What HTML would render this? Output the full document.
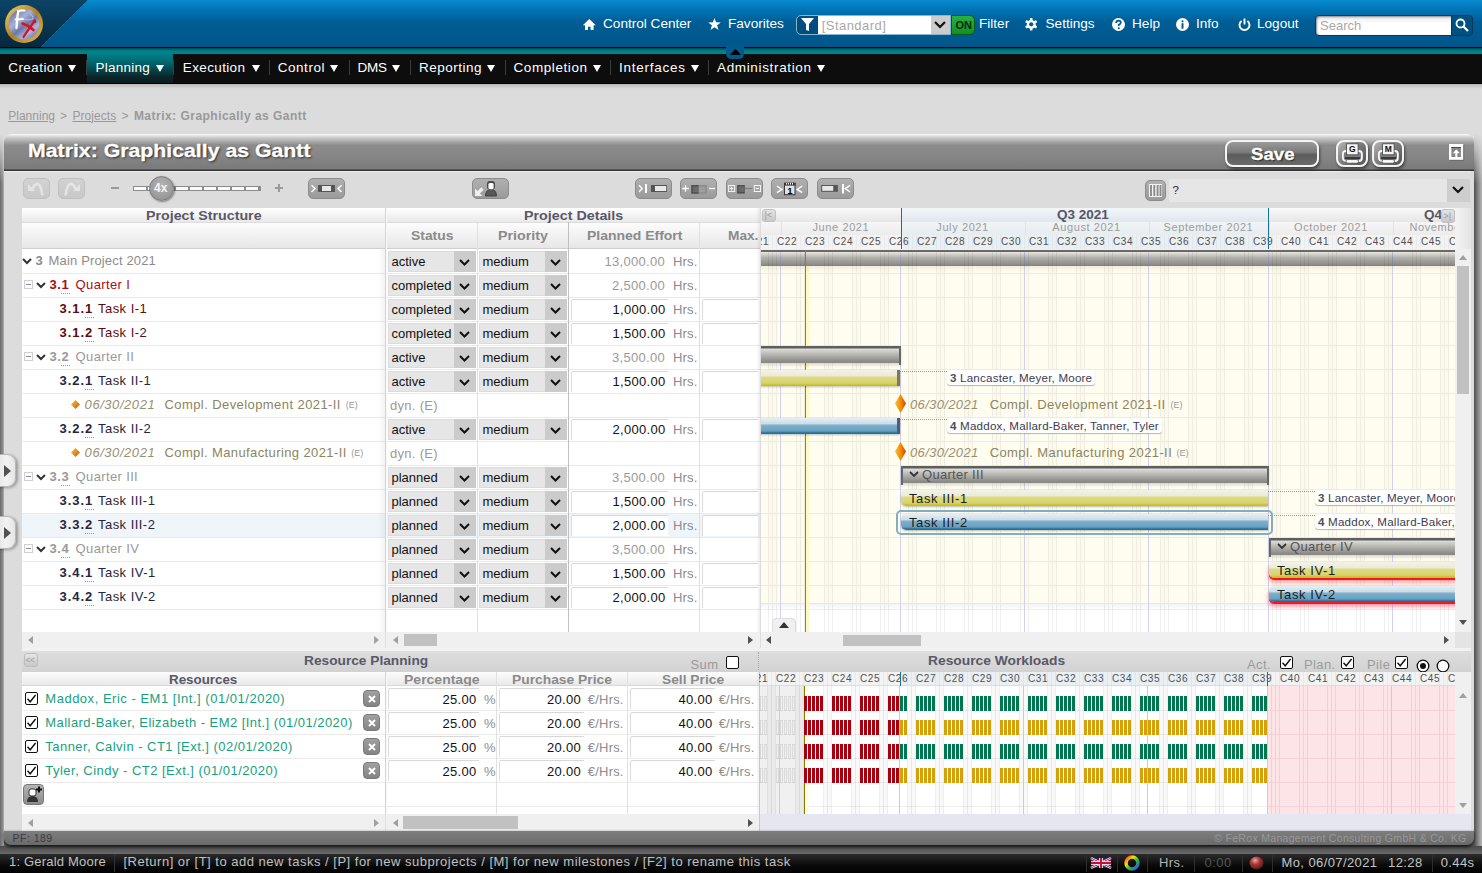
<!DOCTYPE html>
<html><head><meta charset="utf-8"><title>Matrix: Graphically as Gantt</title><style>
*{box-sizing:border-box}
html,body{margin:0;padding:0}
body{width:1482px;height:873px;overflow:hidden;position:relative;background:#dcdcdc;font-family:"Liberation Sans",sans-serif;font-size:13px;color:#222}
.a{position:absolute}
.t{position:absolute;white-space:nowrap}
svg{position:absolute;overflow:visible}
</style></head><body>
<div class="a" style="left:0px;top:0px;width:1482px;height:47px;background:linear-gradient(#0a8bd0 0px,#0074b6 10px,#005d94 22px,#00568b 46px)"></div>
<svg style="left:0;top:0" width="90" height="47"><defs><linearGradient id="tg" x1="0" y1="0" x2="0" y2="1"><stop offset="0" stop-color="#0c4466"/><stop offset="1" stop-color="#06283e"/></linearGradient>
<linearGradient id="lg" x1="0.1" y1="0" x2="0.9" y2="1"><stop offset="0" stop-color="#5a6898"/><stop offset="0.35" stop-color="#a8b0d8"/><stop offset="0.55" stop-color="#6a78a8"/><stop offset="0.75" stop-color="#b0b4e0"/><stop offset="1" stop-color="#5a6090"/></linearGradient>
<linearGradient id="gold" x1="0" y1="0" x2="1" y2="1"><stop offset="0" stop-color="#f0d070"/><stop offset="0.5" stop-color="#b08020"/><stop offset="1" stop-color="#e0b850"/></linearGradient></defs>
<polygon points="0,0 88,0 41,47 0,47" fill="url(#tg)"/><line x1="88" y1="0" x2="41" y2="47" stroke="#2a80b8" stroke-width="1" stroke-dasharray="1 1"/>
<circle cx="24" cy="24" r="19" fill="url(#gold)"/><circle cx="24" cy="24" r="15.3" fill="url(#lg)"/>
<path d="M30 14 Q34 16 33 19 Q28 21 24 19" stroke="#c8cce8" stroke-width="1" fill="none" opacity=".8"/>
<path d="M16.5 28 C17 22 17 16 18.5 11" stroke="#fff" stroke-width="2.3" fill="none" stroke-linecap="round"/><path d="M18 11 Q21 10 24.5 10.5" stroke="#fff" stroke-width="2.2" fill="none" stroke-linecap="round"/><path d="M15.5 19.5 L23 19" stroke="#fff" stroke-width="1.8" stroke-linecap="round"/>
<path d="M22.5 23.5 Q28 25 33.5 30" stroke="#d8101c" stroke-width="2.6" fill="none" stroke-linecap="round"/><path d="M35 20.5 Q30 27 23.5 37" stroke="#d8101c" stroke-width="2.2" fill="none" stroke-linecap="round"/><circle cx="34.5" cy="21.5" r="1.8" fill="#d8101c"/>
</svg>
<div class="a" style="left:0px;top:47px;width:1482px;height:1px;background:#000"></div>
<div class="a" style="left:0px;top:48px;width:1482px;height:6px;background:linear-gradient(#00454c,#007f88 45%,#00848d)"></div>
<div class="a" style="left:0px;top:54px;width:1482px;height:30px;background:linear-gradient(#0d0d0d 0,#0d0d0d 29px,#000 29px)"></div>
<div class="a" style="left:0px;top:84px;width:1482px;height:5px;background:linear-gradient(#b8b8b8,#dcdcdc)"></div>
<svg style="left:726px;top:44px" width="18" height="15"><path d="M0 0 H18 V9 Q18 15 12 15 H6 Q0 15 0 9 Z" fill="#005a8e"/><path d="M4 11 L9.5 4.8 L15 11 Z" fill="#000"/></svg>
<svg style="left:583px;top:19px" width="13" height="12"><path d="M6.3 0 L12.8 6.2 H10.6 V11 H7.6 V7.8 H5 V11 H2 V6.2 H-0.2 Z" fill="#fff"/></svg>
<div class="t " style="left:603px;top:16.99px;font-size:13.6px;line-height:13.6px;color:#fff;font-weight:normal;">Control Center</div>
<svg style="left:708px;top:18px" width="13" height="12"><path d="M6.5 0 L8.1 4.3 L12.8 4.5 L9.1 7.3 L10.5 12 L6.5 9.3 L2.5 12 L3.9 7.3 L0.2 4.5 L4.9 4.3 Z" fill="#fff"/></svg>
<div class="t " style="left:728px;top:16.99px;font-size:13.6px;line-height:13.6px;color:#fff;font-weight:normal;">Favorites</div>
<div class="a" style="left:796px;top:15px;width:155px;height:20px;border-radius:5px 0 0 5px;border:1px solid #8ab4d0;background:#004d7e;overflow:hidden">
<div class="a" style="left:21px;top:0;width:113px;height:18px;background:#fff"></div>
<div class="a" style="left:134px;top:0;width:20px;height:18px;background:#cccccc"></div>
</div>
<svg style="left:801px;top:18px" width="13" height="14"><path d="M0 0 H13 L8 6 V13 L5 12 V6 Z" fill="#fff"/></svg>
<div class="t " style="left:821.8px;top:19.30px;font-size:13px;line-height:13px;color:#a8a8a8;font-weight:normal;letter-spacing:0.444px;">[Standard]</div>
<svg style="left:934px;top:21px" width="12" height="8"><path d="M1 1 L6 6 L11 1" stroke="#111" stroke-width="2.2" fill="none"/></svg>
<div class="a" style="left:951px;top:15px;width:24px;height:20px;background:linear-gradient(#28b040,#109028);border-radius:0 5px 5px 0;border:1px solid #0a5a18"></div>
<div class="t " style="left:955.5px;top:19.69px;font-size:11px;line-height:11px;color:#062a0a;font-weight:bold;">ON</div>
<div class="t " style="left:979px;top:16.99px;font-size:13.6px;line-height:13.6px;color:#fff;font-weight:normal;">Filter</div>
<svg style="left:1025px;top:18px" width="13" height="13" viewBox="0 0 13 13"><g fill="#fff"><circle cx="6.2" cy="6.3" r="4.4"/><rect x="4.9" y="0" width="2.6" height="12.6" rx="0.6" transform="rotate(0 6.2 6.3)"/><rect x="4.9" y="0" width="2.6" height="12.6" rx="0.6" transform="rotate(60 6.2 6.3)"/><rect x="4.9" y="0" width="2.6" height="12.6" rx="0.6" transform="rotate(120 6.2 6.3)"/></g><circle cx="6.2" cy="6.3" r="2.1" fill="#005a8e"/></svg>
<div class="t " style="left:1045.5px;top:16.99px;font-size:13.6px;line-height:13.6px;color:#fff;font-weight:normal;">Settings</div>
<svg style="left:1112px;top:18px" width="13" height="13"><circle cx="6.5" cy="6.5" r="6.5" fill="#fff"/><path d="M4.2 5 Q4.2 2.6 6.5 2.6 Q8.8 2.6 8.8 4.6 Q8.8 6 6.8 6.8 V8" stroke="#005b90" stroke-width="1.8" fill="none"/><circle cx="6.8" cy="10.2" r="1" fill="#005b90"/></svg>
<div class="t " style="left:1132px;top:16.99px;font-size:13.6px;line-height:13.6px;color:#fff;font-weight:normal;">Help</div>
<svg style="left:1176px;top:18px" width="13" height="13"><circle cx="6.5" cy="6.5" r="6.5" fill="#fff"/><rect x="5.5" y="5.2" width="2" height="5.5" fill="#005b90"/><circle cx="6.5" cy="3.3" r="1.1" fill="#005b90"/></svg>
<div class="t " style="left:1196px;top:16.99px;font-size:13.6px;line-height:13.6px;color:#fff;font-weight:normal;">Info</div>
<svg style="left:1238px;top:18px" width="13" height="13"><path d="M3.6 3 A5 5 0 1 0 9.4 3" stroke="#fff" stroke-width="1.9" fill="none"/><line x1="6.5" y1="0.5" x2="6.5" y2="6.5" stroke="#fff" stroke-width="1.9"/></svg>
<div class="t " style="left:1257px;top:16.99px;font-size:13.6px;line-height:13.6px;color:#fff;font-weight:normal;">Logout</div>
<div class="a" style="left:1315px;top:15px;width:158px;height:21px;border-radius:4px;border:1px solid #0a3a5a;background:linear-gradient(#e8e8e8,#fff 40%);box-shadow:inset 1px 1px 2px #888"></div>
<div class="a" style="left:1451px;top:15px;width:22px;height:21px;background:#005080;border:1px solid #0a3a5a;border-radius:0 4px 4px 0"></div>
<svg style="left:1455px;top:18px" width="14" height="14"><circle cx="5.5" cy="5.5" r="4" stroke="#fff" stroke-width="1.8" fill="none"/><line x1="8.5" y1="8.5" x2="13" y2="13" stroke="#fff" stroke-width="2.2"/></svg>
<div class="t " style="left:1320px;top:18.50px;font-size:13px;line-height:13px;color:#a8a8a8;font-weight:normal;">Search</div>
<div class="a" style="left:87px;top:54px;width:86px;height:29px;background:linear-gradient(#00808a,#005a62 40%,#0c2a2e 75%,#0a1a1c 100%)"></div>
<div class="t " style="left:8.2px;top:60.77px;font-size:13.5px;line-height:13.5px;color:#fff;font-weight:normal;letter-spacing:0.443px;">Creation</div>
<svg style="left:68px;top:65px" width="8" height="7"><path d="M0 0 H8 L4 7 Z" fill="#fff"/></svg>
<div class="a" style="left:86px;top:60px;width:1px;height:15px;background:#3c3c3c"></div>
<div class="t " style="left:95.5px;top:60.77px;font-size:13.5px;line-height:13.5px;color:#fff;font-weight:normal;letter-spacing:0.229px;">Planning</div>
<svg style="left:156px;top:65px" width="8" height="7"><path d="M0 0 H8 L4 7 Z" fill="#fff"/></svg>
<div class="a" style="left:173.4px;top:60px;width:1px;height:15px;background:#3c3c3c"></div>
<div class="t " style="left:182.8px;top:60.77px;font-size:13.5px;line-height:13.5px;color:#fff;font-weight:normal;letter-spacing:0.363px;">Execution</div>
<svg style="left:251.6px;top:65px" width="8" height="7"><path d="M0 0 H8 L4 7 Z" fill="#fff"/></svg>
<div class="a" style="left:268.6px;top:60px;width:1px;height:15px;background:#3c3c3c"></div>
<div class="t " style="left:277.7px;top:60.77px;font-size:13.5px;line-height:13.5px;color:#fff;font-weight:normal;letter-spacing:0.550px;">Control</div>
<svg style="left:330.2px;top:65px" width="8" height="7"><path d="M0 0 H8 L4 7 Z" fill="#fff"/></svg>
<div class="a" style="left:348.5px;top:60px;width:1px;height:15px;background:#3c3c3c"></div>
<div class="t " style="left:357.6px;top:60.77px;font-size:13.5px;line-height:13.5px;color:#fff;font-weight:normal;letter-spacing:-0.250px;">DMS</div>
<svg style="left:392.2px;top:65px" width="8" height="7"><path d="M0 0 H8 L4 7 Z" fill="#fff"/></svg>
<div class="a" style="left:409.5px;top:60px;width:1px;height:15px;background:#3c3c3c"></div>
<div class="t " style="left:419px;top:60.77px;font-size:13.5px;line-height:13.5px;color:#fff;font-weight:normal;letter-spacing:0.500px;">Reporting</div>
<svg style="left:487px;top:65px" width="8" height="7"><path d="M0 0 H8 L4 7 Z" fill="#fff"/></svg>
<div class="a" style="left:504.6px;top:60px;width:1px;height:15px;background:#3c3c3c"></div>
<div class="t " style="left:513.5px;top:60.77px;font-size:13.5px;line-height:13.5px;color:#fff;font-weight:normal;letter-spacing:0.578px;">Completion</div>
<svg style="left:592.8px;top:65px" width="8" height="7"><path d="M0 0 H8 L4 7 Z" fill="#fff"/></svg>
<div class="a" style="left:609.5px;top:60px;width:1px;height:15px;background:#3c3c3c"></div>
<div class="t " style="left:619px;top:60.77px;font-size:13.5px;line-height:13.5px;color:#fff;font-weight:normal;letter-spacing:0.744px;">Interfaces</div>
<svg style="left:690.6px;top:65px" width="8" height="7"><path d="M0 0 H8 L4 7 Z" fill="#fff"/></svg>
<div class="a" style="left:708px;top:60px;width:1px;height:15px;background:#3c3c3c"></div>
<div class="t " style="left:717px;top:60.77px;font-size:13.5px;line-height:13.5px;color:#fff;font-weight:normal;letter-spacing:0.654px;">Administration</div>
<svg style="left:817px;top:65px" width="8" height="7"><path d="M0 0 H8 L4 7 Z" fill="#fff"/></svg>
<div class="t " style="left:8.2px;top:109.84px;font-size:12px;line-height:12px;color:#999;font-weight:normal;letter-spacing:0.014px;text-decoration:underline">Planning</div>
<div class="t " style="left:60px;top:109.84px;font-size:12px;line-height:12px;color:#999;font-weight:normal;">&gt;</div>
<div class="t " style="left:72.4px;top:109.84px;font-size:12px;line-height:12px;color:#999;font-weight:normal;letter-spacing:0.071px;text-decoration:underline">Projects</div>
<div class="t " style="left:121.4px;top:109.84px;font-size:12px;line-height:12px;color:#999;font-weight:normal;">&gt;</div>
<div class="t " style="left:133.9px;top:109.84px;font-size:12px;line-height:12px;color:#999;font-weight:bold;letter-spacing:0.481px;">Matrix: Graphically as Gantt</div>
<div class="a" style="left:0px;top:134px;width:4px;height:720px;background:linear-gradient(90deg,#6a6a6a,#8a8a8a 60%,#b0b0b0)"></div>
<div class="a" style="left:0px;top:134px;width:4px;height:50px;background:linear-gradient(#dcdcdc,rgba(220,220,220,0))"></div>
<div class="a" style="left:1474px;top:134px;width:8px;height:720px;background:linear-gradient(90deg,#505050,#7a7a7a 40%,#b8b8b8)"></div>
<div class="a" style="left:1474px;top:134px;width:8px;height:50px;background:linear-gradient(#dcdcdc,rgba(220,220,220,0))"></div>
<div class="a" style="left:4px;top:134px;width:1470px;height:700px;background:#dcdcdc;border-radius:8px 8px 0 0"></div>
<div class="a" style="left:4px;top:134px;width:1470px;height:37px;border-radius:8px 8px 0 0;background:linear-gradient(#fafafa 0px,#c8c8c8 4px,#8c8c8c 11px,#868686 22px,#7a7a7a 35px,#333 36px,#333 37px)"></div>
<div class="a" style="left:4px;top:171px;width:1467px;height:1px;background:#eeeeee"></div>
<div class="t " style="left:28.2px;top:142.14px;font-size:18.5px;line-height:18.5px;color:#fff;font-weight:bold;transform:scaleX(1.1498);transform-origin:0 0;text-shadow:1px 1px 2px #222;-webkit-text-stroke:0.3px #fff">Matrix: Graphically as Gantt</div>
<div class="a" style="left:1225px;top:140px;width:94px;height:27px;border:2px solid #f4f4f4;border-radius:8px;background:linear-gradient(#9a9a9a,#7a7a7a 45%,#5c5c5c 55%,#6a6a6a);box-shadow:1px 2px 3px rgba(0,0,0,.5)"></div>
<div class="t " style="left:1251px;top:145.53px;font-size:16.5px;line-height:16.5px;color:#fff;font-weight:bold;transform:scaleX(1.1299);transform-origin:0 0;text-shadow:1px 1px 1px #222;-webkit-text-stroke:0.3px #fff">Save</div>
<div class="a" style="left:1336px;top:140px;width:32px;height:27px;border:2px solid #f4f4f4;border-radius:8px;background:linear-gradient(135deg,#b4b4b4,#7a7a7a 50%,#555);box-shadow:1px 2px 3px rgba(0,0,0,.5)"></div>
<svg style="left:1342px;top:143px" width="21" height="21"><rect x="0.9" y="8" width="19" height="10" rx="3" fill="#7e7e7e" stroke="#fafafa" stroke-width="1.8"/><rect x="4.6" y="0.8" width="11.5" height="11" fill="#f6f6f6" stroke="#444" stroke-width="0.8"/><text x="10.4" y="9" font-family="Liberation Sans" font-weight="bold" font-size="8.5" text-anchor="middle" fill="#111">G</text><rect x="3" y="14" width="15" height="2" fill="#383838"/><rect x="4" y="16.6" width="12.5" height="3.6" rx="1.6" fill="#fff" stroke="#444" stroke-width="0.8"/></svg>
<div class="a" style="left:1372px;top:140px;width:32px;height:27px;border:2px solid #f4f4f4;border-radius:8px;background:linear-gradient(135deg,#b4b4b4,#7a7a7a 50%,#555);box-shadow:1px 2px 3px rgba(0,0,0,.5)"></div>
<svg style="left:1378px;top:143px" width="21" height="21"><rect x="0.9" y="8" width="19" height="10" rx="3" fill="#7e7e7e" stroke="#fafafa" stroke-width="1.8"/><rect x="4.6" y="0.8" width="11.5" height="11" fill="#f6f6f6" stroke="#444" stroke-width="0.8"/><text x="10.4" y="9" font-family="Liberation Sans" font-weight="bold" font-size="8.5" text-anchor="middle" fill="#111">M</text><rect x="3" y="14" width="15" height="2" fill="#383838"/><rect x="4" y="16.6" width="12.5" height="3.6" rx="1.6" fill="#fff" stroke="#444" stroke-width="0.8"/></svg>
<svg style="left:1449px;top:144px" width="16" height="17"><rect x="1" y="1" width="14.2" height="15.8" fill="#555" opacity=".6"/><rect x="0" y="0" width="14.2" height="15.8" fill="#fff"/><rect x="2.4" y="3" width="9.5" height="10" fill="#858585"/><rect x="2.4" y="3" width="9.5" height="1" fill="#4a4a4a"/><path d="M3.8 9.3 L7.3 5.3 L10.7 9.3 H8.3 V13 H6.3 V9.3 Z" fill="#fff"/></svg>
<div class="a" style="left:23px;top:178px;width:27px;height:21px;border-radius:5px;background:linear-gradient(#d2d2d2,#c8c8c8);border:1px solid #c0c0c0"></div>
<div class="a" style="left:58px;top:178px;width:27px;height:21px;border-radius:5px;background:linear-gradient(#d2d2d2,#c8c8c8);border:1px solid #c0c0c0"></div>
<svg style="left:23px;top:178px" width="27" height="21"><path d="M5 6 V13 H12 Z" fill="#e4e4e4"/><path d="M9 11 Q14 2.5 17 8 Q19 12 19.3 17.5" stroke="#e4e4e4" stroke-width="2.6" fill="none"/></svg>
<svg style="left:58px;top:178px" width="27" height="21"><path d="M22 6 V13 H15 Z" fill="#e4e4e4"/><path d="M18 11 Q13 2.5 10 8 Q8 12 7.7 17.5" stroke="#e4e4e4" stroke-width="2.6" fill="none"/></svg>
<div class="a" style="left:111px;top:187px;width:8px;height:2px;background:#9a9a9a"></div>
<div class="a" style="left:275px;top:187px;width:8px;height:2px;background:#9a9a9a"></div>
<div class="a" style="left:278px;top:184px;width:2px;height:8px;background:#9a9a9a"></div>
<div class="a" style="left:133px;top:186px;width:128px;height:5px;background:#8c8c8c"></div>
<div class="a" style="left:134px;top:187px;width:12px;height:3px;background:#fafafa"></div>
<div class="a" style="left:148px;top:187px;width:12px;height:3px;background:#fafafa"></div>
<div class="a" style="left:162px;top:187px;width:12px;height:3px;background:#fafafa"></div>
<div class="a" style="left:176px;top:187px;width:12px;height:3px;background:#fafafa"></div>
<div class="a" style="left:190px;top:187px;width:12px;height:3px;background:#fafafa"></div>
<div class="a" style="left:204px;top:187px;width:12px;height:3px;background:#fafafa"></div>
<div class="a" style="left:218px;top:187px;width:12px;height:3px;background:#fafafa"></div>
<div class="a" style="left:232px;top:187px;width:12px;height:3px;background:#fafafa"></div>
<div class="a" style="left:246px;top:187px;width:12px;height:3px;background:#fafafa"></div>
<div class="a" style="left:149px;top:175.5px;width:25px;height:25px;border-radius:50%;background:radial-gradient(circle at 50% 35%,#b4b4b4,#8e8e8e);border:1px solid #7a7a7a;box-shadow:1px 1px 2px rgba(0,0,0,.4)"></div>
<div class="t " style="left:154px;top:182.34px;font-size:12px;line-height:12px;color:#f4f4f4;font-weight:bold;">4x</div>
<div class="a" style="left:308px;top:178px;width:37px;height:21px;border-radius:5px;background:linear-gradient(#b0b0b0,#9a9a9a);border:1px solid #8c8c8c"></div>
<svg style="left:308px;top:178px" width="37" height="21"><path d="M3.5 7.3 L7 10.6 L3.5 14" stroke="#fff" stroke-width="1.4" fill="none"/><rect x="10" y="7" width="17" height="7" fill="#555"/><rect x="14" y="8" width="9" height="5" fill="#e8e8e8"/><path d="M33.5 7.3 L30 10.6 L33.5 14" stroke="#fff" stroke-width="1.4" fill="none"/></svg>
<div class="a" style="left:472px;top:178px;width:37px;height:21px;border-radius:5px;background:linear-gradient(#b0b0b0,#9a9a9a);border:1px solid #8c8c8c"></div>
<svg style="left:472px;top:178px" width="37" height="21"><path d="M3 10.5 V18 H10.5 Z" fill="#eee"/><path d="M5.5 15.5 L10.5 10.5" stroke="#eee" stroke-width="3.2"/><path d="M13.5 18 Q13.5 11.5 19 11.5 Q24.5 11.5 24.5 18 Z" fill="#585858" stroke="#333" stroke-width="0.8"/><rect x="15" y="3" width="8" height="8.8" rx="3" fill="#484848"/><rect x="16.4" y="5" width="5.2" height="6.2" rx="1.5" fill="#fff"/></svg>
<div class="a" style="left:635px;top:178px;width:37px;height:21px;border-radius:5px;background:linear-gradient(#b0b0b0,#9a9a9a);border:1px solid #8c8c8c"></div>
<svg style="left:635px;top:178px" width="37" height="21"><path d="M4 7.3 L7.2 10.6 L4 14" stroke="#fff" stroke-width="1.4" fill="none"/><rect x="10" y="6" width="2" height="9" fill="#fff"/><rect x="16" y="7" width="16" height="7" fill="#555"/><rect x="20" y="8" width="11.2" height="5" fill="#e8e8e8"/></svg>
<div class="a" style="left:680px;top:178px;width:37px;height:21px;border-radius:5px;background:linear-gradient(#b0b0b0,#9a9a9a);border:1px solid #8c8c8c"></div>
<svg style="left:680px;top:178px" width="37" height="21"><path d="M2.2 10.5 H8.8 M5.5 7.2 V13.8" stroke="#fff" stroke-width="1.3"/><rect x="11.2" y="7" width="7.6" height="8.8" fill="#505050"/><rect x="12.8" y="8.5" width="6" height="5.8" fill="#6a6a6a"/><rect x="18.8" y="7" width="8" height="8.8" fill="#8c8c8c"/><rect x="18.8" y="8.5" width="6.3" height="5.8" fill="#9e9e9e"/><path d="M29 10.5 H35" stroke="#fff" stroke-width="1.3"/></svg>
<div class="a" style="left:726px;top:178px;width:37px;height:21px;border-radius:5px;background:linear-gradient(#b0b0b0,#9a9a9a);border:1px solid #8c8c8c"></div>
<svg style="left:726px;top:178px" width="37" height="21"><rect x="2.6" y="7.5" width="6" height="6" fill="none" stroke="#f4f4f4" stroke-width="1"/><path d="M3.9 10.5 H7.3 M5.6 8.8 V12.2" stroke="#f4f4f4" stroke-width="1"/><rect x="11.1" y="7" width="7.7" height="8.6" fill="#505050"/><rect x="12.6" y="8.4" width="6.2" height="5.5" fill="#6a6a6a"/><path d="M18.8 10.5 H26.5" stroke="#7a7a7a" stroke-width="1"/><rect x="28.3" y="7.5" width="6.2" height="6" fill="none" stroke="#f4f4f4" stroke-width="1"/><path d="M29.7 10.5 H33.1" stroke="#f4f4f4" stroke-width="1"/></svg>
<div class="a" style="left:771px;top:178px;width:37px;height:21px;border-radius:5px;background:linear-gradient(#b0b0b0,#9a9a9a);border:1px solid #8c8c8c"></div>
<svg style="left:771px;top:178px" width="37" height="21"><path d="M5.9 8 L10.9 11.4 L5.9 14.7" stroke="#fff" stroke-width="1.5" fill="none"/><rect x="13.5" y="5.3" width="10.5" height="11.4" fill="#e2e2e2" stroke="#383838" stroke-width="1"/><rect x="13" y="4.8" width="11.5" height="2.8" fill="#383838"/><path d="M15.5 5 V6.6 M17.5 5 V6.6 M19.5 5 V6.6 M21.5 5 V6.6" stroke="#fff" stroke-width="0.9"/><text x="18.8" y="16" font-family="Liberation Sans" font-weight="bold" font-size="9.5" text-anchor="middle" fill="#000">1</text><path d="M31.2 8 L26.2 11.4 L31.2 14.7" stroke="#fff" stroke-width="1.5" fill="none"/></svg>
<div class="a" style="left:817px;top:178px;width:37px;height:21px;border-radius:5px;background:linear-gradient(#b0b0b0,#9a9a9a);border:1px solid #8c8c8c"></div>
<svg style="left:817px;top:178px" width="37" height="21"><rect x="4.2" y="7" width="16.7" height="6.8" fill="#555"/><rect x="5.2" y="8" width="11" height="4.8" fill="#e8e8e8"/><rect x="25" y="6" width="2" height="9.5" fill="#fff"/><path d="M33 7.3 L28.2 10.6 L33 14" stroke="#fff" stroke-width="1.4" fill="none"/></svg>
<div class="a" style="left:1145px;top:180px;width:21px;height:21px;border-radius:5px;background:linear-gradient(#b0b0b0,#9a9a9a);border:1px solid #8c8c8c"></div>
<svg style="left:1145px;top:180px" width="21" height="21"><rect x="4" y="4" width="13" height="13" fill="#f4f4f4"/><path d="M6 5 V16 M9.3 5 V16 M12.6 5 V16 M15.5 5 V16" stroke="#8a8a8a" stroke-width="1.9"/></svg>
<div class="a" style="left:1169px;top:179px;width:278px;height:23px;background:#e6e6e6"></div>
<div class="a" style="left:1447px;top:179px;width:23px;height:23px;background:#cecece"></div>
<svg style="left:1452px;top:186px" width="12" height="8"><path d="M1 1 L6 6 L11 1" stroke="#111" stroke-width="2.2" fill="none"/></svg>
<div class="t " style="left:1172.5px;top:185.27px;font-size:11.5px;line-height:11.5px;color:#222;font-weight:normal;">?</div>
<div class="a" style="left:22px;top:208px;width:738px;height:14px;background:linear-gradient(#ffffff,#e9e9e9)"></div>
<div class="a" style="left:22px;top:222px;width:738px;height:27px;background:linear-gradient(#fdfdfd,#e6e6e6)"></div>
<div class="a" style="left:22px;top:222px;width:738px;height:1px;background:#dddddd"></div>
<div class="a" style="left:22px;top:248px;width:738px;height:1px;background:#cfcfcf"></div>
<div class="a" style="left:22px;top:249px;width:738px;height:383px;background:#fff"></div>
<div class="a" style="left:22px;top:513px;width:738px;height:24px;background:#f0f5f9"></div>
<div class="a" style="left:22px;top:273px;width:738px;height:1px;background:#e9e9e9"></div>
<div class="a" style="left:22px;top:297px;width:738px;height:1px;background:#e9e9e9"></div>
<div class="a" style="left:22px;top:321px;width:738px;height:1px;background:#e9e9e9"></div>
<div class="a" style="left:22px;top:345px;width:738px;height:1px;background:#e9e9e9"></div>
<div class="a" style="left:22px;top:369px;width:738px;height:1px;background:#e9e9e9"></div>
<div class="a" style="left:22px;top:393px;width:738px;height:1px;background:#e9e9e9"></div>
<div class="a" style="left:22px;top:417px;width:738px;height:1px;background:#e9e9e9"></div>
<div class="a" style="left:22px;top:441px;width:738px;height:1px;background:#e9e9e9"></div>
<div class="a" style="left:22px;top:465px;width:738px;height:1px;background:#e9e9e9"></div>
<div class="a" style="left:22px;top:489px;width:738px;height:1px;background:#e9e9e9"></div>
<div class="a" style="left:22px;top:513px;width:738px;height:1px;background:#e9e9e9"></div>
<div class="a" style="left:22px;top:537px;width:738px;height:1px;background:#e9e9e9"></div>
<div class="a" style="left:22px;top:561px;width:738px;height:1px;background:#e9e9e9"></div>
<div class="a" style="left:22px;top:585px;width:738px;height:1px;background:#e9e9e9"></div>
<div class="a" style="left:22px;top:609px;width:738px;height:1px;background:#e9e9e9"></div>
<div class="a" style="left:378px;top:249px;width:7px;height:383px;background:linear-gradient(90deg,rgba(0,0,0,0),rgba(0,0,0,.05))"></div>
<div class="a" style="left:385px;top:208px;width:1px;height:424px;background:#d4d4d4"></div>
<div class="a" style="left:386px;top:208px;width:1px;height:424px;background:#f8f8f8"></div>
<div class="a" style="left:477px;top:222px;width:1px;height:410px;background:#e0e0e0"></div>
<div class="a" style="left:568px;top:222px;width:1px;height:410px;background:#c0c0c0"></div>
<div class="a" style="left:699px;top:222px;width:1px;height:410px;background:#e0e0e0"></div>
<div class="a" style="left:756px;top:208px;width:4px;height:424px;background:linear-gradient(90deg,rgba(0,0,0,0),rgba(0,0,0,.07))"></div>
<div class="t " style="left:145.7px;top:208.80px;font-size:13px;line-height:13px;color:#585868;font-weight:bold;transform:scaleX(1.0957);transform-origin:0 0;">Project Structure</div>
<div class="t " style="left:523.5px;top:209.00px;font-size:13px;line-height:13px;color:#585868;font-weight:bold;transform:scaleX(1.0986);transform-origin:0 0;">Project Details</div>
<div class="t " style="left:411px;top:229.00px;font-size:13px;line-height:13px;color:#8a8a8a;font-weight:bold;transform:scaleX(1.0680);transform-origin:0 0;">Status</div>
<div class="t " style="left:498px;top:229.00px;font-size:13px;line-height:13px;color:#8a8a8a;font-weight:bold;transform:scaleX(1.0945);transform-origin:0 0;">Priority</div>
<div class="t " style="left:586.6px;top:229.00px;font-size:13px;line-height:13px;color:#8a8a8a;font-weight:bold;transform:scaleX(1.0743);transform-origin:0 0;">Planned Effort</div>
<div class="t " style="left:728.3px;top:229.00px;font-size:13px;line-height:13px;color:#8a8a8a;font-weight:bold;transform:scaleX(1.0519);transform-origin:0 0;">Max.</div>
<svg style="left:22px;top:258px" width="10" height="7"><path d="M1 1 L5 5 L9 1" stroke="#333" stroke-width="2" fill="none"/></svg>
<div class="t " style="left:35.5px;top:253.60px;font-size:13px;line-height:13px;color:#8c8c8c;font-weight:bold;">3</div>
<div class="t " style="left:48.6px;top:253.60px;font-size:13px;line-height:13px;color:#8c8c8c;font-weight:normal;letter-spacing:0.15px">Main Project 2021</div>
<div class="a" style="left:388px;top:251px;width:88px;height:21px;background:#e6e6e6;border:1px solid #dcdcdc"></div>
<div class="a" style="left:454px;top:251px;width:22px;height:21px;background:#cbcbcb"></div>
<svg style="left:459px;top:259px" width="11" height="7"><path d="M1 1 L5.5 5.5 L10 1" stroke="#111" stroke-width="2" fill="none"/></svg>
<div class="t " style="left:391.5px;top:254.50px;font-size:13px;line-height:13px;color:#111;font-weight:normal;">active</div>
<div class="a" style="left:479px;top:251px;width:88px;height:21px;background:#e6e6e6;border:1px solid #dcdcdc"></div>
<div class="a" style="left:545px;top:251px;width:22px;height:21px;background:#cbcbcb"></div>
<svg style="left:550px;top:259px" width="11" height="7"><path d="M1 1 L5.5 5.5 L10 1" stroke="#111" stroke-width="2" fill="none"/></svg>
<div class="t " style="left:482.5px;top:254.50px;font-size:13px;line-height:13px;color:#111;font-weight:normal;">medium</div>
<div class="t " style="right:817px;top:255.00px;font-size:13px;line-height:13px;color:#999;font-weight:normal;letter-spacing:0.3px">13,000.00</div>
<div class="t " style="left:673px;top:255.00px;font-size:13px;line-height:13px;color:#8c8c8c;font-weight:normal;letter-spacing:0.2px">Hrs.</div>
<div class="a" style="left:24px;top:280px;width:9px;height:9px;border:1px solid #cfcfcf;background:#fff"></div>
<div class="a" style="left:26px;top:284px;width:5px;height:1px;background:#8888aa"></div>
<svg style="left:36px;top:282px" width="10" height="7"><path d="M1 1 L5 5 L9 1" stroke="#333" stroke-width="2" fill="none"/></svg>
<div class="t " style="left:49.5px;top:277.60px;font-size:13px;line-height:13px;color:#a80c14;font-weight:bold;letter-spacing:0.6px">3.1</div>
<div class="a" style="left:60.5px;top:292.6px;width:9px;height:1px;border-top:1px dotted #9a9a9a"></div>
<div class="t " style="left:75.6px;top:277.60px;font-size:13px;line-height:13px;color:#a80c14;font-weight:normal;letter-spacing:0.36px">Quarter I</div>
<div class="a" style="left:388px;top:275px;width:88px;height:21px;background:#e6e6e6;border:1px solid #dcdcdc"></div>
<div class="a" style="left:454px;top:275px;width:22px;height:21px;background:#cbcbcb"></div>
<svg style="left:459px;top:283px" width="11" height="7"><path d="M1 1 L5.5 5.5 L10 1" stroke="#111" stroke-width="2" fill="none"/></svg>
<div class="t " style="left:391.5px;top:278.50px;font-size:13px;line-height:13px;color:#111;font-weight:normal;">completed</div>
<div class="a" style="left:479px;top:275px;width:88px;height:21px;background:#e6e6e6;border:1px solid #dcdcdc"></div>
<div class="a" style="left:545px;top:275px;width:22px;height:21px;background:#cbcbcb"></div>
<svg style="left:550px;top:283px" width="11" height="7"><path d="M1 1 L5.5 5.5 L10 1" stroke="#111" stroke-width="2" fill="none"/></svg>
<div class="t " style="left:482.5px;top:278.50px;font-size:13px;line-height:13px;color:#111;font-weight:normal;">medium</div>
<div class="t " style="right:817px;top:279.00px;font-size:13px;line-height:13px;color:#999;font-weight:normal;letter-spacing:0.3px">2,500.00</div>
<div class="t " style="left:673px;top:279.00px;font-size:13px;line-height:13px;color:#8c8c8c;font-weight:normal;letter-spacing:0.2px">Hrs.</div>
<div class="t " style="left:59.5px;top:301.60px;font-size:13px;line-height:13px;color:#5c0c12;font-weight:bold;letter-spacing:0.95px">3.1.1</div>
<div class="a" style="left:84.5px;top:316.6px;width:9px;height:1px;border-top:1px dotted #9a9a9a"></div>
<div class="t " style="left:98px;top:301.60px;font-size:13px;line-height:13px;color:#5c0c12;font-weight:normal;letter-spacing:0.46px">Task I-1</div>
<div class="a" style="left:388px;top:299px;width:88px;height:21px;background:#e6e6e6;border:1px solid #dcdcdc"></div>
<div class="a" style="left:454px;top:299px;width:22px;height:21px;background:#cbcbcb"></div>
<svg style="left:459px;top:307px" width="11" height="7"><path d="M1 1 L5.5 5.5 L10 1" stroke="#111" stroke-width="2" fill="none"/></svg>
<div class="t " style="left:391.5px;top:302.50px;font-size:13px;line-height:13px;color:#111;font-weight:normal;">completed</div>
<div class="a" style="left:479px;top:299px;width:88px;height:21px;background:#e6e6e6;border:1px solid #dcdcdc"></div>
<div class="a" style="left:545px;top:299px;width:22px;height:21px;background:#cbcbcb"></div>
<svg style="left:550px;top:307px" width="11" height="7"><path d="M1 1 L5.5 5.5 L10 1" stroke="#111" stroke-width="2" fill="none"/></svg>
<div class="t " style="left:482.5px;top:302.50px;font-size:13px;line-height:13px;color:#111;font-weight:normal;">medium</div>
<div class="a" style="left:571px;top:299px;width:97px;height:21px;background:#fff;border-top:1px solid #d8d8d8;border-left:1px solid #dcdcdc;border-radius:2px 0 0 0"></div>
<div class="t " style="right:816.5px;top:303.00px;font-size:13px;line-height:13px;color:#111;font-weight:normal;letter-spacing:0.3px">1,000.00</div>
<div class="a" style="left:702px;top:299px;width:56px;height:21px;background:#fff;border-top:1px solid #d8d8d8;border-left:1px solid #dcdcdc;border-radius:2px 0 0 0"></div>
<div class="t " style="left:673px;top:303.00px;font-size:13px;line-height:13px;color:#8c8c8c;font-weight:normal;letter-spacing:0.2px">Hrs.</div>
<div class="t " style="left:59.5px;top:325.60px;font-size:13px;line-height:13px;color:#5c0c12;font-weight:bold;letter-spacing:0.95px">3.1.2</div>
<div class="a" style="left:84.5px;top:340.6px;width:9px;height:1px;border-top:1px dotted #9a9a9a"></div>
<div class="t " style="left:98px;top:325.60px;font-size:13px;line-height:13px;color:#5c0c12;font-weight:normal;letter-spacing:0.46px">Task I-2</div>
<div class="a" style="left:388px;top:323px;width:88px;height:21px;background:#e6e6e6;border:1px solid #dcdcdc"></div>
<div class="a" style="left:454px;top:323px;width:22px;height:21px;background:#cbcbcb"></div>
<svg style="left:459px;top:331px" width="11" height="7"><path d="M1 1 L5.5 5.5 L10 1" stroke="#111" stroke-width="2" fill="none"/></svg>
<div class="t " style="left:391.5px;top:326.50px;font-size:13px;line-height:13px;color:#111;font-weight:normal;">completed</div>
<div class="a" style="left:479px;top:323px;width:88px;height:21px;background:#e6e6e6;border:1px solid #dcdcdc"></div>
<div class="a" style="left:545px;top:323px;width:22px;height:21px;background:#cbcbcb"></div>
<svg style="left:550px;top:331px" width="11" height="7"><path d="M1 1 L5.5 5.5 L10 1" stroke="#111" stroke-width="2" fill="none"/></svg>
<div class="t " style="left:482.5px;top:326.50px;font-size:13px;line-height:13px;color:#111;font-weight:normal;">medium</div>
<div class="a" style="left:571px;top:323px;width:97px;height:21px;background:#fff;border-top:1px solid #d8d8d8;border-left:1px solid #dcdcdc;border-radius:2px 0 0 0"></div>
<div class="t " style="right:816.5px;top:327.00px;font-size:13px;line-height:13px;color:#111;font-weight:normal;letter-spacing:0.3px">1,500.00</div>
<div class="a" style="left:702px;top:323px;width:56px;height:21px;background:#fff;border-top:1px solid #d8d8d8;border-left:1px solid #dcdcdc;border-radius:2px 0 0 0"></div>
<div class="t " style="left:673px;top:327.00px;font-size:13px;line-height:13px;color:#8c8c8c;font-weight:normal;letter-spacing:0.2px">Hrs.</div>
<div class="a" style="left:24px;top:352px;width:9px;height:9px;border:1px solid #cfcfcf;background:#fff"></div>
<div class="a" style="left:26px;top:356px;width:5px;height:1px;background:#8888aa"></div>
<svg style="left:36px;top:354px" width="10" height="7"><path d="M1 1 L5 5 L9 1" stroke="#333" stroke-width="2" fill="none"/></svg>
<div class="t " style="left:49.5px;top:349.60px;font-size:13px;line-height:13px;color:#999999;font-weight:bold;letter-spacing:0.6px">3.2</div>
<div class="a" style="left:60.5px;top:364.6px;width:9px;height:1px;border-top:1px dotted #9a9a9a"></div>
<div class="t " style="left:75.6px;top:349.60px;font-size:13px;line-height:13px;color:#999999;font-weight:normal;letter-spacing:0.36px">Quarter II</div>
<div class="a" style="left:388px;top:347px;width:88px;height:21px;background:#e6e6e6;border:1px solid #dcdcdc"></div>
<div class="a" style="left:454px;top:347px;width:22px;height:21px;background:#cbcbcb"></div>
<svg style="left:459px;top:355px" width="11" height="7"><path d="M1 1 L5.5 5.5 L10 1" stroke="#111" stroke-width="2" fill="none"/></svg>
<div class="t " style="left:391.5px;top:350.50px;font-size:13px;line-height:13px;color:#111;font-weight:normal;">active</div>
<div class="a" style="left:479px;top:347px;width:88px;height:21px;background:#e6e6e6;border:1px solid #dcdcdc"></div>
<div class="a" style="left:545px;top:347px;width:22px;height:21px;background:#cbcbcb"></div>
<svg style="left:550px;top:355px" width="11" height="7"><path d="M1 1 L5.5 5.5 L10 1" stroke="#111" stroke-width="2" fill="none"/></svg>
<div class="t " style="left:482.5px;top:350.50px;font-size:13px;line-height:13px;color:#111;font-weight:normal;">medium</div>
<div class="t " style="right:817px;top:351.00px;font-size:13px;line-height:13px;color:#999;font-weight:normal;letter-spacing:0.3px">3,500.00</div>
<div class="t " style="left:673px;top:351.00px;font-size:13px;line-height:13px;color:#8c8c8c;font-weight:normal;letter-spacing:0.2px">Hrs.</div>
<div class="t " style="left:59.5px;top:373.60px;font-size:13px;line-height:13px;color:#262640;font-weight:bold;letter-spacing:0.95px">3.2.1</div>
<div class="a" style="left:84.5px;top:388.6px;width:9px;height:1px;border-top:1px dotted #9a9a9a"></div>
<div class="t " style="left:98px;top:373.60px;font-size:13px;line-height:13px;color:#262640;font-weight:normal;letter-spacing:0.46px">Task II-1</div>
<div class="a" style="left:388px;top:371px;width:88px;height:21px;background:#e6e6e6;border:1px solid #dcdcdc"></div>
<div class="a" style="left:454px;top:371px;width:22px;height:21px;background:#cbcbcb"></div>
<svg style="left:459px;top:379px" width="11" height="7"><path d="M1 1 L5.5 5.5 L10 1" stroke="#111" stroke-width="2" fill="none"/></svg>
<div class="t " style="left:391.5px;top:374.50px;font-size:13px;line-height:13px;color:#111;font-weight:normal;">active</div>
<div class="a" style="left:479px;top:371px;width:88px;height:21px;background:#e6e6e6;border:1px solid #dcdcdc"></div>
<div class="a" style="left:545px;top:371px;width:22px;height:21px;background:#cbcbcb"></div>
<svg style="left:550px;top:379px" width="11" height="7"><path d="M1 1 L5.5 5.5 L10 1" stroke="#111" stroke-width="2" fill="none"/></svg>
<div class="t " style="left:482.5px;top:374.50px;font-size:13px;line-height:13px;color:#111;font-weight:normal;">medium</div>
<div class="a" style="left:571px;top:371px;width:97px;height:21px;background:#fff;border-top:1px solid #d8d8d8;border-left:1px solid #dcdcdc;border-radius:2px 0 0 0"></div>
<div class="t " style="right:816.5px;top:375.00px;font-size:13px;line-height:13px;color:#111;font-weight:normal;letter-spacing:0.3px">1,500.00</div>
<div class="a" style="left:702px;top:371px;width:56px;height:21px;background:#fff;border-top:1px solid #d8d8d8;border-left:1px solid #dcdcdc;border-radius:2px 0 0 0"></div>
<div class="t " style="left:673px;top:375.00px;font-size:13px;line-height:13px;color:#8c8c8c;font-weight:normal;letter-spacing:0.2px">Hrs.</div>
<svg style="left:70.5px;top:399.5px" width="9" height="9"><defs><linearGradient id="dg70.5399.5" x1="0" y1="0" x2="1" y2="1"><stop offset="0" stop-color="#ffc040"/><stop offset="1" stop-color="#c85a00"/></linearGradient></defs><path d="M4.5 0 L9 4.5 L4.5 9 L0 4.5 Z" fill="url(#dg70.5399.5)"/></svg>
<div class="t " style="left:84.6px;top:397.60px;font-size:13px;line-height:13px;color:#9a9070;font-weight:normal;letter-spacing:0.556px;font-style:italic;">06/30/2021</div>
<div class="t " style="left:164.5px;top:397.60px;font-size:13px;line-height:13px;color:#8c8460;font-weight:normal;letter-spacing:0.420px;">Compl. Development 2021-II</div>
<div class="t " style="left:345.7px;top:400.98px;font-size:9px;line-height:9px;color:#9a9a9a;font-weight:normal;">(E)</div>
<div class="t " style="left:390px;top:399.10px;font-size:13px;line-height:13px;color:#999;font-weight:normal;letter-spacing:0.3px">dyn. (E)</div>
<div class="t " style="left:59.5px;top:421.60px;font-size:13px;line-height:13px;color:#262640;font-weight:bold;letter-spacing:0.95px">3.2.2</div>
<div class="a" style="left:84.5px;top:436.6px;width:9px;height:1px;border-top:1px dotted #9a9a9a"></div>
<div class="t " style="left:98px;top:421.60px;font-size:13px;line-height:13px;color:#262640;font-weight:normal;letter-spacing:0.46px">Task II-2</div>
<div class="a" style="left:388px;top:419px;width:88px;height:21px;background:#e6e6e6;border:1px solid #dcdcdc"></div>
<div class="a" style="left:454px;top:419px;width:22px;height:21px;background:#cbcbcb"></div>
<svg style="left:459px;top:427px" width="11" height="7"><path d="M1 1 L5.5 5.5 L10 1" stroke="#111" stroke-width="2" fill="none"/></svg>
<div class="t " style="left:391.5px;top:422.50px;font-size:13px;line-height:13px;color:#111;font-weight:normal;">active</div>
<div class="a" style="left:479px;top:419px;width:88px;height:21px;background:#e6e6e6;border:1px solid #dcdcdc"></div>
<div class="a" style="left:545px;top:419px;width:22px;height:21px;background:#cbcbcb"></div>
<svg style="left:550px;top:427px" width="11" height="7"><path d="M1 1 L5.5 5.5 L10 1" stroke="#111" stroke-width="2" fill="none"/></svg>
<div class="t " style="left:482.5px;top:422.50px;font-size:13px;line-height:13px;color:#111;font-weight:normal;">medium</div>
<div class="a" style="left:571px;top:419px;width:97px;height:21px;background:#fff;border-top:1px solid #d8d8d8;border-left:1px solid #dcdcdc;border-radius:2px 0 0 0"></div>
<div class="t " style="right:816.5px;top:423.00px;font-size:13px;line-height:13px;color:#111;font-weight:normal;letter-spacing:0.3px">2,000.00</div>
<div class="a" style="left:702px;top:419px;width:56px;height:21px;background:#fff;border-top:1px solid #d8d8d8;border-left:1px solid #dcdcdc;border-radius:2px 0 0 0"></div>
<div class="t " style="left:673px;top:423.00px;font-size:13px;line-height:13px;color:#8c8c8c;font-weight:normal;letter-spacing:0.2px">Hrs.</div>
<svg style="left:70.5px;top:447.5px" width="9" height="9"><defs><linearGradient id="dg70.5447.5" x1="0" y1="0" x2="1" y2="1"><stop offset="0" stop-color="#ffc040"/><stop offset="1" stop-color="#c85a00"/></linearGradient></defs><path d="M4.5 0 L9 4.5 L4.5 9 L0 4.5 Z" fill="url(#dg70.5447.5)"/></svg>
<div class="t " style="left:84.6px;top:445.60px;font-size:13px;line-height:13px;color:#9a9070;font-weight:normal;letter-spacing:0.556px;font-style:italic;">06/30/2021</div>
<div class="t " style="left:164.5px;top:445.60px;font-size:13px;line-height:13px;color:#8c8460;font-weight:normal;letter-spacing:0.389px;">Compl. Manufacturing 2021-II</div>
<div class="t " style="left:351.3px;top:448.98px;font-size:9px;line-height:9px;color:#9a9a9a;font-weight:normal;">(E)</div>
<div class="t " style="left:390px;top:447.10px;font-size:13px;line-height:13px;color:#999;font-weight:normal;letter-spacing:0.3px">dyn. (E)</div>
<div class="a" style="left:24px;top:472px;width:9px;height:9px;border:1px solid #cfcfcf;background:#fff"></div>
<div class="a" style="left:26px;top:476px;width:5px;height:1px;background:#8888aa"></div>
<svg style="left:36px;top:474px" width="10" height="7"><path d="M1 1 L5 5 L9 1" stroke="#333" stroke-width="2" fill="none"/></svg>
<div class="t " style="left:49.5px;top:469.60px;font-size:13px;line-height:13px;color:#999999;font-weight:bold;letter-spacing:0.6px">3.3</div>
<div class="a" style="left:60.5px;top:484.6px;width:9px;height:1px;border-top:1px dotted #9a9a9a"></div>
<div class="t " style="left:75.6px;top:469.60px;font-size:13px;line-height:13px;color:#999999;font-weight:normal;letter-spacing:0.36px">Quarter III</div>
<div class="a" style="left:388px;top:467px;width:88px;height:21px;background:#e6e6e6;border:1px solid #dcdcdc"></div>
<div class="a" style="left:454px;top:467px;width:22px;height:21px;background:#cbcbcb"></div>
<svg style="left:459px;top:475px" width="11" height="7"><path d="M1 1 L5.5 5.5 L10 1" stroke="#111" stroke-width="2" fill="none"/></svg>
<div class="t " style="left:391.5px;top:470.50px;font-size:13px;line-height:13px;color:#111;font-weight:normal;">planned</div>
<div class="a" style="left:479px;top:467px;width:88px;height:21px;background:#e6e6e6;border:1px solid #dcdcdc"></div>
<div class="a" style="left:545px;top:467px;width:22px;height:21px;background:#cbcbcb"></div>
<svg style="left:550px;top:475px" width="11" height="7"><path d="M1 1 L5.5 5.5 L10 1" stroke="#111" stroke-width="2" fill="none"/></svg>
<div class="t " style="left:482.5px;top:470.50px;font-size:13px;line-height:13px;color:#111;font-weight:normal;">medium</div>
<div class="t " style="right:817px;top:471.00px;font-size:13px;line-height:13px;color:#999;font-weight:normal;letter-spacing:0.3px">3,500.00</div>
<div class="t " style="left:673px;top:471.00px;font-size:13px;line-height:13px;color:#8c8c8c;font-weight:normal;letter-spacing:0.2px">Hrs.</div>
<div class="t " style="left:59.5px;top:493.60px;font-size:13px;line-height:13px;color:#262640;font-weight:bold;letter-spacing:0.95px">3.3.1</div>
<div class="a" style="left:84.5px;top:508.6px;width:9px;height:1px;border-top:1px dotted #9a9a9a"></div>
<div class="t " style="left:98px;top:493.60px;font-size:13px;line-height:13px;color:#262640;font-weight:normal;letter-spacing:0.46px">Task III-1</div>
<div class="a" style="left:388px;top:491px;width:88px;height:21px;background:#e6e6e6;border:1px solid #dcdcdc"></div>
<div class="a" style="left:454px;top:491px;width:22px;height:21px;background:#cbcbcb"></div>
<svg style="left:459px;top:499px" width="11" height="7"><path d="M1 1 L5.5 5.5 L10 1" stroke="#111" stroke-width="2" fill="none"/></svg>
<div class="t " style="left:391.5px;top:494.50px;font-size:13px;line-height:13px;color:#111;font-weight:normal;">planned</div>
<div class="a" style="left:479px;top:491px;width:88px;height:21px;background:#e6e6e6;border:1px solid #dcdcdc"></div>
<div class="a" style="left:545px;top:491px;width:22px;height:21px;background:#cbcbcb"></div>
<svg style="left:550px;top:499px" width="11" height="7"><path d="M1 1 L5.5 5.5 L10 1" stroke="#111" stroke-width="2" fill="none"/></svg>
<div class="t " style="left:482.5px;top:494.50px;font-size:13px;line-height:13px;color:#111;font-weight:normal;">medium</div>
<div class="a" style="left:571px;top:491px;width:97px;height:21px;background:#fff;border-top:1px solid #d8d8d8;border-left:1px solid #dcdcdc;border-radius:2px 0 0 0"></div>
<div class="t " style="right:816.5px;top:495.00px;font-size:13px;line-height:13px;color:#111;font-weight:normal;letter-spacing:0.3px">1,500.00</div>
<div class="a" style="left:702px;top:491px;width:56px;height:21px;background:#fff;border-top:1px solid #d8d8d8;border-left:1px solid #dcdcdc;border-radius:2px 0 0 0"></div>
<div class="t " style="left:673px;top:495.00px;font-size:13px;line-height:13px;color:#8c8c8c;font-weight:normal;letter-spacing:0.2px">Hrs.</div>
<div class="t " style="left:59.5px;top:517.60px;font-size:13px;line-height:13px;color:#262640;font-weight:bold;letter-spacing:0.95px">3.3.2</div>
<div class="a" style="left:84.5px;top:532.6px;width:9px;height:1px;border-top:1px dotted #9a9a9a"></div>
<div class="t " style="left:98px;top:517.60px;font-size:13px;line-height:13px;color:#262640;font-weight:normal;letter-spacing:0.46px">Task III-2</div>
<div class="a" style="left:388px;top:515px;width:88px;height:21px;background:#e6e6e6;border:1px solid #dcdcdc"></div>
<div class="a" style="left:454px;top:515px;width:22px;height:21px;background:#cbcbcb"></div>
<svg style="left:459px;top:523px" width="11" height="7"><path d="M1 1 L5.5 5.5 L10 1" stroke="#111" stroke-width="2" fill="none"/></svg>
<div class="t " style="left:391.5px;top:518.50px;font-size:13px;line-height:13px;color:#111;font-weight:normal;">planned</div>
<div class="a" style="left:479px;top:515px;width:88px;height:21px;background:#e6e6e6;border:1px solid #dcdcdc"></div>
<div class="a" style="left:545px;top:515px;width:22px;height:21px;background:#cbcbcb"></div>
<svg style="left:550px;top:523px" width="11" height="7"><path d="M1 1 L5.5 5.5 L10 1" stroke="#111" stroke-width="2" fill="none"/></svg>
<div class="t " style="left:482.5px;top:518.50px;font-size:13px;line-height:13px;color:#111;font-weight:normal;">medium</div>
<div class="a" style="left:571px;top:515px;width:97px;height:21px;background:#fff;border-top:1px solid #d8d8d8;border-left:1px solid #dcdcdc;border-radius:2px 0 0 0"></div>
<div class="t " style="right:816.5px;top:519.00px;font-size:13px;line-height:13px;color:#111;font-weight:normal;letter-spacing:0.3px">2,000.00</div>
<div class="a" style="left:702px;top:515px;width:56px;height:21px;background:#fff;border-top:1px solid #d8d8d8;border-left:1px solid #dcdcdc;border-radius:2px 0 0 0"></div>
<div class="t " style="left:673px;top:519.00px;font-size:13px;line-height:13px;color:#8c8c8c;font-weight:normal;letter-spacing:0.2px">Hrs.</div>
<div class="a" style="left:24px;top:544px;width:9px;height:9px;border:1px solid #cfcfcf;background:#fff"></div>
<div class="a" style="left:26px;top:548px;width:5px;height:1px;background:#8888aa"></div>
<svg style="left:36px;top:546px" width="10" height="7"><path d="M1 1 L5 5 L9 1" stroke="#333" stroke-width="2" fill="none"/></svg>
<div class="t " style="left:49.5px;top:541.60px;font-size:13px;line-height:13px;color:#999999;font-weight:bold;letter-spacing:0.6px">3.4</div>
<div class="a" style="left:60.5px;top:556.6px;width:9px;height:1px;border-top:1px dotted #9a9a9a"></div>
<div class="t " style="left:75.6px;top:541.60px;font-size:13px;line-height:13px;color:#999999;font-weight:normal;letter-spacing:0.36px">Quarter IV</div>
<div class="a" style="left:388px;top:539px;width:88px;height:21px;background:#e6e6e6;border:1px solid #dcdcdc"></div>
<div class="a" style="left:454px;top:539px;width:22px;height:21px;background:#cbcbcb"></div>
<svg style="left:459px;top:547px" width="11" height="7"><path d="M1 1 L5.5 5.5 L10 1" stroke="#111" stroke-width="2" fill="none"/></svg>
<div class="t " style="left:391.5px;top:542.50px;font-size:13px;line-height:13px;color:#111;font-weight:normal;">planned</div>
<div class="a" style="left:479px;top:539px;width:88px;height:21px;background:#e6e6e6;border:1px solid #dcdcdc"></div>
<div class="a" style="left:545px;top:539px;width:22px;height:21px;background:#cbcbcb"></div>
<svg style="left:550px;top:547px" width="11" height="7"><path d="M1 1 L5.5 5.5 L10 1" stroke="#111" stroke-width="2" fill="none"/></svg>
<div class="t " style="left:482.5px;top:542.50px;font-size:13px;line-height:13px;color:#111;font-weight:normal;">medium</div>
<div class="t " style="right:817px;top:543.00px;font-size:13px;line-height:13px;color:#999;font-weight:normal;letter-spacing:0.3px">3,500.00</div>
<div class="t " style="left:673px;top:543.00px;font-size:13px;line-height:13px;color:#8c8c8c;font-weight:normal;letter-spacing:0.2px">Hrs.</div>
<div class="t " style="left:59.5px;top:565.60px;font-size:13px;line-height:13px;color:#262640;font-weight:bold;letter-spacing:0.95px">3.4.1</div>
<div class="a" style="left:84.5px;top:580.6px;width:9px;height:1px;border-top:1px dotted #9a9a9a"></div>
<div class="t " style="left:98px;top:565.60px;font-size:13px;line-height:13px;color:#262640;font-weight:normal;letter-spacing:0.46px">Task IV-1</div>
<div class="a" style="left:388px;top:563px;width:88px;height:21px;background:#e6e6e6;border:1px solid #dcdcdc"></div>
<div class="a" style="left:454px;top:563px;width:22px;height:21px;background:#cbcbcb"></div>
<svg style="left:459px;top:571px" width="11" height="7"><path d="M1 1 L5.5 5.5 L10 1" stroke="#111" stroke-width="2" fill="none"/></svg>
<div class="t " style="left:391.5px;top:566.50px;font-size:13px;line-height:13px;color:#111;font-weight:normal;">planned</div>
<div class="a" style="left:479px;top:563px;width:88px;height:21px;background:#e6e6e6;border:1px solid #dcdcdc"></div>
<div class="a" style="left:545px;top:563px;width:22px;height:21px;background:#cbcbcb"></div>
<svg style="left:550px;top:571px" width="11" height="7"><path d="M1 1 L5.5 5.5 L10 1" stroke="#111" stroke-width="2" fill="none"/></svg>
<div class="t " style="left:482.5px;top:566.50px;font-size:13px;line-height:13px;color:#111;font-weight:normal;">medium</div>
<div class="a" style="left:571px;top:563px;width:97px;height:21px;background:#fff;border-top:1px solid #d8d8d8;border-left:1px solid #dcdcdc;border-radius:2px 0 0 0"></div>
<div class="t " style="right:816.5px;top:567.00px;font-size:13px;line-height:13px;color:#111;font-weight:normal;letter-spacing:0.3px">1,500.00</div>
<div class="a" style="left:702px;top:563px;width:56px;height:21px;background:#fff;border-top:1px solid #d8d8d8;border-left:1px solid #dcdcdc;border-radius:2px 0 0 0"></div>
<div class="t " style="left:673px;top:567.00px;font-size:13px;line-height:13px;color:#8c8c8c;font-weight:normal;letter-spacing:0.2px">Hrs.</div>
<div class="t " style="left:59.5px;top:589.60px;font-size:13px;line-height:13px;color:#262640;font-weight:bold;letter-spacing:0.95px">3.4.2</div>
<div class="a" style="left:84.5px;top:604.6px;width:9px;height:1px;border-top:1px dotted #9a9a9a"></div>
<div class="t " style="left:98px;top:589.60px;font-size:13px;line-height:13px;color:#262640;font-weight:normal;letter-spacing:0.46px">Task IV-2</div>
<div class="a" style="left:388px;top:587px;width:88px;height:21px;background:#e6e6e6;border:1px solid #dcdcdc"></div>
<div class="a" style="left:454px;top:587px;width:22px;height:21px;background:#cbcbcb"></div>
<svg style="left:459px;top:595px" width="11" height="7"><path d="M1 1 L5.5 5.5 L10 1" stroke="#111" stroke-width="2" fill="none"/></svg>
<div class="t " style="left:391.5px;top:590.50px;font-size:13px;line-height:13px;color:#111;font-weight:normal;">planned</div>
<div class="a" style="left:479px;top:587px;width:88px;height:21px;background:#e6e6e6;border:1px solid #dcdcdc"></div>
<div class="a" style="left:545px;top:587px;width:22px;height:21px;background:#cbcbcb"></div>
<svg style="left:550px;top:595px" width="11" height="7"><path d="M1 1 L5.5 5.5 L10 1" stroke="#111" stroke-width="2" fill="none"/></svg>
<div class="t " style="left:482.5px;top:590.50px;font-size:13px;line-height:13px;color:#111;font-weight:normal;">medium</div>
<div class="a" style="left:571px;top:587px;width:97px;height:21px;background:#fff;border-top:1px solid #d8d8d8;border-left:1px solid #dcdcdc;border-radius:2px 0 0 0"></div>
<div class="t " style="right:816.5px;top:591.00px;font-size:13px;line-height:13px;color:#111;font-weight:normal;letter-spacing:0.3px">2,000.00</div>
<div class="a" style="left:702px;top:587px;width:56px;height:21px;background:#fff;border-top:1px solid #d8d8d8;border-left:1px solid #dcdcdc;border-radius:2px 0 0 0"></div>
<div class="t " style="left:673px;top:591.00px;font-size:13px;line-height:13px;color:#8c8c8c;font-weight:normal;letter-spacing:0.2px">Hrs.</div>
<div class="a" style="left:22px;top:632px;width:738px;height:16px;background:#f0f0f0"></div>
<div class="a" style="left:385px;top:632px;width:1px;height:16px;background:#e0e0e0"></div>
<svg style="left:28px;top:636px" width="5" height="8"><path d="M5 0 V8 L0 4 Z" fill="#a0a0a0"/></svg>
<svg style="left:374px;top:636px" width="5" height="8"><path d="M0 0 V8 L5 4 Z" fill="#a0a0a0"/></svg>
<svg style="left:393px;top:636px" width="5" height="8"><path d="M5 0 V8 L0 4 Z" fill="#a0a0a0"/></svg>
<svg style="left:748px;top:636px" width="5" height="8"><path d="M0 0 V8 L5 4 Z" fill="#505050"/></svg>
<div class="a" style="left:404px;top:634px;width:33px;height:12px;background:#c1c1c1"></div>
<div class="a" style="left:761px;top:208px;width:694px;height:425px;overflow:hidden">
<div class="a" style="left:0px;top:0px;width:140px;height:14px;background:linear-gradient(#fafafa,#e6e6e6)"></div>
<div class="a" style="left:140px;top:0px;width:368px;height:14px;background:linear-gradient(#f2f6f9,#dfe7ed)"></div>
<div class="a" style="left:508px;top:0px;width:186px;height:14px;background:linear-gradient(#fafafa,#e6e6e6)"></div>
<div class="a" style="left:0px;top:14px;width:140px;height:13px;background:linear-gradient(#f6f6f6,#ececec)"></div>
<div class="a" style="left:140px;top:14px;width:368px;height:13px;background:linear-gradient(#f0f4f7,#e6ecf0)"></div>
<div class="a" style="left:508px;top:14px;width:186px;height:13px;background:linear-gradient(#f6f6f6,#ececec)"></div>
<div class="a" style="left:0px;top:27px;width:140px;height:14px;background:#f3f3f3"></div>
<div class="a" style="left:140px;top:27px;width:368px;height:14px;background:#e9eff3"></div>
<div class="a" style="left:508px;top:27px;width:186px;height:14px;background:#f3f3f3"></div>
<div class="a" style="left:20px;top:14px;width:1px;height:13px;background:#e2e2e2"></div>
<div class="a" style="left:140px;top:14px;width:1px;height:13px;background:#e2e2e2"></div>
<div class="a" style="left:264px;top:14px;width:1px;height:13px;background:#e2e2e2"></div>
<div class="a" style="left:388px;top:14px;width:1px;height:13px;background:#e2e2e2"></div>
<div class="a" style="left:508px;top:14px;width:1px;height:13px;background:#e2e2e2"></div>
<div class="a" style="left:632px;top:14px;width:1px;height:13px;background:#e2e2e2"></div>
<div class="a" style="left:-49px;top:27px;width:1px;height:14px;background:rgba(0,0,0,.035)"></div>
<div class="a" style="left:-45px;top:27px;width:1px;height:14px;background:rgba(0,0,0,.035)"></div>
<div class="a" style="left:-41px;top:27px;width:1px;height:14px;background:rgba(0,0,0,.035)"></div>
<div class="a" style="left:-21px;top:27px;width:1px;height:14px;background:rgba(0,0,0,.035)"></div>
<div class="a" style="left:-17px;top:27px;width:1px;height:14px;background:rgba(0,0,0,.035)"></div>
<div class="a" style="left:-13px;top:27px;width:1px;height:14px;background:rgba(0,0,0,.035)"></div>
<div class="a" style="left:7px;top:27px;width:1px;height:14px;background:rgba(0,0,0,.035)"></div>
<div class="a" style="left:11px;top:27px;width:1px;height:14px;background:rgba(0,0,0,.035)"></div>
<div class="a" style="left:15px;top:27px;width:1px;height:14px;background:rgba(0,0,0,.035)"></div>
<div class="a" style="left:35px;top:27px;width:1px;height:14px;background:rgba(0,0,0,.035)"></div>
<div class="a" style="left:39px;top:27px;width:1px;height:14px;background:rgba(0,0,0,.035)"></div>
<div class="a" style="left:43px;top:27px;width:1px;height:14px;background:rgba(0,0,0,.035)"></div>
<div class="a" style="left:63px;top:27px;width:1px;height:14px;background:rgba(0,0,0,.035)"></div>
<div class="a" style="left:67px;top:27px;width:1px;height:14px;background:rgba(0,0,0,.035)"></div>
<div class="a" style="left:71px;top:27px;width:1px;height:14px;background:rgba(0,0,0,.035)"></div>
<div class="a" style="left:91px;top:27px;width:1px;height:14px;background:rgba(0,0,0,.035)"></div>
<div class="a" style="left:95px;top:27px;width:1px;height:14px;background:rgba(0,0,0,.035)"></div>
<div class="a" style="left:99px;top:27px;width:1px;height:14px;background:rgba(0,0,0,.035)"></div>
<div class="a" style="left:119px;top:27px;width:1px;height:14px;background:rgba(0,0,0,.035)"></div>
<div class="a" style="left:123px;top:27px;width:1px;height:14px;background:rgba(0,0,0,.035)"></div>
<div class="a" style="left:127px;top:27px;width:1px;height:14px;background:rgba(0,0,0,.035)"></div>
<div class="a" style="left:147px;top:27px;width:1px;height:14px;background:rgba(0,0,0,.035)"></div>
<div class="a" style="left:151px;top:27px;width:1px;height:14px;background:rgba(0,0,0,.035)"></div>
<div class="a" style="left:155px;top:27px;width:1px;height:14px;background:rgba(0,0,0,.035)"></div>
<div class="a" style="left:175px;top:27px;width:1px;height:14px;background:rgba(0,0,0,.035)"></div>
<div class="a" style="left:179px;top:27px;width:1px;height:14px;background:rgba(0,0,0,.035)"></div>
<div class="a" style="left:183px;top:27px;width:1px;height:14px;background:rgba(0,0,0,.035)"></div>
<div class="a" style="left:203px;top:27px;width:1px;height:14px;background:rgba(0,0,0,.035)"></div>
<div class="a" style="left:207px;top:27px;width:1px;height:14px;background:rgba(0,0,0,.035)"></div>
<div class="a" style="left:211px;top:27px;width:1px;height:14px;background:rgba(0,0,0,.035)"></div>
<div class="a" style="left:231px;top:27px;width:1px;height:14px;background:rgba(0,0,0,.035)"></div>
<div class="a" style="left:235px;top:27px;width:1px;height:14px;background:rgba(0,0,0,.035)"></div>
<div class="a" style="left:239px;top:27px;width:1px;height:14px;background:rgba(0,0,0,.035)"></div>
<div class="a" style="left:259px;top:27px;width:1px;height:14px;background:rgba(0,0,0,.035)"></div>
<div class="a" style="left:263px;top:27px;width:1px;height:14px;background:rgba(0,0,0,.035)"></div>
<div class="a" style="left:267px;top:27px;width:1px;height:14px;background:rgba(0,0,0,.035)"></div>
<div class="a" style="left:287px;top:27px;width:1px;height:14px;background:rgba(0,0,0,.035)"></div>
<div class="a" style="left:291px;top:27px;width:1px;height:14px;background:rgba(0,0,0,.035)"></div>
<div class="a" style="left:295px;top:27px;width:1px;height:14px;background:rgba(0,0,0,.035)"></div>
<div class="a" style="left:315px;top:27px;width:1px;height:14px;background:rgba(0,0,0,.035)"></div>
<div class="a" style="left:319px;top:27px;width:1px;height:14px;background:rgba(0,0,0,.035)"></div>
<div class="a" style="left:323px;top:27px;width:1px;height:14px;background:rgba(0,0,0,.035)"></div>
<div class="a" style="left:343px;top:27px;width:1px;height:14px;background:rgba(0,0,0,.035)"></div>
<div class="a" style="left:347px;top:27px;width:1px;height:14px;background:rgba(0,0,0,.035)"></div>
<div class="a" style="left:351px;top:27px;width:1px;height:14px;background:rgba(0,0,0,.035)"></div>
<div class="a" style="left:371px;top:27px;width:1px;height:14px;background:rgba(0,0,0,.035)"></div>
<div class="a" style="left:375px;top:27px;width:1px;height:14px;background:rgba(0,0,0,.035)"></div>
<div class="a" style="left:379px;top:27px;width:1px;height:14px;background:rgba(0,0,0,.035)"></div>
<div class="a" style="left:399px;top:27px;width:1px;height:14px;background:rgba(0,0,0,.035)"></div>
<div class="a" style="left:403px;top:27px;width:1px;height:14px;background:rgba(0,0,0,.035)"></div>
<div class="a" style="left:407px;top:27px;width:1px;height:14px;background:rgba(0,0,0,.035)"></div>
<div class="a" style="left:427px;top:27px;width:1px;height:14px;background:rgba(0,0,0,.035)"></div>
<div class="a" style="left:431px;top:27px;width:1px;height:14px;background:rgba(0,0,0,.035)"></div>
<div class="a" style="left:435px;top:27px;width:1px;height:14px;background:rgba(0,0,0,.035)"></div>
<div class="a" style="left:455px;top:27px;width:1px;height:14px;background:rgba(0,0,0,.035)"></div>
<div class="a" style="left:459px;top:27px;width:1px;height:14px;background:rgba(0,0,0,.035)"></div>
<div class="a" style="left:463px;top:27px;width:1px;height:14px;background:rgba(0,0,0,.035)"></div>
<div class="a" style="left:483px;top:27px;width:1px;height:14px;background:rgba(0,0,0,.035)"></div>
<div class="a" style="left:487px;top:27px;width:1px;height:14px;background:rgba(0,0,0,.035)"></div>
<div class="a" style="left:491px;top:27px;width:1px;height:14px;background:rgba(0,0,0,.035)"></div>
<div class="a" style="left:511px;top:27px;width:1px;height:14px;background:rgba(0,0,0,.035)"></div>
<div class="a" style="left:515px;top:27px;width:1px;height:14px;background:rgba(0,0,0,.035)"></div>
<div class="a" style="left:519px;top:27px;width:1px;height:14px;background:rgba(0,0,0,.035)"></div>
<div class="a" style="left:539px;top:27px;width:1px;height:14px;background:rgba(0,0,0,.035)"></div>
<div class="a" style="left:543px;top:27px;width:1px;height:14px;background:rgba(0,0,0,.035)"></div>
<div class="a" style="left:547px;top:27px;width:1px;height:14px;background:rgba(0,0,0,.035)"></div>
<div class="a" style="left:567px;top:27px;width:1px;height:14px;background:rgba(0,0,0,.035)"></div>
<div class="a" style="left:571px;top:27px;width:1px;height:14px;background:rgba(0,0,0,.035)"></div>
<div class="a" style="left:575px;top:27px;width:1px;height:14px;background:rgba(0,0,0,.035)"></div>
<div class="a" style="left:595px;top:27px;width:1px;height:14px;background:rgba(0,0,0,.035)"></div>
<div class="a" style="left:599px;top:27px;width:1px;height:14px;background:rgba(0,0,0,.035)"></div>
<div class="a" style="left:603px;top:27px;width:1px;height:14px;background:rgba(0,0,0,.035)"></div>
<div class="a" style="left:623px;top:27px;width:1px;height:14px;background:rgba(0,0,0,.035)"></div>
<div class="a" style="left:627px;top:27px;width:1px;height:14px;background:rgba(0,0,0,.035)"></div>
<div class="a" style="left:631px;top:27px;width:1px;height:14px;background:rgba(0,0,0,.035)"></div>
<div class="a" style="left:651px;top:27px;width:1px;height:14px;background:rgba(0,0,0,.035)"></div>
<div class="a" style="left:655px;top:27px;width:1px;height:14px;background:rgba(0,0,0,.035)"></div>
<div class="a" style="left:659px;top:27px;width:1px;height:14px;background:rgba(0,0,0,.035)"></div>
<div class="a" style="left:679px;top:27px;width:1px;height:14px;background:rgba(0,0,0,.035)"></div>
<div class="a" style="left:683px;top:27px;width:1px;height:14px;background:rgba(0,0,0,.035)"></div>
<div class="a" style="left:687px;top:27px;width:1px;height:14px;background:rgba(0,0,0,.035)"></div>
<div class="a" style="left:707px;top:27px;width:1px;height:14px;background:rgba(0,0,0,.035)"></div>
<div class="a" style="left:711px;top:27px;width:1px;height:14px;background:rgba(0,0,0,.035)"></div>
<div class="a" style="left:715px;top:27px;width:1px;height:14px;background:rgba(0,0,0,.035)"></div>
<div class="a" style="left:0px;top:43px;width:694px;height:352px;background:#fffdf0"></div>
<div class="a" style="left:0px;top:395px;width:694px;height:30px;background:#fff"></div>
<div class="a" style="left:0px;top:396px;width:694px;height:5px;background:linear-gradient(#f4f4f7,#fdfdfd)"></div>
<div class="a" style="left:0px;top:65px;width:694px;height:1px;background:#efece2"></div>
<div class="a" style="left:0px;top:89px;width:694px;height:1px;background:#efece2"></div>
<div class="a" style="left:0px;top:113px;width:694px;height:1px;background:#efece2"></div>
<div class="a" style="left:0px;top:137px;width:694px;height:1px;background:#efece2"></div>
<div class="a" style="left:0px;top:161px;width:694px;height:1px;background:#efece2"></div>
<div class="a" style="left:0px;top:185px;width:694px;height:1px;background:#efece2"></div>
<div class="a" style="left:0px;top:209px;width:694px;height:1px;background:#efece2"></div>
<div class="a" style="left:0px;top:233px;width:694px;height:1px;background:#efece2"></div>
<div class="a" style="left:0px;top:257px;width:694px;height:1px;background:#efece2"></div>
<div class="a" style="left:0px;top:281px;width:694px;height:1px;background:#efece2"></div>
<div class="a" style="left:0px;top:305px;width:694px;height:1px;background:#efece2"></div>
<div class="a" style="left:0px;top:329px;width:694px;height:1px;background:#efece2"></div>
<div class="a" style="left:0px;top:353px;width:694px;height:1px;background:#efece2"></div>
<div class="a" style="left:0px;top:377px;width:694px;height:1px;background:#efece2"></div>
<div class="a" style="left:0px;top:395px;width:694px;height:1px;background:#ebe9d4"></div>
<div class="a" style="left:0px;top:401px;width:694px;height:1px;background:#efefef"></div>
<div class="a" style="left:-48px;top:43px;width:7px;height:352px;background:rgba(120,110,60,.025)"></div>
<div class="a" style="left:-49px;top:43px;width:1px;height:353px;background:#efede2"></div>
<div class="a" style="left:-49px;top:396px;width:1px;height:29px;background:rgba(0,0,0,.06)"></div>
<div class="a" style="left:-45px;top:43px;width:1px;height:353px;background:#efede2"></div>
<div class="a" style="left:-45px;top:396px;width:1px;height:29px;background:rgba(0,0,0,.06)"></div>
<div class="a" style="left:-41px;top:43px;width:1px;height:353px;background:#efede2"></div>
<div class="a" style="left:-41px;top:396px;width:1px;height:29px;background:rgba(0,0,0,.06)"></div>
<div class="a" style="left:-20px;top:43px;width:7px;height:352px;background:rgba(120,110,60,.025)"></div>
<div class="a" style="left:-21px;top:43px;width:1px;height:353px;background:#efede2"></div>
<div class="a" style="left:-21px;top:396px;width:1px;height:29px;background:rgba(0,0,0,.06)"></div>
<div class="a" style="left:-17px;top:43px;width:1px;height:353px;background:#efede2"></div>
<div class="a" style="left:-17px;top:396px;width:1px;height:29px;background:rgba(0,0,0,.06)"></div>
<div class="a" style="left:-13px;top:43px;width:1px;height:353px;background:#efede2"></div>
<div class="a" style="left:-13px;top:396px;width:1px;height:29px;background:rgba(0,0,0,.06)"></div>
<div class="a" style="left:8px;top:43px;width:7px;height:352px;background:rgba(120,110,60,.025)"></div>
<div class="a" style="left:7px;top:43px;width:1px;height:353px;background:#efede2"></div>
<div class="a" style="left:7px;top:396px;width:1px;height:29px;background:rgba(0,0,0,.06)"></div>
<div class="a" style="left:11px;top:43px;width:1px;height:353px;background:#efede2"></div>
<div class="a" style="left:11px;top:396px;width:1px;height:29px;background:rgba(0,0,0,.06)"></div>
<div class="a" style="left:15px;top:43px;width:1px;height:353px;background:#efede2"></div>
<div class="a" style="left:15px;top:396px;width:1px;height:29px;background:rgba(0,0,0,.06)"></div>
<div class="a" style="left:36px;top:43px;width:7px;height:352px;background:rgba(120,110,60,.025)"></div>
<div class="a" style="left:35px;top:43px;width:1px;height:353px;background:#efede2"></div>
<div class="a" style="left:35px;top:396px;width:1px;height:29px;background:rgba(0,0,0,.06)"></div>
<div class="a" style="left:39px;top:43px;width:1px;height:353px;background:#efede2"></div>
<div class="a" style="left:39px;top:396px;width:1px;height:29px;background:rgba(0,0,0,.06)"></div>
<div class="a" style="left:43px;top:43px;width:1px;height:353px;background:#efede2"></div>
<div class="a" style="left:43px;top:396px;width:1px;height:29px;background:rgba(0,0,0,.06)"></div>
<div class="a" style="left:64px;top:43px;width:7px;height:352px;background:rgba(120,110,60,.025)"></div>
<div class="a" style="left:63px;top:43px;width:1px;height:353px;background:#efede2"></div>
<div class="a" style="left:63px;top:396px;width:1px;height:29px;background:rgba(0,0,0,.06)"></div>
<div class="a" style="left:67px;top:43px;width:1px;height:353px;background:#efede2"></div>
<div class="a" style="left:67px;top:396px;width:1px;height:29px;background:rgba(0,0,0,.06)"></div>
<div class="a" style="left:71px;top:43px;width:1px;height:353px;background:#efede2"></div>
<div class="a" style="left:71px;top:396px;width:1px;height:29px;background:rgba(0,0,0,.06)"></div>
<div class="a" style="left:92px;top:43px;width:7px;height:352px;background:rgba(120,110,60,.025)"></div>
<div class="a" style="left:91px;top:43px;width:1px;height:353px;background:#efede2"></div>
<div class="a" style="left:91px;top:396px;width:1px;height:29px;background:rgba(0,0,0,.06)"></div>
<div class="a" style="left:95px;top:43px;width:1px;height:353px;background:#efede2"></div>
<div class="a" style="left:95px;top:396px;width:1px;height:29px;background:rgba(0,0,0,.06)"></div>
<div class="a" style="left:99px;top:43px;width:1px;height:353px;background:#efede2"></div>
<div class="a" style="left:99px;top:396px;width:1px;height:29px;background:rgba(0,0,0,.06)"></div>
<div class="a" style="left:120px;top:43px;width:7px;height:352px;background:rgba(120,110,60,.025)"></div>
<div class="a" style="left:119px;top:43px;width:1px;height:353px;background:#efede2"></div>
<div class="a" style="left:119px;top:396px;width:1px;height:29px;background:rgba(0,0,0,.06)"></div>
<div class="a" style="left:123px;top:43px;width:1px;height:353px;background:#efede2"></div>
<div class="a" style="left:123px;top:396px;width:1px;height:29px;background:rgba(0,0,0,.06)"></div>
<div class="a" style="left:127px;top:43px;width:1px;height:353px;background:#efede2"></div>
<div class="a" style="left:127px;top:396px;width:1px;height:29px;background:rgba(0,0,0,.06)"></div>
<div class="a" style="left:148px;top:43px;width:7px;height:352px;background:rgba(120,110,60,.025)"></div>
<div class="a" style="left:147px;top:43px;width:1px;height:353px;background:#efede2"></div>
<div class="a" style="left:147px;top:396px;width:1px;height:29px;background:rgba(0,0,0,.06)"></div>
<div class="a" style="left:151px;top:43px;width:1px;height:353px;background:#efede2"></div>
<div class="a" style="left:151px;top:396px;width:1px;height:29px;background:rgba(0,0,0,.06)"></div>
<div class="a" style="left:155px;top:43px;width:1px;height:353px;background:#efede2"></div>
<div class="a" style="left:155px;top:396px;width:1px;height:29px;background:rgba(0,0,0,.06)"></div>
<div class="a" style="left:176px;top:43px;width:7px;height:352px;background:rgba(120,110,60,.025)"></div>
<div class="a" style="left:175px;top:43px;width:1px;height:353px;background:#efede2"></div>
<div class="a" style="left:175px;top:396px;width:1px;height:29px;background:rgba(0,0,0,.06)"></div>
<div class="a" style="left:179px;top:43px;width:1px;height:353px;background:#efede2"></div>
<div class="a" style="left:179px;top:396px;width:1px;height:29px;background:rgba(0,0,0,.06)"></div>
<div class="a" style="left:183px;top:43px;width:1px;height:353px;background:#efede2"></div>
<div class="a" style="left:183px;top:396px;width:1px;height:29px;background:rgba(0,0,0,.06)"></div>
<div class="a" style="left:204px;top:43px;width:7px;height:352px;background:rgba(120,110,60,.025)"></div>
<div class="a" style="left:203px;top:43px;width:1px;height:353px;background:#efede2"></div>
<div class="a" style="left:203px;top:396px;width:1px;height:29px;background:rgba(0,0,0,.06)"></div>
<div class="a" style="left:207px;top:43px;width:1px;height:353px;background:#efede2"></div>
<div class="a" style="left:207px;top:396px;width:1px;height:29px;background:rgba(0,0,0,.06)"></div>
<div class="a" style="left:211px;top:43px;width:1px;height:353px;background:#efede2"></div>
<div class="a" style="left:211px;top:396px;width:1px;height:29px;background:rgba(0,0,0,.06)"></div>
<div class="a" style="left:232px;top:43px;width:7px;height:352px;background:rgba(120,110,60,.025)"></div>
<div class="a" style="left:231px;top:43px;width:1px;height:353px;background:#efede2"></div>
<div class="a" style="left:231px;top:396px;width:1px;height:29px;background:rgba(0,0,0,.06)"></div>
<div class="a" style="left:235px;top:43px;width:1px;height:353px;background:#efede2"></div>
<div class="a" style="left:235px;top:396px;width:1px;height:29px;background:rgba(0,0,0,.06)"></div>
<div class="a" style="left:239px;top:43px;width:1px;height:353px;background:#efede2"></div>
<div class="a" style="left:239px;top:396px;width:1px;height:29px;background:rgba(0,0,0,.06)"></div>
<div class="a" style="left:260px;top:43px;width:7px;height:352px;background:rgba(120,110,60,.025)"></div>
<div class="a" style="left:259px;top:43px;width:1px;height:353px;background:#efede2"></div>
<div class="a" style="left:259px;top:396px;width:1px;height:29px;background:rgba(0,0,0,.06)"></div>
<div class="a" style="left:263px;top:43px;width:1px;height:353px;background:#efede2"></div>
<div class="a" style="left:263px;top:396px;width:1px;height:29px;background:rgba(0,0,0,.06)"></div>
<div class="a" style="left:267px;top:43px;width:1px;height:353px;background:#efede2"></div>
<div class="a" style="left:267px;top:396px;width:1px;height:29px;background:rgba(0,0,0,.06)"></div>
<div class="a" style="left:288px;top:43px;width:7px;height:352px;background:rgba(120,110,60,.025)"></div>
<div class="a" style="left:287px;top:43px;width:1px;height:353px;background:#efede2"></div>
<div class="a" style="left:287px;top:396px;width:1px;height:29px;background:rgba(0,0,0,.06)"></div>
<div class="a" style="left:291px;top:43px;width:1px;height:353px;background:#efede2"></div>
<div class="a" style="left:291px;top:396px;width:1px;height:29px;background:rgba(0,0,0,.06)"></div>
<div class="a" style="left:295px;top:43px;width:1px;height:353px;background:#efede2"></div>
<div class="a" style="left:295px;top:396px;width:1px;height:29px;background:rgba(0,0,0,.06)"></div>
<div class="a" style="left:316px;top:43px;width:7px;height:352px;background:rgba(120,110,60,.025)"></div>
<div class="a" style="left:315px;top:43px;width:1px;height:353px;background:#efede2"></div>
<div class="a" style="left:315px;top:396px;width:1px;height:29px;background:rgba(0,0,0,.06)"></div>
<div class="a" style="left:319px;top:43px;width:1px;height:353px;background:#efede2"></div>
<div class="a" style="left:319px;top:396px;width:1px;height:29px;background:rgba(0,0,0,.06)"></div>
<div class="a" style="left:323px;top:43px;width:1px;height:353px;background:#efede2"></div>
<div class="a" style="left:323px;top:396px;width:1px;height:29px;background:rgba(0,0,0,.06)"></div>
<div class="a" style="left:344px;top:43px;width:7px;height:352px;background:rgba(120,110,60,.025)"></div>
<div class="a" style="left:343px;top:43px;width:1px;height:353px;background:#efede2"></div>
<div class="a" style="left:343px;top:396px;width:1px;height:29px;background:rgba(0,0,0,.06)"></div>
<div class="a" style="left:347px;top:43px;width:1px;height:353px;background:#efede2"></div>
<div class="a" style="left:347px;top:396px;width:1px;height:29px;background:rgba(0,0,0,.06)"></div>
<div class="a" style="left:351px;top:43px;width:1px;height:353px;background:#efede2"></div>
<div class="a" style="left:351px;top:396px;width:1px;height:29px;background:rgba(0,0,0,.06)"></div>
<div class="a" style="left:372px;top:43px;width:7px;height:352px;background:rgba(120,110,60,.025)"></div>
<div class="a" style="left:371px;top:43px;width:1px;height:353px;background:#efede2"></div>
<div class="a" style="left:371px;top:396px;width:1px;height:29px;background:rgba(0,0,0,.06)"></div>
<div class="a" style="left:375px;top:43px;width:1px;height:353px;background:#efede2"></div>
<div class="a" style="left:375px;top:396px;width:1px;height:29px;background:rgba(0,0,0,.06)"></div>
<div class="a" style="left:379px;top:43px;width:1px;height:353px;background:#efede2"></div>
<div class="a" style="left:379px;top:396px;width:1px;height:29px;background:rgba(0,0,0,.06)"></div>
<div class="a" style="left:400px;top:43px;width:7px;height:352px;background:rgba(120,110,60,.025)"></div>
<div class="a" style="left:399px;top:43px;width:1px;height:353px;background:#efede2"></div>
<div class="a" style="left:399px;top:396px;width:1px;height:29px;background:rgba(0,0,0,.06)"></div>
<div class="a" style="left:403px;top:43px;width:1px;height:353px;background:#efede2"></div>
<div class="a" style="left:403px;top:396px;width:1px;height:29px;background:rgba(0,0,0,.06)"></div>
<div class="a" style="left:407px;top:43px;width:1px;height:353px;background:#efede2"></div>
<div class="a" style="left:407px;top:396px;width:1px;height:29px;background:rgba(0,0,0,.06)"></div>
<div class="a" style="left:428px;top:43px;width:7px;height:352px;background:rgba(120,110,60,.025)"></div>
<div class="a" style="left:427px;top:43px;width:1px;height:353px;background:#efede2"></div>
<div class="a" style="left:427px;top:396px;width:1px;height:29px;background:rgba(0,0,0,.06)"></div>
<div class="a" style="left:431px;top:43px;width:1px;height:353px;background:#efede2"></div>
<div class="a" style="left:431px;top:396px;width:1px;height:29px;background:rgba(0,0,0,.06)"></div>
<div class="a" style="left:435px;top:43px;width:1px;height:353px;background:#efede2"></div>
<div class="a" style="left:435px;top:396px;width:1px;height:29px;background:rgba(0,0,0,.06)"></div>
<div class="a" style="left:456px;top:43px;width:7px;height:352px;background:rgba(120,110,60,.025)"></div>
<div class="a" style="left:455px;top:43px;width:1px;height:353px;background:#efede2"></div>
<div class="a" style="left:455px;top:396px;width:1px;height:29px;background:rgba(0,0,0,.06)"></div>
<div class="a" style="left:459px;top:43px;width:1px;height:353px;background:#efede2"></div>
<div class="a" style="left:459px;top:396px;width:1px;height:29px;background:rgba(0,0,0,.06)"></div>
<div class="a" style="left:463px;top:43px;width:1px;height:353px;background:#efede2"></div>
<div class="a" style="left:463px;top:396px;width:1px;height:29px;background:rgba(0,0,0,.06)"></div>
<div class="a" style="left:484px;top:43px;width:7px;height:352px;background:rgba(120,110,60,.025)"></div>
<div class="a" style="left:483px;top:43px;width:1px;height:353px;background:#efede2"></div>
<div class="a" style="left:483px;top:396px;width:1px;height:29px;background:rgba(0,0,0,.06)"></div>
<div class="a" style="left:487px;top:43px;width:1px;height:353px;background:#efede2"></div>
<div class="a" style="left:487px;top:396px;width:1px;height:29px;background:rgba(0,0,0,.06)"></div>
<div class="a" style="left:491px;top:43px;width:1px;height:353px;background:#efede2"></div>
<div class="a" style="left:491px;top:396px;width:1px;height:29px;background:rgba(0,0,0,.06)"></div>
<div class="a" style="left:512px;top:43px;width:7px;height:352px;background:rgba(120,110,60,.025)"></div>
<div class="a" style="left:511px;top:43px;width:1px;height:353px;background:#efede2"></div>
<div class="a" style="left:511px;top:396px;width:1px;height:29px;background:rgba(0,0,0,.06)"></div>
<div class="a" style="left:515px;top:43px;width:1px;height:353px;background:#efede2"></div>
<div class="a" style="left:515px;top:396px;width:1px;height:29px;background:rgba(0,0,0,.06)"></div>
<div class="a" style="left:519px;top:43px;width:1px;height:353px;background:#efede2"></div>
<div class="a" style="left:519px;top:396px;width:1px;height:29px;background:rgba(0,0,0,.06)"></div>
<div class="a" style="left:540px;top:43px;width:7px;height:352px;background:rgba(120,110,60,.025)"></div>
<div class="a" style="left:539px;top:43px;width:1px;height:353px;background:#efede2"></div>
<div class="a" style="left:539px;top:396px;width:1px;height:29px;background:rgba(0,0,0,.06)"></div>
<div class="a" style="left:543px;top:43px;width:1px;height:353px;background:#efede2"></div>
<div class="a" style="left:543px;top:396px;width:1px;height:29px;background:rgba(0,0,0,.06)"></div>
<div class="a" style="left:547px;top:43px;width:1px;height:353px;background:#efede2"></div>
<div class="a" style="left:547px;top:396px;width:1px;height:29px;background:rgba(0,0,0,.06)"></div>
<div class="a" style="left:568px;top:43px;width:7px;height:352px;background:rgba(120,110,60,.025)"></div>
<div class="a" style="left:567px;top:43px;width:1px;height:353px;background:#efede2"></div>
<div class="a" style="left:567px;top:396px;width:1px;height:29px;background:rgba(0,0,0,.06)"></div>
<div class="a" style="left:571px;top:43px;width:1px;height:353px;background:#efede2"></div>
<div class="a" style="left:571px;top:396px;width:1px;height:29px;background:rgba(0,0,0,.06)"></div>
<div class="a" style="left:575px;top:43px;width:1px;height:353px;background:#efede2"></div>
<div class="a" style="left:575px;top:396px;width:1px;height:29px;background:rgba(0,0,0,.06)"></div>
<div class="a" style="left:596px;top:43px;width:7px;height:352px;background:rgba(120,110,60,.025)"></div>
<div class="a" style="left:595px;top:43px;width:1px;height:353px;background:#efede2"></div>
<div class="a" style="left:595px;top:396px;width:1px;height:29px;background:rgba(0,0,0,.06)"></div>
<div class="a" style="left:599px;top:43px;width:1px;height:353px;background:#efede2"></div>
<div class="a" style="left:599px;top:396px;width:1px;height:29px;background:rgba(0,0,0,.06)"></div>
<div class="a" style="left:603px;top:43px;width:1px;height:353px;background:#efede2"></div>
<div class="a" style="left:603px;top:396px;width:1px;height:29px;background:rgba(0,0,0,.06)"></div>
<div class="a" style="left:624px;top:43px;width:7px;height:352px;background:rgba(120,110,60,.025)"></div>
<div class="a" style="left:623px;top:43px;width:1px;height:353px;background:#efede2"></div>
<div class="a" style="left:623px;top:396px;width:1px;height:29px;background:rgba(0,0,0,.06)"></div>
<div class="a" style="left:627px;top:43px;width:1px;height:353px;background:#efede2"></div>
<div class="a" style="left:627px;top:396px;width:1px;height:29px;background:rgba(0,0,0,.06)"></div>
<div class="a" style="left:631px;top:43px;width:1px;height:353px;background:#efede2"></div>
<div class="a" style="left:631px;top:396px;width:1px;height:29px;background:rgba(0,0,0,.06)"></div>
<div class="a" style="left:652px;top:43px;width:7px;height:352px;background:rgba(120,110,60,.025)"></div>
<div class="a" style="left:651px;top:43px;width:1px;height:353px;background:#efede2"></div>
<div class="a" style="left:651px;top:396px;width:1px;height:29px;background:rgba(0,0,0,.06)"></div>
<div class="a" style="left:655px;top:43px;width:1px;height:353px;background:#efede2"></div>
<div class="a" style="left:655px;top:396px;width:1px;height:29px;background:rgba(0,0,0,.06)"></div>
<div class="a" style="left:659px;top:43px;width:1px;height:353px;background:#efede2"></div>
<div class="a" style="left:659px;top:396px;width:1px;height:29px;background:rgba(0,0,0,.06)"></div>
<div class="a" style="left:680px;top:43px;width:7px;height:352px;background:rgba(120,110,60,.025)"></div>
<div class="a" style="left:679px;top:43px;width:1px;height:353px;background:#efede2"></div>
<div class="a" style="left:679px;top:396px;width:1px;height:29px;background:rgba(0,0,0,.06)"></div>
<div class="a" style="left:683px;top:43px;width:1px;height:353px;background:#efede2"></div>
<div class="a" style="left:683px;top:396px;width:1px;height:29px;background:rgba(0,0,0,.06)"></div>
<div class="a" style="left:687px;top:43px;width:1px;height:353px;background:#efede2"></div>
<div class="a" style="left:687px;top:396px;width:1px;height:29px;background:rgba(0,0,0,.06)"></div>
<div class="a" style="left:708px;top:43px;width:7px;height:352px;background:rgba(120,110,60,.025)"></div>
<div class="a" style="left:707px;top:43px;width:1px;height:353px;background:#efede2"></div>
<div class="a" style="left:707px;top:396px;width:1px;height:29px;background:rgba(0,0,0,.06)"></div>
<div class="a" style="left:711px;top:43px;width:1px;height:353px;background:#efede2"></div>
<div class="a" style="left:711px;top:396px;width:1px;height:29px;background:rgba(0,0,0,.06)"></div>
<div class="a" style="left:715px;top:43px;width:1px;height:353px;background:#efede2"></div>
<div class="a" style="left:715px;top:396px;width:1px;height:29px;background:rgba(0,0,0,.06)"></div>
<div class="a" style="left:19px;top:43px;width:1px;height:382px;background:#d4d0f0"></div>
<div class="a" style="left:139px;top:43px;width:1px;height:382px;background:#d4d0f0"></div>
<div class="a" style="left:263px;top:43px;width:1px;height:382px;background:#d4d0f0"></div>
<div class="a" style="left:387px;top:43px;width:1px;height:382px;background:#d4d0f0"></div>
<div class="a" style="left:507px;top:43px;width:1px;height:382px;background:#d4d0f0"></div>
<div class="a" style="left:631px;top:43px;width:1px;height:382px;background:#d4d0f0"></div>
<div class="a" style="left:45px;top:43px;width:3px;height:382px;background:#fff8c0"></div>
<div class="t" style="left:296px;top:-0.43px;font-size:13.5px;line-height:13.5px;color:#555566;font-weight:bold;font-family:"Liberation Serif",serif;letter-spacing:1.1px">Q3 2021</div>
<div class="t" style="left:663px;top:-0.43px;font-size:13.5px;line-height:13.5px;color:#555566;font-weight:bold;font-family:"Liberation Serif",serif;letter-spacing:1.1px">Q4 2021</div>
<div class="t" style="left:51.5px;top:13.89px;font-size:11px;line-height:11px;color:#9c9c9c;font-weight:normal;letter-spacing:0.6px">June 2021</div>
<div class="t" style="left:175.29999999999995px;top:13.89px;font-size:11px;line-height:11px;color:#9c9c9c;font-weight:normal;letter-spacing:0.6px">July 2021</div>
<div class="t" style="left:291.29999999999995px;top:13.89px;font-size:11px;line-height:11px;color:#9c9c9c;font-weight:normal;letter-spacing:0.6px">August 2021</div>
<div class="t" style="left:402.5999999999999px;top:13.89px;font-size:11px;line-height:11px;color:#9c9c9c;font-weight:normal;letter-spacing:0.6px">September 2021</div>
<div class="t" style="left:533px;top:13.89px;font-size:11px;line-height:11px;color:#9c9c9c;font-weight:normal;letter-spacing:0.6px">October 2021</div>
<div class="t" style="left:648.4000000000001px;top:13.89px;font-size:11px;line-height:11px;color:#9c9c9c;font-weight:normal;letter-spacing:0.6px">November 2021</div>
<div class="t" style="left:-40px;top:28.73px;font-size:10px;line-height:10px;color:#505050;font-weight:normal;letter-spacing:0.55px">C20</div>
<div class="t" style="left:-12px;top:28.73px;font-size:10px;line-height:10px;color:#505050;font-weight:normal;letter-spacing:0.55px">C21</div>
<div class="t" style="left:16px;top:28.73px;font-size:10px;line-height:10px;color:#505050;font-weight:normal;letter-spacing:0.55px">C22</div>
<div class="t" style="left:44px;top:28.73px;font-size:10px;line-height:10px;color:#505050;font-weight:normal;letter-spacing:0.55px">C23</div>
<div class="t" style="left:72px;top:28.73px;font-size:10px;line-height:10px;color:#505050;font-weight:normal;letter-spacing:0.55px">C24</div>
<div class="t" style="left:100px;top:28.73px;font-size:10px;line-height:10px;color:#505050;font-weight:normal;letter-spacing:0.55px">C25</div>
<div class="t" style="left:128px;top:28.73px;font-size:10px;line-height:10px;color:#505050;font-weight:normal;letter-spacing:0.55px">C26</div>
<div class="t" style="left:156px;top:28.73px;font-size:10px;line-height:10px;color:#505050;font-weight:normal;letter-spacing:0.55px">C27</div>
<div class="t" style="left:184px;top:28.73px;font-size:10px;line-height:10px;color:#505050;font-weight:normal;letter-spacing:0.55px">C28</div>
<div class="t" style="left:212px;top:28.73px;font-size:10px;line-height:10px;color:#505050;font-weight:normal;letter-spacing:0.55px">C29</div>
<div class="t" style="left:240px;top:28.73px;font-size:10px;line-height:10px;color:#505050;font-weight:normal;letter-spacing:0.55px">C30</div>
<div class="t" style="left:268px;top:28.73px;font-size:10px;line-height:10px;color:#505050;font-weight:normal;letter-spacing:0.55px">C31</div>
<div class="t" style="left:296px;top:28.73px;font-size:10px;line-height:10px;color:#505050;font-weight:normal;letter-spacing:0.55px">C32</div>
<div class="t" style="left:324px;top:28.73px;font-size:10px;line-height:10px;color:#505050;font-weight:normal;letter-spacing:0.55px">C33</div>
<div class="t" style="left:352px;top:28.73px;font-size:10px;line-height:10px;color:#505050;font-weight:normal;letter-spacing:0.55px">C34</div>
<div class="t" style="left:380px;top:28.73px;font-size:10px;line-height:10px;color:#505050;font-weight:normal;letter-spacing:0.55px">C35</div>
<div class="t" style="left:408px;top:28.73px;font-size:10px;line-height:10px;color:#505050;font-weight:normal;letter-spacing:0.55px">C36</div>
<div class="t" style="left:436px;top:28.73px;font-size:10px;line-height:10px;color:#505050;font-weight:normal;letter-spacing:0.55px">C37</div>
<div class="t" style="left:464px;top:28.73px;font-size:10px;line-height:10px;color:#505050;font-weight:normal;letter-spacing:0.55px">C38</div>
<div class="t" style="left:492px;top:28.73px;font-size:10px;line-height:10px;color:#505050;font-weight:normal;letter-spacing:0.55px">C39</div>
<div class="t" style="left:520px;top:28.73px;font-size:10px;line-height:10px;color:#505050;font-weight:normal;letter-spacing:0.55px">C40</div>
<div class="t" style="left:548px;top:28.73px;font-size:10px;line-height:10px;color:#505050;font-weight:normal;letter-spacing:0.55px">C41</div>
<div class="t" style="left:576px;top:28.73px;font-size:10px;line-height:10px;color:#505050;font-weight:normal;letter-spacing:0.55px">C42</div>
<div class="t" style="left:604px;top:28.73px;font-size:10px;line-height:10px;color:#505050;font-weight:normal;letter-spacing:0.55px">C43</div>
<div class="t" style="left:632px;top:28.73px;font-size:10px;line-height:10px;color:#505050;font-weight:normal;letter-spacing:0.55px">C44</div>
<div class="t" style="left:660px;top:28.73px;font-size:10px;line-height:10px;color:#505050;font-weight:normal;letter-spacing:0.55px">C45</div>
<div class="t" style="left:688px;top:28.73px;font-size:10px;line-height:10px;color:#505050;font-weight:normal;letter-spacing:0.55px">C46</div>
<div class="t" style="left:716px;top:28.73px;font-size:10px;line-height:10px;color:#505050;font-weight:normal;letter-spacing:0.55px">C47</div>
<div class="a" style="left:140px;top:0px;width:1px;height:43px;background:#1a6ea8"></div>
<div class="a" style="left:507px;top:0px;width:1px;height:43px;background:#1a6ea8"></div>
<div class="a" style="left:0px;top:41px;width:694px;height:1px;background:#f0f0f0"></div>
<div class="a" style="left:0px;top:42px;width:694px;height:2px;background:#6c6862"></div>
<div class="a" style="left:1px;top:1px;width:14px;height:13px;border-radius:3px;background:linear-gradient(#e4e4e4,#c8c8c8);border:1px solid #c0c0c0"></div>
<div class="t" style="left:3.5px;top:3.38px;font-size:9px;line-height:9px;color:#9a9a9a;font-weight:normal;">|&lt;</div>
<div class="a" style="left:680px;top:1px;width:14px;height:14px;border-radius:3px;background:linear-gradient(#e4e4e4,#c8c8c8);border:1px solid #c0c0c0"></div>
<div class="t" style="left:682.5px;top:3.88px;font-size:9px;line-height:9px;color:#9a9a9a;font-weight:normal;">&gt;|</div>
<div class="a" style="left:0px;top:44px;width:694px;height:14px;background:linear-gradient(#e8e6e0,#b0aeaa 6px,#888480 14px)"></div>
<div class="a" style="left:0px;top:57px;width:694px;height:7px;background:linear-gradient(rgba(120,110,80,.12),rgba(0,0,0,0))"></div>
<div class="a" style="left:-49px;top:44px;width:1px;height:14px;background:rgba(0,0,0,.06)"></div>
<div class="a" style="left:-45px;top:44px;width:1px;height:14px;background:rgba(0,0,0,.06)"></div>
<div class="a" style="left:-41px;top:44px;width:1px;height:14px;background:rgba(0,0,0,.06)"></div>
<div class="a" style="left:-21px;top:44px;width:1px;height:14px;background:rgba(0,0,0,.06)"></div>
<div class="a" style="left:-17px;top:44px;width:1px;height:14px;background:rgba(0,0,0,.06)"></div>
<div class="a" style="left:-13px;top:44px;width:1px;height:14px;background:rgba(0,0,0,.06)"></div>
<div class="a" style="left:7px;top:44px;width:1px;height:14px;background:rgba(0,0,0,.06)"></div>
<div class="a" style="left:11px;top:44px;width:1px;height:14px;background:rgba(0,0,0,.06)"></div>
<div class="a" style="left:15px;top:44px;width:1px;height:14px;background:rgba(0,0,0,.06)"></div>
<div class="a" style="left:35px;top:44px;width:1px;height:14px;background:rgba(0,0,0,.06)"></div>
<div class="a" style="left:39px;top:44px;width:1px;height:14px;background:rgba(0,0,0,.06)"></div>
<div class="a" style="left:43px;top:44px;width:1px;height:14px;background:rgba(0,0,0,.06)"></div>
<div class="a" style="left:63px;top:44px;width:1px;height:14px;background:rgba(0,0,0,.06)"></div>
<div class="a" style="left:67px;top:44px;width:1px;height:14px;background:rgba(0,0,0,.06)"></div>
<div class="a" style="left:71px;top:44px;width:1px;height:14px;background:rgba(0,0,0,.06)"></div>
<div class="a" style="left:91px;top:44px;width:1px;height:14px;background:rgba(0,0,0,.06)"></div>
<div class="a" style="left:95px;top:44px;width:1px;height:14px;background:rgba(0,0,0,.06)"></div>
<div class="a" style="left:99px;top:44px;width:1px;height:14px;background:rgba(0,0,0,.06)"></div>
<div class="a" style="left:119px;top:44px;width:1px;height:14px;background:rgba(0,0,0,.06)"></div>
<div class="a" style="left:123px;top:44px;width:1px;height:14px;background:rgba(0,0,0,.06)"></div>
<div class="a" style="left:127px;top:44px;width:1px;height:14px;background:rgba(0,0,0,.06)"></div>
<div class="a" style="left:147px;top:44px;width:1px;height:14px;background:rgba(0,0,0,.06)"></div>
<div class="a" style="left:151px;top:44px;width:1px;height:14px;background:rgba(0,0,0,.06)"></div>
<div class="a" style="left:155px;top:44px;width:1px;height:14px;background:rgba(0,0,0,.06)"></div>
<div class="a" style="left:175px;top:44px;width:1px;height:14px;background:rgba(0,0,0,.06)"></div>
<div class="a" style="left:179px;top:44px;width:1px;height:14px;background:rgba(0,0,0,.06)"></div>
<div class="a" style="left:183px;top:44px;width:1px;height:14px;background:rgba(0,0,0,.06)"></div>
<div class="a" style="left:203px;top:44px;width:1px;height:14px;background:rgba(0,0,0,.06)"></div>
<div class="a" style="left:207px;top:44px;width:1px;height:14px;background:rgba(0,0,0,.06)"></div>
<div class="a" style="left:211px;top:44px;width:1px;height:14px;background:rgba(0,0,0,.06)"></div>
<div class="a" style="left:231px;top:44px;width:1px;height:14px;background:rgba(0,0,0,.06)"></div>
<div class="a" style="left:235px;top:44px;width:1px;height:14px;background:rgba(0,0,0,.06)"></div>
<div class="a" style="left:239px;top:44px;width:1px;height:14px;background:rgba(0,0,0,.06)"></div>
<div class="a" style="left:259px;top:44px;width:1px;height:14px;background:rgba(0,0,0,.06)"></div>
<div class="a" style="left:263px;top:44px;width:1px;height:14px;background:rgba(0,0,0,.06)"></div>
<div class="a" style="left:267px;top:44px;width:1px;height:14px;background:rgba(0,0,0,.06)"></div>
<div class="a" style="left:287px;top:44px;width:1px;height:14px;background:rgba(0,0,0,.06)"></div>
<div class="a" style="left:291px;top:44px;width:1px;height:14px;background:rgba(0,0,0,.06)"></div>
<div class="a" style="left:295px;top:44px;width:1px;height:14px;background:rgba(0,0,0,.06)"></div>
<div class="a" style="left:315px;top:44px;width:1px;height:14px;background:rgba(0,0,0,.06)"></div>
<div class="a" style="left:319px;top:44px;width:1px;height:14px;background:rgba(0,0,0,.06)"></div>
<div class="a" style="left:323px;top:44px;width:1px;height:14px;background:rgba(0,0,0,.06)"></div>
<div class="a" style="left:343px;top:44px;width:1px;height:14px;background:rgba(0,0,0,.06)"></div>
<div class="a" style="left:347px;top:44px;width:1px;height:14px;background:rgba(0,0,0,.06)"></div>
<div class="a" style="left:351px;top:44px;width:1px;height:14px;background:rgba(0,0,0,.06)"></div>
<div class="a" style="left:371px;top:44px;width:1px;height:14px;background:rgba(0,0,0,.06)"></div>
<div class="a" style="left:375px;top:44px;width:1px;height:14px;background:rgba(0,0,0,.06)"></div>
<div class="a" style="left:379px;top:44px;width:1px;height:14px;background:rgba(0,0,0,.06)"></div>
<div class="a" style="left:399px;top:44px;width:1px;height:14px;background:rgba(0,0,0,.06)"></div>
<div class="a" style="left:403px;top:44px;width:1px;height:14px;background:rgba(0,0,0,.06)"></div>
<div class="a" style="left:407px;top:44px;width:1px;height:14px;background:rgba(0,0,0,.06)"></div>
<div class="a" style="left:427px;top:44px;width:1px;height:14px;background:rgba(0,0,0,.06)"></div>
<div class="a" style="left:431px;top:44px;width:1px;height:14px;background:rgba(0,0,0,.06)"></div>
<div class="a" style="left:435px;top:44px;width:1px;height:14px;background:rgba(0,0,0,.06)"></div>
<div class="a" style="left:455px;top:44px;width:1px;height:14px;background:rgba(0,0,0,.06)"></div>
<div class="a" style="left:459px;top:44px;width:1px;height:14px;background:rgba(0,0,0,.06)"></div>
<div class="a" style="left:463px;top:44px;width:1px;height:14px;background:rgba(0,0,0,.06)"></div>
<div class="a" style="left:483px;top:44px;width:1px;height:14px;background:rgba(0,0,0,.06)"></div>
<div class="a" style="left:487px;top:44px;width:1px;height:14px;background:rgba(0,0,0,.06)"></div>
<div class="a" style="left:491px;top:44px;width:1px;height:14px;background:rgba(0,0,0,.06)"></div>
<div class="a" style="left:511px;top:44px;width:1px;height:14px;background:rgba(0,0,0,.06)"></div>
<div class="a" style="left:515px;top:44px;width:1px;height:14px;background:rgba(0,0,0,.06)"></div>
<div class="a" style="left:519px;top:44px;width:1px;height:14px;background:rgba(0,0,0,.06)"></div>
<div class="a" style="left:539px;top:44px;width:1px;height:14px;background:rgba(0,0,0,.06)"></div>
<div class="a" style="left:543px;top:44px;width:1px;height:14px;background:rgba(0,0,0,.06)"></div>
<div class="a" style="left:547px;top:44px;width:1px;height:14px;background:rgba(0,0,0,.06)"></div>
<div class="a" style="left:567px;top:44px;width:1px;height:14px;background:rgba(0,0,0,.06)"></div>
<div class="a" style="left:571px;top:44px;width:1px;height:14px;background:rgba(0,0,0,.06)"></div>
<div class="a" style="left:575px;top:44px;width:1px;height:14px;background:rgba(0,0,0,.06)"></div>
<div class="a" style="left:595px;top:44px;width:1px;height:14px;background:rgba(0,0,0,.06)"></div>
<div class="a" style="left:599px;top:44px;width:1px;height:14px;background:rgba(0,0,0,.06)"></div>
<div class="a" style="left:603px;top:44px;width:1px;height:14px;background:rgba(0,0,0,.06)"></div>
<div class="a" style="left:623px;top:44px;width:1px;height:14px;background:rgba(0,0,0,.06)"></div>
<div class="a" style="left:627px;top:44px;width:1px;height:14px;background:rgba(0,0,0,.06)"></div>
<div class="a" style="left:631px;top:44px;width:1px;height:14px;background:rgba(0,0,0,.06)"></div>
<div class="a" style="left:651px;top:44px;width:1px;height:14px;background:rgba(0,0,0,.06)"></div>
<div class="a" style="left:655px;top:44px;width:1px;height:14px;background:rgba(0,0,0,.06)"></div>
<div class="a" style="left:659px;top:44px;width:1px;height:14px;background:rgba(0,0,0,.06)"></div>
<div class="a" style="left:679px;top:44px;width:1px;height:14px;background:rgba(0,0,0,.06)"></div>
<div class="a" style="left:683px;top:44px;width:1px;height:14px;background:rgba(0,0,0,.06)"></div>
<div class="a" style="left:687px;top:44px;width:1px;height:14px;background:rgba(0,0,0,.06)"></div>
<div class="a" style="left:707px;top:44px;width:1px;height:14px;background:rgba(0,0,0,.06)"></div>
<div class="a" style="left:711px;top:44px;width:1px;height:14px;background:rgba(0,0,0,.06)"></div>
<div class="a" style="left:715px;top:44px;width:1px;height:14px;background:rgba(0,0,0,.06)"></div>
<div class="a" style="left:19px;top:44px;width:1px;height:14px;background:rgba(100,100,240,.2)"></div>
<div class="a" style="left:139px;top:44px;width:1px;height:14px;background:rgba(100,100,240,.2)"></div>
<div class="a" style="left:263px;top:44px;width:1px;height:14px;background:rgba(100,100,240,.2)"></div>
<div class="a" style="left:387px;top:44px;width:1px;height:14px;background:rgba(100,100,240,.2)"></div>
<div class="a" style="left:507px;top:44px;width:1px;height:14px;background:rgba(100,100,240,.2)"></div>
<div class="a" style="left:631px;top:44px;width:1px;height:14px;background:rgba(100,100,240,.2)"></div>
<div class="a" style="left:44px;top:42px;width:1px;height:383px;background:#8a8a10"></div>
<div class="a" style="left:-21px;top:138px;width:161px;height:17px;background:linear-gradient(#5e5e5e 0px,#5e5e5e 2px,#dcdcd8 3px,#b4b2ae 9px,#8a8884 16px);box-shadow:0 2px 3px rgba(0,0,0,.15)"></div>
<div class="a" style="left:-21px;top:138px;width:2px;height:19px;background:#666"></div>
<div class="a" style="left:138px;top:138px;width:2px;height:19px;background:#666"></div>
<div class="a" style="left:-21px;top:162px;width:160px;height:16px;background:linear-gradient(#f2f2e8 0px,#ecebd8 6px,#dedb80 7px,#d8d470 13px,#c8c020 15px,#c8c020 16px);box-shadow:0 1px 2px rgba(0,0,0,.25)"></div>
<div class="a" style="left:136px;top:162px;width:3px;height:16px;background:#7a7a60"></div>
<div class="a" style="left:139px;top:163px;width:47px;height:1px;border-top:1px dotted #9a9a9a"></div>
<div class="t" style="left:186px;top:162px;height:15px;padding:0 3px 0 3px;background:#fff;border-radius:3px;box-shadow:0 1px 1px rgba(0,0,0,.28);font-size:11.6px;line-height:15px;color:#3c3c50;letter-spacing:0.2px"><b style="color:#505058">3</b> Lancaster, Meyer, Moore</div>
<svg style="left:133.5px;top:186px" width="11" height="19"><defs><linearGradient id="md394" x1="0" y1="0" x2="1" y2="0"><stop offset="0" stop-color="#ffc030"/><stop offset="0.55" stop-color="#f08a00"/><stop offset="1" stop-color="#d83a00"/></linearGradient></defs><path d="M5.5 0 L11 9.5 L5.5 19 L0 9.5 Z" fill="url(#md394)"/></svg>
<div class="t" style="left:149px;top:189.50px;font-size:13px;line-height:13px;color:#9a9070;font-weight:normal;font-style:italic;letter-spacing:0.35px">06/30/2021</div>
<div class="t" style="left:228.70000000000005px;top:189.50px;font-size:13px;line-height:13px;color:#8c8460;font-weight:normal;letter-spacing:0.4px">Compl. Development 2021-II</div>
<div class="t" style="left:409.5px;top:192.88px;font-size:9px;line-height:9px;color:#9a9a9a;font-weight:normal;">(E)</div>
<div class="a" style="left:-21px;top:210px;width:160px;height:16px;background:linear-gradient(#e8eef2 0px,#c8dce8 6px,#7eb0cc 7px,#6aa0c0 13px,#2070a0 15px,#2070a0 16px);box-shadow:0 1px 2px rgba(0,0,0,.25)"></div>
<div class="a" style="left:136px;top:210px;width:3px;height:16px;background:#4a6070"></div>
<div class="a" style="left:139px;top:211px;width:47px;height:1px;border-top:1px dotted #9a9a9a"></div>
<div class="t" style="left:186px;top:210px;height:15px;padding:0 3px 0 3px;background:#fff;border-radius:3px;box-shadow:0 1px 1px rgba(0,0,0,.28);font-size:11.6px;line-height:15px;color:#3c3c50;letter-spacing:0.2px"><b style="color:#505058">4</b> Maddox, Mallard-Baker, Tanner, Tyler</div>
<svg style="left:133.5px;top:234px" width="11" height="19"><defs><linearGradient id="md442" x1="0" y1="0" x2="1" y2="0"><stop offset="0" stop-color="#ffc030"/><stop offset="0.55" stop-color="#f08a00"/><stop offset="1" stop-color="#d83a00"/></linearGradient></defs><path d="M5.5 0 L11 9.5 L5.5 19 L0 9.5 Z" fill="url(#md442)"/></svg>
<div class="t" style="left:149px;top:237.50px;font-size:13px;line-height:13px;color:#9a9070;font-weight:normal;font-style:italic;letter-spacing:0.35px">06/30/2021</div>
<div class="t" style="left:228.70000000000005px;top:237.50px;font-size:13px;line-height:13px;color:#8c8460;font-weight:normal;letter-spacing:0.4px">Compl. Manufacturing 2021-II</div>
<div class="t" style="left:415.5px;top:240.88px;font-size:9px;line-height:9px;color:#9a9a9a;font-weight:normal;">(E)</div>
<div class="a" style="left:140px;top:258px;width:368px;height:17px;background:linear-gradient(#5e5e5e 0px,#5e5e5e 2px,#dcdcd8 3px,#b4b2ae 9px,#8a8884 16px);box-shadow:0 2px 3px rgba(0,0,0,.15)"></div>
<div class="a" style="left:140px;top:258px;width:2px;height:19px;background:#666"></div>
<div class="a" style="left:506px;top:258px;width:2px;height:19px;background:#666"></div>
<svg style="left:148px;top:263px" width="10" height="7"><path d="M1 1 L5 5 L9 1" stroke="#333" stroke-width="1.8" fill="none"/></svg>
<div class="t" style="left:161px;top:260.00px;font-size:13px;line-height:13px;color:#555;font-weight:normal;letter-spacing:0.3px">Quarter III</div>
<div class="a" style="left:140px;top:282px;width:367px;height:16px;background:linear-gradient(#f2f2e8 0px,#ecebd8 6px,#dedb80 7px,#d8d470 13px,#c8c020 15px,#c8c020 16px);border-radius:5px 0 0 5px;box-shadow:0 1px 2px rgba(0,0,0,.25)"></div>
<div class="t" style="left:148px;top:283.50px;font-size:13px;line-height:13px;color:#1c1c1c;font-weight:normal;letter-spacing:0.6px">Task III-1</div>
<div class="a" style="left:507px;top:283px;width:47px;height:1px;border-top:1px dotted #9a9a9a"></div>
<div class="t" style="left:554px;top:282px;height:15px;padding:0 3px 0 3px;background:#fff;border-radius:3px;box-shadow:0 1px 1px rgba(0,0,0,.28);font-size:11.6px;line-height:15px;color:#3c3c50;letter-spacing:0.2px"><b style="color:#505058">3</b> Lancaster, Meyer, Moore</div>
<div class="a" style="left:135px;top:302px;width:377px;height:25px;border:2px solid #80b0c0;border-radius:5px"></div>
<div class="a" style="left:140px;top:306px;width:367px;height:16px;background:linear-gradient(#e8eef2 0px,#c8dce8 6px,#7eb0cc 7px,#6aa0c0 13px,#2070a0 15px,#2070a0 16px);border-radius:5px 0 0 5px;box-shadow:0 1px 2px rgba(0,0,0,.25)"></div>
<div class="t" style="left:148px;top:307.50px;font-size:13px;line-height:13px;color:#1c1c1c;font-weight:normal;letter-spacing:0.6px">Task III-2</div>
<div class="a" style="left:507px;top:307px;width:47px;height:1px;border-top:1px dotted #9a9a9a"></div>
<div class="t" style="left:554px;top:306px;height:15px;padding:0 3px 0 3px;background:#fff;border-radius:3px;box-shadow:0 1px 1px rgba(0,0,0,.28);font-size:11.6px;line-height:15px;color:#3c3c50;letter-spacing:0.2px"><b style="color:#505058">4</b> Maddox, Mallard-Baker, Tanner, Tyler</div>
<div class="a" style="left:508px;top:330px;width:211px;height:17px;background:linear-gradient(#5e5e5e 0px,#5e5e5e 2px,#dcdcd8 3px,#b4b2ae 9px,#8a8884 16px);box-shadow:0 2px 3px rgba(0,0,0,.15)"></div>
<div class="a" style="left:508px;top:330px;width:2px;height:19px;background:#666"></div>
<div class="a" style="left:717px;top:330px;width:2px;height:19px;background:#666"></div>
<svg style="left:516px;top:335px" width="10" height="7"><path d="M1 1 L5 5 L9 1" stroke="#333" stroke-width="1.8" fill="none"/></svg>
<div class="t" style="left:529px;top:332.00px;font-size:13px;line-height:13px;color:#555;font-weight:normal;letter-spacing:0.3px">Quarter IV</div>
<div class="a" style="left:508px;top:354px;width:211px;height:16px;background:linear-gradient(#f2f2e8 0px,#ecebd8 6px,#dedb80 7px,#d8d470 13px,#c8c020 15px,#c8c020 16px);border-radius:5px 0 0 5px;box-shadow:0 2px 0 #f01828,0 4px 5px rgba(240,40,60,.55)"></div>
<div class="t" style="left:516px;top:355.50px;font-size:13px;line-height:13px;color:#1c1c1c;font-weight:normal;letter-spacing:0.6px">Task IV-1</div>
<div class="a" style="left:508px;top:378px;width:211px;height:16px;background:linear-gradient(#e8eef2 0px,#c8dce8 6px,#7eb0cc 7px,#6aa0c0 13px,#2070a0 15px,#2070a0 16px);border-radius:5px 0 0 5px;box-shadow:0 2px 0 #f01828,0 4px 5px rgba(240,40,60,.55)"></div>
<div class="t" style="left:516px;top:379.50px;font-size:13px;line-height:13px;color:#1c1c1c;font-weight:normal;letter-spacing:0.6px">Task IV-2</div>
<div class="a" style="left:11px;top:410px;width:24px;height:15px;background:#f0f0f0;border-radius:4px 4px 0 0;border:1px solid #ddd"></div>
<svg style="left:18px;top:414px" width="10" height="6"><path d="M0 6 L5 0 L10 6 Z" fill="#333"/></svg>
</div>
<div class="a" style="left:1455px;top:208px;width:16px;height:41px;background:linear-gradient(90deg,#f4f4f4,#e4e4e4)"></div>
<div class="a" style="left:1455px;top:249px;width:16px;height:384px;background:#f0f0f0"></div>
<div class="a" style="left:1457px;top:266px;width:12px;height:128px;background:#c1c1c1"></div>
<svg style="left:1459px;top:255px" width="8" height="5"><path d="M0 5 L4 0 L8 5 Z" fill="#a0a0a0"/></svg>
<svg style="left:1459px;top:620px" width="8" height="5"><path d="M0 0 L4 5 L8 0 Z" fill="#505050"/></svg>
<div class="a" style="left:761px;top:632px;width:710px;height:16px;background:#f0f0f0"></div>
<div class="a" style="left:843px;top:635px;width:78px;height:11px;background:#c1c1c1"></div>
<svg style="left:766px;top:636px" width="5" height="8"><path d="M5 0 V8 L0 4 Z" fill="#505050"/></svg>
<svg style="left:1444px;top:636px" width="5" height="8"><path d="M0 0 V8 L5 4 Z" fill="#505050"/></svg>
<div class="a" style="left:1455px;top:632px;width:16px;height:16px;background:#e4e4e4"></div>
<div class="a" style="left:22px;top:648px;width:1449px;height:3px;background:#f2f2f2"></div>
<div class="a" style="left:22px;top:651px;width:1449px;height:21px;background:linear-gradient(#dedede,#d2d2d2)"></div>
<div class="a" style="left:24px;top:653px;width:14px;height:14px;border-radius:3px;background:linear-gradient(#e6e6e6,#c8c8c8);border:1px solid #bdbdbd"></div>
<div class="t " style="left:25.5px;top:656.30px;font-size:8.5px;line-height:8.5px;color:#9a9aa8;font-weight:normal;letter-spacing:-0.5px">&lt;&lt;</div>
<div class="t " style="left:304.3px;top:653.60px;font-size:13px;line-height:13px;color:#585868;font-weight:bold;transform:scaleX(1.0544);transform-origin:0 0;">Resource Planning</div>
<div class="t " style="left:690.5px;top:657.60px;font-size:13px;line-height:13px;color:#9a9a9a;font-weight:normal;letter-spacing:0.4px">Sum</div>
<div class="a" style="left:726px;top:656px;width:13px;height:13px;border:1.5px solid #111;border-radius:2px;background:#fff"></div>
<div class="a" style="left:758px;top:652px;width:1px;height:18px;border-left:1px dotted #a8a8a8"></div>
<div class="t " style="left:928.1px;top:654.00px;font-size:13px;line-height:13px;color:#585868;font-weight:bold;transform:scaleX(1.0620);transform-origin:0 0;">Resource Workloads</div>
<div class="t " style="left:1247px;top:657.60px;font-size:13px;line-height:13px;color:#9c9c9c;font-weight:normal;letter-spacing:0.4px">Act.</div>
<div class="a" style="left:1280px;top:656px;width:13px;height:13px;border:1.5px solid #111;border-radius:2px;background:#fff"></div>
<svg style="left:1280px;top:656px" width="13" height="13"><path d="M2.5 6.8 L5.2 9.8 L10.6 3" stroke="#111" stroke-width="1.4" fill="none"/></svg>
<div class="t " style="left:1304px;top:657.60px;font-size:13px;line-height:13px;color:#9c9c9c;font-weight:normal;letter-spacing:0.4px">Plan.</div>
<div class="a" style="left:1341px;top:656px;width:13px;height:13px;border:1.5px solid #111;border-radius:2px;background:#fff"></div>
<svg style="left:1341px;top:656px" width="13" height="13"><path d="M2.5 6.8 L5.2 9.8 L10.6 3" stroke="#111" stroke-width="1.4" fill="none"/></svg>
<div class="t " style="left:1367px;top:657.60px;font-size:13px;line-height:13px;color:#9c9c9c;font-weight:normal;letter-spacing:0.4px">Pile</div>
<div class="a" style="left:1395px;top:656px;width:13px;height:13px;border:1.5px solid #111;border-radius:2px;background:#fff"></div>
<svg style="left:1395px;top:656px" width="13" height="13"><path d="M2.5 6.8 L5.2 9.8 L10.6 3" stroke="#111" stroke-width="1.4" fill="none"/></svg>
<svg style="left:1416px;top:658.5px" width="14" height="14"><circle cx="7" cy="7" r="5.8" fill="#fff" stroke="#111" stroke-width="1.3"/><circle cx="7" cy="7" r="3" fill="#111"/></svg>
<svg style="left:1436px;top:658.5px" width="14" height="14"><circle cx="7" cy="7" r="5.8" fill="#fff" stroke="#111" stroke-width="1.3"/></svg>
<div class="a" style="left:22px;top:672px;width:738px;height:14px;background:linear-gradient(#fcfcfc,#e8e8e8)"></div>
<div class="a" style="left:22px;top:685px;width:738px;height:1px;background:#d8d8d8"></div>
<div class="t " style="left:168.7px;top:672.70px;font-size:13px;line-height:13px;color:#585868;font-weight:bold;transform:scaleX(1.0271);transform-origin:0 0;">Resources</div>
<div class="t " style="left:403.5px;top:672.70px;font-size:13px;line-height:13px;color:#8a8a8a;font-weight:bold;transform:scaleX(1.0770);transform-origin:0 0;">Percentage</div>
<div class="t " style="left:512.3px;top:672.70px;font-size:13px;line-height:13px;color:#8a8a8a;font-weight:bold;transform:scaleX(1.0628);transform-origin:0 0;">Purchase Price</div>
<div class="t " style="left:662px;top:672.70px;font-size:13px;line-height:13px;color:#8a8a8a;font-weight:bold;transform:scaleX(1.0598);transform-origin:0 0;">Sell Price</div>
<div class="a" style="left:22px;top:686px;width:738px;height:128px;background:#fff"></div>
<div class="a" style="left:22px;top:710px;width:738px;height:1px;background:#ebebeb"></div>
<div class="a" style="left:22px;top:734px;width:738px;height:1px;background:#ebebeb"></div>
<div class="a" style="left:22px;top:758px;width:738px;height:1px;background:#ebebeb"></div>
<div class="a" style="left:22px;top:782px;width:738px;height:1px;background:#ebebeb"></div>
<div class="a" style="left:22px;top:806px;width:738px;height:1px;background:#ebebeb"></div>
<div class="a" style="left:385px;top:672px;width:1px;height:142px;background:#d4d4d4"></div>
<div class="a" style="left:386px;top:672px;width:1px;height:142px;background:#f8f8f8"></div>
<div class="a" style="left:496px;top:672px;width:1px;height:142px;background:#e0e0e0"></div>
<div class="a" style="left:627px;top:672px;width:1px;height:142px;background:#e0e0e0"></div>
<div class="a" style="left:756px;top:672px;width:4px;height:142px;background:linear-gradient(90deg,rgba(0,0,0,0),rgba(0,0,0,.07))"></div>
<div class="a" style="left:25px;top:692px;width:13px;height:13px;border:1.5px solid #111;border-radius:2px;background:#fff"></div>
<svg style="left:25px;top:692px" width="13" height="13"><path d="M2.5 6.8 L5.2 9.8 L10.6 3" stroke="#111" stroke-width="1.4" fill="none"/></svg>
<div class="t " style="left:45.3px;top:692.30px;font-size:13px;line-height:13px;color:#17a07e;font-weight:normal;letter-spacing:0.514px;">Maddox, Eric - EM1 [Int.] (01/01/2020)</div>
<div class="a" style="left:363px;top:690px;width:17px;height:17px;border-radius:4px;background:linear-gradient(#a0a0a0,#848484);border:1px solid #7a7a7a"></div>
<svg style="left:367.5px;top:694.5px" width="8" height="8"><path d="M1 1 L7 7 M7 1 L1 7" stroke="#fff" stroke-width="2"/></svg>
<div class="a" style="left:388px;top:688px;width:91px;height:21px;background:#fff;border-top:1px solid #d8d8d8;border-left:1px solid #dcdcdc;border-radius:2px 0 0 0"></div>
<div class="t " style="right:1005.4px;top:693.00px;font-size:13px;line-height:13px;color:#111;font-weight:normal;letter-spacing:0.3px">25.00</div>
<div class="t " style="left:484px;top:693.00px;font-size:13px;line-height:13px;color:#8c8c8c;font-weight:normal;">%</div>
<div class="a" style="left:499px;top:688px;width:85px;height:21px;background:#fff;border-top:1px solid #d8d8d8;border-left:1px solid #dcdcdc;border-radius:2px 0 0 0"></div>
<div class="t " style="right:901px;top:693.00px;font-size:13px;line-height:13px;color:#111;font-weight:normal;letter-spacing:0.3px">20.00</div>
<div class="t " style="left:587.8px;top:693.00px;font-size:13px;line-height:13px;color:#8c8c8c;font-weight:normal;letter-spacing:0.2px">€/Hrs.</div>
<div class="a" style="left:630px;top:688px;width:85px;height:21px;background:#fff;border-top:1px solid #d8d8d8;border-left:1px solid #dcdcdc;border-radius:2px 0 0 0"></div>
<div class="t " style="right:769.5px;top:693.00px;font-size:13px;line-height:13px;color:#111;font-weight:normal;letter-spacing:0.3px">40.00</div>
<div class="t " style="left:718.7px;top:693.00px;font-size:13px;line-height:13px;color:#8c8c8c;font-weight:normal;letter-spacing:0.2px">€/Hrs.</div>
<div class="a" style="left:25px;top:716px;width:13px;height:13px;border:1.5px solid #111;border-radius:2px;background:#fff"></div>
<svg style="left:25px;top:716px" width="13" height="13"><path d="M2.5 6.8 L5.2 9.8 L10.6 3" stroke="#111" stroke-width="1.4" fill="none"/></svg>
<div class="t " style="left:45.3px;top:716.30px;font-size:13px;line-height:13px;color:#17a07e;font-weight:normal;letter-spacing:0.439px;">Mallard-Baker, Elizabeth - EM2 [Int.] (01/01/2020)</div>
<div class="a" style="left:363px;top:714px;width:17px;height:17px;border-radius:4px;background:linear-gradient(#a0a0a0,#848484);border:1px solid #7a7a7a"></div>
<svg style="left:367.5px;top:718.5px" width="8" height="8"><path d="M1 1 L7 7 M7 1 L1 7" stroke="#fff" stroke-width="2"/></svg>
<div class="a" style="left:388px;top:712px;width:91px;height:21px;background:#fff;border-top:1px solid #d8d8d8;border-left:1px solid #dcdcdc;border-radius:2px 0 0 0"></div>
<div class="t " style="right:1005.4px;top:717.00px;font-size:13px;line-height:13px;color:#111;font-weight:normal;letter-spacing:0.3px">25.00</div>
<div class="t " style="left:484px;top:717.00px;font-size:13px;line-height:13px;color:#8c8c8c;font-weight:normal;">%</div>
<div class="a" style="left:499px;top:712px;width:85px;height:21px;background:#fff;border-top:1px solid #d8d8d8;border-left:1px solid #dcdcdc;border-radius:2px 0 0 0"></div>
<div class="t " style="right:901px;top:717.00px;font-size:13px;line-height:13px;color:#111;font-weight:normal;letter-spacing:0.3px">20.00</div>
<div class="t " style="left:587.8px;top:717.00px;font-size:13px;line-height:13px;color:#8c8c8c;font-weight:normal;letter-spacing:0.2px">€/Hrs.</div>
<div class="a" style="left:630px;top:712px;width:85px;height:21px;background:#fff;border-top:1px solid #d8d8d8;border-left:1px solid #dcdcdc;border-radius:2px 0 0 0"></div>
<div class="t " style="right:769.5px;top:717.00px;font-size:13px;line-height:13px;color:#111;font-weight:normal;letter-spacing:0.3px">40.00</div>
<div class="t " style="left:718.7px;top:717.00px;font-size:13px;line-height:13px;color:#8c8c8c;font-weight:normal;letter-spacing:0.2px">€/Hrs.</div>
<div class="a" style="left:25px;top:740px;width:13px;height:13px;border:1.5px solid #111;border-radius:2px;background:#fff"></div>
<svg style="left:25px;top:740px" width="13" height="13"><path d="M2.5 6.8 L5.2 9.8 L10.6 3" stroke="#111" stroke-width="1.4" fill="none"/></svg>
<div class="t " style="left:45.3px;top:740.30px;font-size:13px;line-height:13px;color:#17a07e;font-weight:normal;letter-spacing:0.459px;">Tanner, Calvin - CT1 [Ext.] (02/01/2020)</div>
<div class="a" style="left:363px;top:738px;width:17px;height:17px;border-radius:4px;background:linear-gradient(#a0a0a0,#848484);border:1px solid #7a7a7a"></div>
<svg style="left:367.5px;top:742.5px" width="8" height="8"><path d="M1 1 L7 7 M7 1 L1 7" stroke="#fff" stroke-width="2"/></svg>
<div class="a" style="left:388px;top:736px;width:91px;height:21px;background:#fff;border-top:1px solid #d8d8d8;border-left:1px solid #dcdcdc;border-radius:2px 0 0 0"></div>
<div class="t " style="right:1005.4px;top:741.00px;font-size:13px;line-height:13px;color:#111;font-weight:normal;letter-spacing:0.3px">25.00</div>
<div class="t " style="left:484px;top:741.00px;font-size:13px;line-height:13px;color:#8c8c8c;font-weight:normal;">%</div>
<div class="a" style="left:499px;top:736px;width:85px;height:21px;background:#fff;border-top:1px solid #d8d8d8;border-left:1px solid #dcdcdc;border-radius:2px 0 0 0"></div>
<div class="t " style="right:901px;top:741.00px;font-size:13px;line-height:13px;color:#111;font-weight:normal;letter-spacing:0.3px">20.00</div>
<div class="t " style="left:587.8px;top:741.00px;font-size:13px;line-height:13px;color:#8c8c8c;font-weight:normal;letter-spacing:0.2px">€/Hrs.</div>
<div class="a" style="left:630px;top:736px;width:85px;height:21px;background:#fff;border-top:1px solid #d8d8d8;border-left:1px solid #dcdcdc;border-radius:2px 0 0 0"></div>
<div class="t " style="right:769.5px;top:741.00px;font-size:13px;line-height:13px;color:#111;font-weight:normal;letter-spacing:0.3px">40.00</div>
<div class="t " style="left:718.7px;top:741.00px;font-size:13px;line-height:13px;color:#8c8c8c;font-weight:normal;letter-spacing:0.2px">€/Hrs.</div>
<div class="a" style="left:25px;top:764px;width:13px;height:13px;border:1.5px solid #111;border-radius:2px;background:#fff"></div>
<svg style="left:25px;top:764px" width="13" height="13"><path d="M2.5 6.8 L5.2 9.8 L10.6 3" stroke="#111" stroke-width="1.4" fill="none"/></svg>
<div class="t " style="left:45.3px;top:764.30px;font-size:13px;line-height:13px;color:#17a07e;font-weight:normal;letter-spacing:0.476px;">Tyler, Cindy - CT2 [Ext.] (01/01/2020)</div>
<div class="a" style="left:363px;top:762px;width:17px;height:17px;border-radius:4px;background:linear-gradient(#a0a0a0,#848484);border:1px solid #7a7a7a"></div>
<svg style="left:367.5px;top:766.5px" width="8" height="8"><path d="M1 1 L7 7 M7 1 L1 7" stroke="#fff" stroke-width="2"/></svg>
<div class="a" style="left:388px;top:760px;width:91px;height:21px;background:#fff;border-top:1px solid #d8d8d8;border-left:1px solid #dcdcdc;border-radius:2px 0 0 0"></div>
<div class="t " style="right:1005.4px;top:765.00px;font-size:13px;line-height:13px;color:#111;font-weight:normal;letter-spacing:0.3px">25.00</div>
<div class="t " style="left:484px;top:765.00px;font-size:13px;line-height:13px;color:#8c8c8c;font-weight:normal;">%</div>
<div class="a" style="left:499px;top:760px;width:85px;height:21px;background:#fff;border-top:1px solid #d8d8d8;border-left:1px solid #dcdcdc;border-radius:2px 0 0 0"></div>
<div class="t " style="right:901px;top:765.00px;font-size:13px;line-height:13px;color:#111;font-weight:normal;letter-spacing:0.3px">20.00</div>
<div class="t " style="left:587.8px;top:765.00px;font-size:13px;line-height:13px;color:#8c8c8c;font-weight:normal;letter-spacing:0.2px">€/Hrs.</div>
<div class="a" style="left:630px;top:760px;width:85px;height:21px;background:#fff;border-top:1px solid #d8d8d8;border-left:1px solid #dcdcdc;border-radius:2px 0 0 0"></div>
<div class="t " style="right:769.5px;top:765.00px;font-size:13px;line-height:13px;color:#111;font-weight:normal;letter-spacing:0.3px">40.00</div>
<div class="t " style="left:718.7px;top:765.00px;font-size:13px;line-height:13px;color:#8c8c8c;font-weight:normal;letter-spacing:0.2px">€/Hrs.</div>
<div class="a" style="left:23px;top:784px;width:21px;height:21px;border-radius:4px;background:linear-gradient(#b4b4b4,#8c8c8c);border:1px solid #777"></div>
<svg style="left:26px;top:786px" width="17" height="17"><rect x="3" y="3" width="7" height="7" rx="2" fill="#fff" stroke="#333" stroke-width="1"/><path d="M1 16 Q1 10 6.5 10 Q12 10 12 16 Z" fill="#333"/><path d="M10 3.5 H16 M13 0.5 V6.5" stroke="#111" stroke-width="2"/></svg>
<div class="a" style="left:22px;top:814px;width:738px;height:17px;background:#f0f0f0"></div>
<div class="a" style="left:385px;top:814px;width:1px;height:17px;background:#e0e0e0"></div>
<svg style="left:28px;top:819px" width="5" height="8"><path d="M5 0 V8 L0 4 Z" fill="#a0a0a0"/></svg>
<svg style="left:374px;top:819px" width="5" height="8"><path d="M0 0 V8 L5 4 Z" fill="#a0a0a0"/></svg>
<svg style="left:393px;top:819px" width="5" height="8"><path d="M5 0 V8 L0 4 Z" fill="#a0a0a0"/></svg>
<svg style="left:748px;top:819px" width="5" height="8"><path d="M0 0 V8 L5 4 Z" fill="#505050"/></svg>
<div class="a" style="left:403px;top:816px;width:115px;height:13px;background:#c1c1c1"></div>
<div class="a" style="left:759px;top:672px;width:696px;height:159px;overflow:hidden">
<div class="a" style="left:0px;top:0px;width:1px;height:159px;background:#c8c8c8"></div>
<div class="a" style="left:1px;top:0px;width:140px;height:14px;background:#f3f3f3"></div>
<div class="a" style="left:141px;top:0px;width:368px;height:14px;background:#e9eff3"></div>
<div class="a" style="left:509px;top:0px;width:187px;height:14px;background:#f3f3f3"></div>
<div class="a" style="left:1px;top:13px;width:695px;height:1px;background:#dcdcdc"></div>
<div class="a" style="left:-48px;top:0px;width:1px;height:13px;background:rgba(0,0,0,.04)"></div>
<div class="a" style="left:-44px;top:0px;width:1px;height:13px;background:rgba(0,0,0,.04)"></div>
<div class="a" style="left:-40px;top:0px;width:1px;height:13px;background:rgba(0,0,0,.04)"></div>
<div class="t" style="left:-39px;top:1.53px;font-size:10px;line-height:10px;color:#505050;letter-spacing:0.55px">C20</div>
<div class="a" style="left:-20px;top:0px;width:1px;height:13px;background:rgba(0,0,0,.04)"></div>
<div class="a" style="left:-16px;top:0px;width:1px;height:13px;background:rgba(0,0,0,.04)"></div>
<div class="a" style="left:-12px;top:0px;width:1px;height:13px;background:rgba(0,0,0,.04)"></div>
<div class="t" style="left:-11px;top:1.53px;font-size:10px;line-height:10px;color:#505050;letter-spacing:0.55px">C21</div>
<div class="a" style="left:8px;top:0px;width:1px;height:13px;background:rgba(0,0,0,.04)"></div>
<div class="a" style="left:12px;top:0px;width:1px;height:13px;background:rgba(0,0,0,.04)"></div>
<div class="a" style="left:16px;top:0px;width:1px;height:13px;background:rgba(0,0,0,.04)"></div>
<div class="t" style="left:17px;top:1.53px;font-size:10px;line-height:10px;color:#505050;letter-spacing:0.55px">C22</div>
<div class="a" style="left:36px;top:0px;width:1px;height:13px;background:rgba(0,0,0,.04)"></div>
<div class="a" style="left:40px;top:0px;width:1px;height:13px;background:rgba(0,0,0,.04)"></div>
<div class="a" style="left:44px;top:0px;width:1px;height:13px;background:rgba(0,0,0,.04)"></div>
<div class="t" style="left:45px;top:1.53px;font-size:10px;line-height:10px;color:#505050;letter-spacing:0.55px">C23</div>
<div class="a" style="left:64px;top:0px;width:1px;height:13px;background:rgba(0,0,0,.04)"></div>
<div class="a" style="left:68px;top:0px;width:1px;height:13px;background:rgba(0,0,0,.04)"></div>
<div class="a" style="left:72px;top:0px;width:1px;height:13px;background:rgba(0,0,0,.04)"></div>
<div class="t" style="left:73px;top:1.53px;font-size:10px;line-height:10px;color:#505050;letter-spacing:0.55px">C24</div>
<div class="a" style="left:92px;top:0px;width:1px;height:13px;background:rgba(0,0,0,.04)"></div>
<div class="a" style="left:96px;top:0px;width:1px;height:13px;background:rgba(0,0,0,.04)"></div>
<div class="a" style="left:100px;top:0px;width:1px;height:13px;background:rgba(0,0,0,.04)"></div>
<div class="t" style="left:101px;top:1.53px;font-size:10px;line-height:10px;color:#505050;letter-spacing:0.55px">C25</div>
<div class="a" style="left:120px;top:0px;width:1px;height:13px;background:rgba(0,0,0,.04)"></div>
<div class="a" style="left:124px;top:0px;width:1px;height:13px;background:rgba(0,0,0,.04)"></div>
<div class="a" style="left:128px;top:0px;width:1px;height:13px;background:rgba(0,0,0,.04)"></div>
<div class="t" style="left:129px;top:1.53px;font-size:10px;line-height:10px;color:#505050;letter-spacing:0.55px">C26</div>
<div class="a" style="left:148px;top:0px;width:1px;height:13px;background:rgba(0,0,0,.04)"></div>
<div class="a" style="left:152px;top:0px;width:1px;height:13px;background:rgba(0,0,0,.04)"></div>
<div class="a" style="left:156px;top:0px;width:1px;height:13px;background:rgba(0,0,0,.04)"></div>
<div class="t" style="left:157px;top:1.53px;font-size:10px;line-height:10px;color:#505050;letter-spacing:0.55px">C27</div>
<div class="a" style="left:176px;top:0px;width:1px;height:13px;background:rgba(0,0,0,.04)"></div>
<div class="a" style="left:180px;top:0px;width:1px;height:13px;background:rgba(0,0,0,.04)"></div>
<div class="a" style="left:184px;top:0px;width:1px;height:13px;background:rgba(0,0,0,.04)"></div>
<div class="t" style="left:185px;top:1.53px;font-size:10px;line-height:10px;color:#505050;letter-spacing:0.55px">C28</div>
<div class="a" style="left:204px;top:0px;width:1px;height:13px;background:rgba(0,0,0,.04)"></div>
<div class="a" style="left:208px;top:0px;width:1px;height:13px;background:rgba(0,0,0,.04)"></div>
<div class="a" style="left:212px;top:0px;width:1px;height:13px;background:rgba(0,0,0,.04)"></div>
<div class="t" style="left:213px;top:1.53px;font-size:10px;line-height:10px;color:#505050;letter-spacing:0.55px">C29</div>
<div class="a" style="left:232px;top:0px;width:1px;height:13px;background:rgba(0,0,0,.04)"></div>
<div class="a" style="left:236px;top:0px;width:1px;height:13px;background:rgba(0,0,0,.04)"></div>
<div class="a" style="left:240px;top:0px;width:1px;height:13px;background:rgba(0,0,0,.04)"></div>
<div class="t" style="left:241px;top:1.53px;font-size:10px;line-height:10px;color:#505050;letter-spacing:0.55px">C30</div>
<div class="a" style="left:260px;top:0px;width:1px;height:13px;background:rgba(0,0,0,.04)"></div>
<div class="a" style="left:264px;top:0px;width:1px;height:13px;background:rgba(0,0,0,.04)"></div>
<div class="a" style="left:268px;top:0px;width:1px;height:13px;background:rgba(0,0,0,.04)"></div>
<div class="t" style="left:269px;top:1.53px;font-size:10px;line-height:10px;color:#505050;letter-spacing:0.55px">C31</div>
<div class="a" style="left:288px;top:0px;width:1px;height:13px;background:rgba(0,0,0,.04)"></div>
<div class="a" style="left:292px;top:0px;width:1px;height:13px;background:rgba(0,0,0,.04)"></div>
<div class="a" style="left:296px;top:0px;width:1px;height:13px;background:rgba(0,0,0,.04)"></div>
<div class="t" style="left:297px;top:1.53px;font-size:10px;line-height:10px;color:#505050;letter-spacing:0.55px">C32</div>
<div class="a" style="left:316px;top:0px;width:1px;height:13px;background:rgba(0,0,0,.04)"></div>
<div class="a" style="left:320px;top:0px;width:1px;height:13px;background:rgba(0,0,0,.04)"></div>
<div class="a" style="left:324px;top:0px;width:1px;height:13px;background:rgba(0,0,0,.04)"></div>
<div class="t" style="left:325px;top:1.53px;font-size:10px;line-height:10px;color:#505050;letter-spacing:0.55px">C33</div>
<div class="a" style="left:344px;top:0px;width:1px;height:13px;background:rgba(0,0,0,.04)"></div>
<div class="a" style="left:348px;top:0px;width:1px;height:13px;background:rgba(0,0,0,.04)"></div>
<div class="a" style="left:352px;top:0px;width:1px;height:13px;background:rgba(0,0,0,.04)"></div>
<div class="t" style="left:353px;top:1.53px;font-size:10px;line-height:10px;color:#505050;letter-spacing:0.55px">C34</div>
<div class="a" style="left:372px;top:0px;width:1px;height:13px;background:rgba(0,0,0,.04)"></div>
<div class="a" style="left:376px;top:0px;width:1px;height:13px;background:rgba(0,0,0,.04)"></div>
<div class="a" style="left:380px;top:0px;width:1px;height:13px;background:rgba(0,0,0,.04)"></div>
<div class="t" style="left:381px;top:1.53px;font-size:10px;line-height:10px;color:#505050;letter-spacing:0.55px">C35</div>
<div class="a" style="left:400px;top:0px;width:1px;height:13px;background:rgba(0,0,0,.04)"></div>
<div class="a" style="left:404px;top:0px;width:1px;height:13px;background:rgba(0,0,0,.04)"></div>
<div class="a" style="left:408px;top:0px;width:1px;height:13px;background:rgba(0,0,0,.04)"></div>
<div class="t" style="left:409px;top:1.53px;font-size:10px;line-height:10px;color:#505050;letter-spacing:0.55px">C36</div>
<div class="a" style="left:428px;top:0px;width:1px;height:13px;background:rgba(0,0,0,.04)"></div>
<div class="a" style="left:432px;top:0px;width:1px;height:13px;background:rgba(0,0,0,.04)"></div>
<div class="a" style="left:436px;top:0px;width:1px;height:13px;background:rgba(0,0,0,.04)"></div>
<div class="t" style="left:437px;top:1.53px;font-size:10px;line-height:10px;color:#505050;letter-spacing:0.55px">C37</div>
<div class="a" style="left:456px;top:0px;width:1px;height:13px;background:rgba(0,0,0,.04)"></div>
<div class="a" style="left:460px;top:0px;width:1px;height:13px;background:rgba(0,0,0,.04)"></div>
<div class="a" style="left:464px;top:0px;width:1px;height:13px;background:rgba(0,0,0,.04)"></div>
<div class="t" style="left:465px;top:1.53px;font-size:10px;line-height:10px;color:#505050;letter-spacing:0.55px">C38</div>
<div class="a" style="left:484px;top:0px;width:1px;height:13px;background:rgba(0,0,0,.04)"></div>
<div class="a" style="left:488px;top:0px;width:1px;height:13px;background:rgba(0,0,0,.04)"></div>
<div class="a" style="left:492px;top:0px;width:1px;height:13px;background:rgba(0,0,0,.04)"></div>
<div class="t" style="left:493px;top:1.53px;font-size:10px;line-height:10px;color:#505050;letter-spacing:0.55px">C39</div>
<div class="a" style="left:512px;top:0px;width:1px;height:13px;background:rgba(0,0,0,.04)"></div>
<div class="a" style="left:516px;top:0px;width:1px;height:13px;background:rgba(0,0,0,.04)"></div>
<div class="a" style="left:520px;top:0px;width:1px;height:13px;background:rgba(0,0,0,.04)"></div>
<div class="t" style="left:521px;top:1.53px;font-size:10px;line-height:10px;color:#505050;letter-spacing:0.55px">C40</div>
<div class="a" style="left:540px;top:0px;width:1px;height:13px;background:rgba(0,0,0,.04)"></div>
<div class="a" style="left:544px;top:0px;width:1px;height:13px;background:rgba(0,0,0,.04)"></div>
<div class="a" style="left:548px;top:0px;width:1px;height:13px;background:rgba(0,0,0,.04)"></div>
<div class="t" style="left:549px;top:1.53px;font-size:10px;line-height:10px;color:#505050;letter-spacing:0.55px">C41</div>
<div class="a" style="left:568px;top:0px;width:1px;height:13px;background:rgba(0,0,0,.04)"></div>
<div class="a" style="left:572px;top:0px;width:1px;height:13px;background:rgba(0,0,0,.04)"></div>
<div class="a" style="left:576px;top:0px;width:1px;height:13px;background:rgba(0,0,0,.04)"></div>
<div class="t" style="left:577px;top:1.53px;font-size:10px;line-height:10px;color:#505050;letter-spacing:0.55px">C42</div>
<div class="a" style="left:596px;top:0px;width:1px;height:13px;background:rgba(0,0,0,.04)"></div>
<div class="a" style="left:600px;top:0px;width:1px;height:13px;background:rgba(0,0,0,.04)"></div>
<div class="a" style="left:604px;top:0px;width:1px;height:13px;background:rgba(0,0,0,.04)"></div>
<div class="t" style="left:605px;top:1.53px;font-size:10px;line-height:10px;color:#505050;letter-spacing:0.55px">C43</div>
<div class="a" style="left:624px;top:0px;width:1px;height:13px;background:rgba(0,0,0,.04)"></div>
<div class="a" style="left:628px;top:0px;width:1px;height:13px;background:rgba(0,0,0,.04)"></div>
<div class="a" style="left:632px;top:0px;width:1px;height:13px;background:rgba(0,0,0,.04)"></div>
<div class="t" style="left:633px;top:1.53px;font-size:10px;line-height:10px;color:#505050;letter-spacing:0.55px">C44</div>
<div class="a" style="left:652px;top:0px;width:1px;height:13px;background:rgba(0,0,0,.04)"></div>
<div class="a" style="left:656px;top:0px;width:1px;height:13px;background:rgba(0,0,0,.04)"></div>
<div class="a" style="left:660px;top:0px;width:1px;height:13px;background:rgba(0,0,0,.04)"></div>
<div class="t" style="left:661px;top:1.53px;font-size:10px;line-height:10px;color:#505050;letter-spacing:0.55px">C45</div>
<div class="a" style="left:680px;top:0px;width:1px;height:13px;background:rgba(0,0,0,.04)"></div>
<div class="a" style="left:684px;top:0px;width:1px;height:13px;background:rgba(0,0,0,.04)"></div>
<div class="a" style="left:688px;top:0px;width:1px;height:13px;background:rgba(0,0,0,.04)"></div>
<div class="t" style="left:689px;top:1.53px;font-size:10px;line-height:10px;color:#505050;letter-spacing:0.55px">C46</div>
<div class="a" style="left:708px;top:0px;width:1px;height:13px;background:rgba(0,0,0,.04)"></div>
<div class="a" style="left:712px;top:0px;width:1px;height:13px;background:rgba(0,0,0,.04)"></div>
<div class="a" style="left:716px;top:0px;width:1px;height:13px;background:rgba(0,0,0,.04)"></div>
<div class="t" style="left:717px;top:1.53px;font-size:10px;line-height:10px;color:#505050;letter-spacing:0.55px">C47</div>
<div class="a" style="left:141px;top:0px;width:1px;height:14px;background:#1a6ea8"></div>
<div class="a" style="left:508px;top:0px;width:1px;height:14px;background:#1a6ea8"></div>
<div class="a" style="left:1px;top:14px;width:508px;height:128px;background:#fff"></div>
<div class="a" style="left:1px;top:14px;width:44px;height:128px;background:#f0f0f0"></div>
<div class="a" style="left:509px;top:14px;width:187px;height:128px;background:#fde4e6"></div>
<div class="a" style="left:1px;top:38px;width:508px;height:1px;background:#efefef"></div>
<div class="a" style="left:509px;top:38px;width:187px;height:1px;background:#f6d2d8"></div>
<div class="a" style="left:1px;top:62px;width:508px;height:1px;background:#efefef"></div>
<div class="a" style="left:509px;top:62px;width:187px;height:1px;background:#f6d2d8"></div>
<div class="a" style="left:1px;top:86px;width:508px;height:1px;background:#efefef"></div>
<div class="a" style="left:509px;top:86px;width:187px;height:1px;background:#f6d2d8"></div>
<div class="a" style="left:1px;top:110px;width:508px;height:1px;background:#efefef"></div>
<div class="a" style="left:509px;top:110px;width:187px;height:1px;background:#f6d2d8"></div>
<div class="a" style="left:1px;top:134px;width:508px;height:1px;background:#efefef"></div>
<div class="a" style="left:509px;top:134px;width:187px;height:1px;background:#f6d2d8"></div>
<div class="a" style="left:-47px;top:14px;width:7px;height:128px;background:rgba(0,0,0,.025)"></div>
<div class="a" style="left:-48px;top:14px;width:1px;height:128px;background:rgba(0,0,0,.065)"></div>
<div class="a" style="left:-44px;top:14px;width:1px;height:128px;background:rgba(0,0,0,.065)"></div>
<div class="a" style="left:-40px;top:14px;width:1px;height:128px;background:rgba(0,0,0,.065)"></div>
<div class="a" style="left:-19px;top:14px;width:7px;height:128px;background:rgba(0,0,0,.025)"></div>
<div class="a" style="left:-20px;top:14px;width:1px;height:128px;background:rgba(0,0,0,.065)"></div>
<div class="a" style="left:-16px;top:14px;width:1px;height:128px;background:rgba(0,0,0,.065)"></div>
<div class="a" style="left:-12px;top:14px;width:1px;height:128px;background:rgba(0,0,0,.065)"></div>
<div class="a" style="left:9px;top:14px;width:7px;height:128px;background:rgba(0,0,0,.025)"></div>
<div class="a" style="left:8px;top:14px;width:1px;height:128px;background:rgba(0,0,0,.065)"></div>
<div class="a" style="left:12px;top:14px;width:1px;height:128px;background:rgba(0,0,0,.065)"></div>
<div class="a" style="left:16px;top:14px;width:1px;height:128px;background:rgba(0,0,0,.065)"></div>
<div class="a" style="left:37px;top:14px;width:7px;height:128px;background:rgba(0,0,0,.025)"></div>
<div class="a" style="left:36px;top:14px;width:1px;height:128px;background:rgba(0,0,0,.065)"></div>
<div class="a" style="left:40px;top:14px;width:1px;height:128px;background:rgba(0,0,0,.065)"></div>
<div class="a" style="left:44px;top:14px;width:1px;height:128px;background:rgba(0,0,0,.065)"></div>
<div class="a" style="left:65px;top:14px;width:7px;height:128px;background:rgba(0,0,0,.025)"></div>
<div class="a" style="left:64px;top:14px;width:1px;height:128px;background:rgba(0,0,0,.065)"></div>
<div class="a" style="left:68px;top:14px;width:1px;height:128px;background:rgba(0,0,0,.065)"></div>
<div class="a" style="left:72px;top:14px;width:1px;height:128px;background:rgba(0,0,0,.065)"></div>
<div class="a" style="left:93px;top:14px;width:7px;height:128px;background:rgba(0,0,0,.025)"></div>
<div class="a" style="left:92px;top:14px;width:1px;height:128px;background:rgba(0,0,0,.065)"></div>
<div class="a" style="left:96px;top:14px;width:1px;height:128px;background:rgba(0,0,0,.065)"></div>
<div class="a" style="left:100px;top:14px;width:1px;height:128px;background:rgba(0,0,0,.065)"></div>
<div class="a" style="left:121px;top:14px;width:7px;height:128px;background:rgba(0,0,0,.025)"></div>
<div class="a" style="left:120px;top:14px;width:1px;height:128px;background:rgba(0,0,0,.065)"></div>
<div class="a" style="left:124px;top:14px;width:1px;height:128px;background:rgba(0,0,0,.065)"></div>
<div class="a" style="left:128px;top:14px;width:1px;height:128px;background:rgba(0,0,0,.065)"></div>
<div class="a" style="left:149px;top:14px;width:7px;height:128px;background:rgba(0,0,0,.025)"></div>
<div class="a" style="left:148px;top:14px;width:1px;height:128px;background:rgba(0,0,0,.065)"></div>
<div class="a" style="left:152px;top:14px;width:1px;height:128px;background:rgba(0,0,0,.065)"></div>
<div class="a" style="left:156px;top:14px;width:1px;height:128px;background:rgba(0,0,0,.065)"></div>
<div class="a" style="left:177px;top:14px;width:7px;height:128px;background:rgba(0,0,0,.025)"></div>
<div class="a" style="left:176px;top:14px;width:1px;height:128px;background:rgba(0,0,0,.065)"></div>
<div class="a" style="left:180px;top:14px;width:1px;height:128px;background:rgba(0,0,0,.065)"></div>
<div class="a" style="left:184px;top:14px;width:1px;height:128px;background:rgba(0,0,0,.065)"></div>
<div class="a" style="left:205px;top:14px;width:7px;height:128px;background:rgba(0,0,0,.025)"></div>
<div class="a" style="left:204px;top:14px;width:1px;height:128px;background:rgba(0,0,0,.065)"></div>
<div class="a" style="left:208px;top:14px;width:1px;height:128px;background:rgba(0,0,0,.065)"></div>
<div class="a" style="left:212px;top:14px;width:1px;height:128px;background:rgba(0,0,0,.065)"></div>
<div class="a" style="left:233px;top:14px;width:7px;height:128px;background:rgba(0,0,0,.025)"></div>
<div class="a" style="left:232px;top:14px;width:1px;height:128px;background:rgba(0,0,0,.065)"></div>
<div class="a" style="left:236px;top:14px;width:1px;height:128px;background:rgba(0,0,0,.065)"></div>
<div class="a" style="left:240px;top:14px;width:1px;height:128px;background:rgba(0,0,0,.065)"></div>
<div class="a" style="left:261px;top:14px;width:7px;height:128px;background:rgba(0,0,0,.025)"></div>
<div class="a" style="left:260px;top:14px;width:1px;height:128px;background:rgba(0,0,0,.065)"></div>
<div class="a" style="left:264px;top:14px;width:1px;height:128px;background:rgba(0,0,0,.065)"></div>
<div class="a" style="left:268px;top:14px;width:1px;height:128px;background:rgba(0,0,0,.065)"></div>
<div class="a" style="left:289px;top:14px;width:7px;height:128px;background:rgba(0,0,0,.025)"></div>
<div class="a" style="left:288px;top:14px;width:1px;height:128px;background:rgba(0,0,0,.065)"></div>
<div class="a" style="left:292px;top:14px;width:1px;height:128px;background:rgba(0,0,0,.065)"></div>
<div class="a" style="left:296px;top:14px;width:1px;height:128px;background:rgba(0,0,0,.065)"></div>
<div class="a" style="left:317px;top:14px;width:7px;height:128px;background:rgba(0,0,0,.025)"></div>
<div class="a" style="left:316px;top:14px;width:1px;height:128px;background:rgba(0,0,0,.065)"></div>
<div class="a" style="left:320px;top:14px;width:1px;height:128px;background:rgba(0,0,0,.065)"></div>
<div class="a" style="left:324px;top:14px;width:1px;height:128px;background:rgba(0,0,0,.065)"></div>
<div class="a" style="left:345px;top:14px;width:7px;height:128px;background:rgba(0,0,0,.025)"></div>
<div class="a" style="left:344px;top:14px;width:1px;height:128px;background:rgba(0,0,0,.065)"></div>
<div class="a" style="left:348px;top:14px;width:1px;height:128px;background:rgba(0,0,0,.065)"></div>
<div class="a" style="left:352px;top:14px;width:1px;height:128px;background:rgba(0,0,0,.065)"></div>
<div class="a" style="left:373px;top:14px;width:7px;height:128px;background:rgba(0,0,0,.025)"></div>
<div class="a" style="left:372px;top:14px;width:1px;height:128px;background:rgba(0,0,0,.065)"></div>
<div class="a" style="left:376px;top:14px;width:1px;height:128px;background:rgba(0,0,0,.065)"></div>
<div class="a" style="left:380px;top:14px;width:1px;height:128px;background:rgba(0,0,0,.065)"></div>
<div class="a" style="left:401px;top:14px;width:7px;height:128px;background:rgba(0,0,0,.025)"></div>
<div class="a" style="left:400px;top:14px;width:1px;height:128px;background:rgba(0,0,0,.065)"></div>
<div class="a" style="left:404px;top:14px;width:1px;height:128px;background:rgba(0,0,0,.065)"></div>
<div class="a" style="left:408px;top:14px;width:1px;height:128px;background:rgba(0,0,0,.065)"></div>
<div class="a" style="left:429px;top:14px;width:7px;height:128px;background:rgba(0,0,0,.025)"></div>
<div class="a" style="left:428px;top:14px;width:1px;height:128px;background:rgba(0,0,0,.065)"></div>
<div class="a" style="left:432px;top:14px;width:1px;height:128px;background:rgba(0,0,0,.065)"></div>
<div class="a" style="left:436px;top:14px;width:1px;height:128px;background:rgba(0,0,0,.065)"></div>
<div class="a" style="left:457px;top:14px;width:7px;height:128px;background:rgba(0,0,0,.025)"></div>
<div class="a" style="left:456px;top:14px;width:1px;height:128px;background:rgba(0,0,0,.065)"></div>
<div class="a" style="left:460px;top:14px;width:1px;height:128px;background:rgba(0,0,0,.065)"></div>
<div class="a" style="left:464px;top:14px;width:1px;height:128px;background:rgba(0,0,0,.065)"></div>
<div class="a" style="left:485px;top:14px;width:7px;height:128px;background:rgba(0,0,0,.025)"></div>
<div class="a" style="left:484px;top:14px;width:1px;height:128px;background:rgba(0,0,0,.065)"></div>
<div class="a" style="left:488px;top:14px;width:1px;height:128px;background:rgba(0,0,0,.065)"></div>
<div class="a" style="left:492px;top:14px;width:1px;height:128px;background:rgba(0,0,0,.065)"></div>
<div class="a" style="left:512px;top:14px;width:1px;height:128px;background:#f6cdd3"></div>
<div class="a" style="left:516px;top:14px;width:1px;height:128px;background:#f6cdd3"></div>
<div class="a" style="left:520px;top:14px;width:1px;height:128px;background:#f6cdd3"></div>
<div class="a" style="left:540px;top:14px;width:1px;height:128px;background:#f6cdd3"></div>
<div class="a" style="left:544px;top:14px;width:1px;height:128px;background:#f6cdd3"></div>
<div class="a" style="left:548px;top:14px;width:1px;height:128px;background:#f6cdd3"></div>
<div class="a" style="left:568px;top:14px;width:1px;height:128px;background:#f6cdd3"></div>
<div class="a" style="left:572px;top:14px;width:1px;height:128px;background:#f6cdd3"></div>
<div class="a" style="left:576px;top:14px;width:1px;height:128px;background:#f6cdd3"></div>
<div class="a" style="left:596px;top:14px;width:1px;height:128px;background:#f6cdd3"></div>
<div class="a" style="left:600px;top:14px;width:1px;height:128px;background:#f6cdd3"></div>
<div class="a" style="left:604px;top:14px;width:1px;height:128px;background:#f6cdd3"></div>
<div class="a" style="left:624px;top:14px;width:1px;height:128px;background:#f6cdd3"></div>
<div class="a" style="left:628px;top:14px;width:1px;height:128px;background:#f6cdd3"></div>
<div class="a" style="left:632px;top:14px;width:1px;height:128px;background:#f6cdd3"></div>
<div class="a" style="left:652px;top:14px;width:1px;height:128px;background:#f6cdd3"></div>
<div class="a" style="left:656px;top:14px;width:1px;height:128px;background:#f6cdd3"></div>
<div class="a" style="left:660px;top:14px;width:1px;height:128px;background:#f6cdd3"></div>
<div class="a" style="left:680px;top:14px;width:1px;height:128px;background:#f6cdd3"></div>
<div class="a" style="left:684px;top:14px;width:1px;height:128px;background:#f6cdd3"></div>
<div class="a" style="left:688px;top:14px;width:1px;height:128px;background:#f6cdd3"></div>
<div class="a" style="left:708px;top:14px;width:1px;height:128px;background:#f6cdd3"></div>
<div class="a" style="left:712px;top:14px;width:1px;height:128px;background:#f6cdd3"></div>
<div class="a" style="left:716px;top:14px;width:1px;height:128px;background:#f6cdd3"></div>
<div class="a" style="left:20px;top:14px;width:1px;height:128px;background:#c8c8f8"></div>
<div class="a" style="left:140px;top:14px;width:1px;height:128px;background:#c8c8f8"></div>
<div class="a" style="left:264px;top:14px;width:1px;height:128px;background:#c8c8f8"></div>
<div class="a" style="left:388px;top:14px;width:1px;height:128px;background:#c8c8f8"></div>
<div class="a" style="left:508px;top:14px;width:1px;height:128px;background:#c8c8f8"></div>
<div class="a" style="left:632px;top:14px;width:1px;height:128px;background:#c8c8f8"></div>
<div class="a" style="left:46px;top:14px;width:3px;height:128px;background:#fffcd8"></div>
<div class="a" style="left:45px;top:14px;width:1px;height:128px;background:#7e7e00"></div>
<div class="a" style="left:1px;top:24px;width:3px;height:15px;border:1px solid #dadada;border-bottom-color:#cfcfcf"></div>
<div class="a" style="left:5px;top:24px;width:3px;height:15px;border:1px solid #dadada;border-bottom-color:#cfcfcf"></div>
<div class="a" style="left:17px;top:24px;width:3px;height:15px;border:1px solid #dadada;border-bottom-color:#cfcfcf"></div>
<div class="a" style="left:21px;top:24px;width:3px;height:15px;border:1px solid #dadada;border-bottom-color:#cfcfcf"></div>
<div class="a" style="left:25px;top:24px;width:3px;height:15px;border:1px solid #dadada;border-bottom-color:#cfcfcf"></div>
<div class="a" style="left:29px;top:24px;width:3px;height:15px;border:1px solid #dadada;border-bottom-color:#cfcfcf"></div>
<div class="a" style="left:33px;top:24px;width:3px;height:15px;border:1px solid #dadada;border-bottom-color:#cfcfcf"></div>
<div class="a" style="left:1px;top:48px;width:3px;height:15px;border:1px solid #dadada;border-bottom-color:#cfcfcf"></div>
<div class="a" style="left:5px;top:48px;width:3px;height:15px;border:1px solid #dadada;border-bottom-color:#cfcfcf"></div>
<div class="a" style="left:17px;top:48px;width:3px;height:15px;border:1px solid #dadada;border-bottom-color:#cfcfcf"></div>
<div class="a" style="left:21px;top:48px;width:3px;height:15px;border:1px solid #dadada;border-bottom-color:#cfcfcf"></div>
<div class="a" style="left:25px;top:48px;width:3px;height:15px;border:1px solid #dadada;border-bottom-color:#cfcfcf"></div>
<div class="a" style="left:29px;top:48px;width:3px;height:15px;border:1px solid #dadada;border-bottom-color:#cfcfcf"></div>
<div class="a" style="left:33px;top:48px;width:3px;height:15px;border:1px solid #dadada;border-bottom-color:#cfcfcf"></div>
<div class="a" style="left:1px;top:72px;width:3px;height:15px;border:1px solid #dadada;border-bottom-color:#cfcfcf"></div>
<div class="a" style="left:5px;top:72px;width:3px;height:15px;border:1px solid #dadada;border-bottom-color:#cfcfcf"></div>
<div class="a" style="left:17px;top:72px;width:3px;height:15px;border:1px solid #dadada;border-bottom-color:#cfcfcf"></div>
<div class="a" style="left:21px;top:72px;width:3px;height:15px;border:1px solid #dadada;border-bottom-color:#cfcfcf"></div>
<div class="a" style="left:25px;top:72px;width:3px;height:15px;border:1px solid #dadada;border-bottom-color:#cfcfcf"></div>
<div class="a" style="left:29px;top:72px;width:3px;height:15px;border:1px solid #dadada;border-bottom-color:#cfcfcf"></div>
<div class="a" style="left:33px;top:72px;width:3px;height:15px;border:1px solid #dadada;border-bottom-color:#cfcfcf"></div>
<div class="a" style="left:1px;top:96px;width:3px;height:15px;border:1px solid #dadada;border-bottom-color:#cfcfcf"></div>
<div class="a" style="left:5px;top:96px;width:3px;height:15px;border:1px solid #dadada;border-bottom-color:#cfcfcf"></div>
<div class="a" style="left:17px;top:96px;width:3px;height:15px;border:1px solid #dadada;border-bottom-color:#cfcfcf"></div>
<div class="a" style="left:21px;top:96px;width:3px;height:15px;border:1px solid #dadada;border-bottom-color:#cfcfcf"></div>
<div class="a" style="left:25px;top:96px;width:3px;height:15px;border:1px solid #dadada;border-bottom-color:#cfcfcf"></div>
<div class="a" style="left:29px;top:96px;width:3px;height:15px;border:1px solid #dadada;border-bottom-color:#cfcfcf"></div>
<div class="a" style="left:33px;top:96px;width:3px;height:15px;border:1px solid #dadada;border-bottom-color:#cfcfcf"></div>
<div class="a" style="left:45px;top:24px;width:3px;height:15px;background:#a8000e"></div>
<div class="a" style="left:49px;top:24px;width:3px;height:15px;background:#a8000e"></div>
<div class="a" style="left:53px;top:24px;width:3px;height:15px;background:#a8000e"></div>
<div class="a" style="left:57px;top:24px;width:3px;height:15px;background:#a8000e"></div>
<div class="a" style="left:61px;top:24px;width:3px;height:15px;background:#a8000e"></div>
<div class="a" style="left:73px;top:24px;width:3px;height:15px;background:#a8000e"></div>
<div class="a" style="left:77px;top:24px;width:3px;height:15px;background:#a8000e"></div>
<div class="a" style="left:81px;top:24px;width:3px;height:15px;background:#a8000e"></div>
<div class="a" style="left:85px;top:24px;width:3px;height:15px;background:#a8000e"></div>
<div class="a" style="left:89px;top:24px;width:3px;height:15px;background:#a8000e"></div>
<div class="a" style="left:101px;top:24px;width:3px;height:15px;background:#a8000e"></div>
<div class="a" style="left:105px;top:24px;width:3px;height:15px;background:#a8000e"></div>
<div class="a" style="left:109px;top:24px;width:3px;height:15px;background:#a8000e"></div>
<div class="a" style="left:113px;top:24px;width:3px;height:15px;background:#a8000e"></div>
<div class="a" style="left:117px;top:24px;width:3px;height:15px;background:#a8000e"></div>
<div class="a" style="left:129px;top:24px;width:3px;height:15px;background:#a8000e"></div>
<div class="a" style="left:133px;top:24px;width:3px;height:15px;background:#a8000e"></div>
<div class="a" style="left:137px;top:24px;width:3px;height:15px;background:#a8000e"></div>
<div class="a" style="left:141px;top:24px;width:3px;height:15px;background:#00774e"></div>
<div class="a" style="left:145px;top:24px;width:3px;height:15px;background:#00774e"></div>
<div class="a" style="left:157px;top:24px;width:3px;height:15px;background:#00774e"></div>
<div class="a" style="left:161px;top:24px;width:3px;height:15px;background:#00774e"></div>
<div class="a" style="left:165px;top:24px;width:3px;height:15px;background:#00774e"></div>
<div class="a" style="left:169px;top:24px;width:3px;height:15px;background:#00774e"></div>
<div class="a" style="left:173px;top:24px;width:3px;height:15px;background:#00774e"></div>
<div class="a" style="left:185px;top:24px;width:3px;height:15px;background:#00774e"></div>
<div class="a" style="left:189px;top:24px;width:3px;height:15px;background:#00774e"></div>
<div class="a" style="left:193px;top:24px;width:3px;height:15px;background:#00774e"></div>
<div class="a" style="left:197px;top:24px;width:3px;height:15px;background:#00774e"></div>
<div class="a" style="left:201px;top:24px;width:3px;height:15px;background:#00774e"></div>
<div class="a" style="left:213px;top:24px;width:3px;height:15px;background:#00774e"></div>
<div class="a" style="left:217px;top:24px;width:3px;height:15px;background:#00774e"></div>
<div class="a" style="left:221px;top:24px;width:3px;height:15px;background:#00774e"></div>
<div class="a" style="left:225px;top:24px;width:3px;height:15px;background:#00774e"></div>
<div class="a" style="left:229px;top:24px;width:3px;height:15px;background:#00774e"></div>
<div class="a" style="left:241px;top:24px;width:3px;height:15px;background:#00774e"></div>
<div class="a" style="left:245px;top:24px;width:3px;height:15px;background:#00774e"></div>
<div class="a" style="left:249px;top:24px;width:3px;height:15px;background:#00774e"></div>
<div class="a" style="left:253px;top:24px;width:3px;height:15px;background:#00774e"></div>
<div class="a" style="left:257px;top:24px;width:3px;height:15px;background:#00774e"></div>
<div class="a" style="left:269px;top:24px;width:3px;height:15px;background:#00774e"></div>
<div class="a" style="left:273px;top:24px;width:3px;height:15px;background:#00774e"></div>
<div class="a" style="left:277px;top:24px;width:3px;height:15px;background:#00774e"></div>
<div class="a" style="left:281px;top:24px;width:3px;height:15px;background:#00774e"></div>
<div class="a" style="left:285px;top:24px;width:3px;height:15px;background:#00774e"></div>
<div class="a" style="left:297px;top:24px;width:3px;height:15px;background:#00774e"></div>
<div class="a" style="left:301px;top:24px;width:3px;height:15px;background:#00774e"></div>
<div class="a" style="left:305px;top:24px;width:3px;height:15px;background:#00774e"></div>
<div class="a" style="left:309px;top:24px;width:3px;height:15px;background:#00774e"></div>
<div class="a" style="left:313px;top:24px;width:3px;height:15px;background:#00774e"></div>
<div class="a" style="left:325px;top:24px;width:3px;height:15px;background:#00774e"></div>
<div class="a" style="left:329px;top:24px;width:3px;height:15px;background:#00774e"></div>
<div class="a" style="left:333px;top:24px;width:3px;height:15px;background:#00774e"></div>
<div class="a" style="left:337px;top:24px;width:3px;height:15px;background:#00774e"></div>
<div class="a" style="left:341px;top:24px;width:3px;height:15px;background:#00774e"></div>
<div class="a" style="left:353px;top:24px;width:3px;height:15px;background:#00774e"></div>
<div class="a" style="left:357px;top:24px;width:3px;height:15px;background:#00774e"></div>
<div class="a" style="left:361px;top:24px;width:3px;height:15px;background:#00774e"></div>
<div class="a" style="left:365px;top:24px;width:3px;height:15px;background:#00774e"></div>
<div class="a" style="left:369px;top:24px;width:3px;height:15px;background:#00774e"></div>
<div class="a" style="left:381px;top:24px;width:3px;height:15px;background:#00774e"></div>
<div class="a" style="left:385px;top:24px;width:3px;height:15px;background:#00774e"></div>
<div class="a" style="left:389px;top:24px;width:3px;height:15px;background:#00774e"></div>
<div class="a" style="left:393px;top:24px;width:3px;height:15px;background:#00774e"></div>
<div class="a" style="left:397px;top:24px;width:3px;height:15px;background:#00774e"></div>
<div class="a" style="left:409px;top:24px;width:3px;height:15px;background:#00774e"></div>
<div class="a" style="left:413px;top:24px;width:3px;height:15px;background:#00774e"></div>
<div class="a" style="left:417px;top:24px;width:3px;height:15px;background:#00774e"></div>
<div class="a" style="left:421px;top:24px;width:3px;height:15px;background:#00774e"></div>
<div class="a" style="left:425px;top:24px;width:3px;height:15px;background:#00774e"></div>
<div class="a" style="left:437px;top:24px;width:3px;height:15px;background:#00774e"></div>
<div class="a" style="left:441px;top:24px;width:3px;height:15px;background:#00774e"></div>
<div class="a" style="left:445px;top:24px;width:3px;height:15px;background:#00774e"></div>
<div class="a" style="left:449px;top:24px;width:3px;height:15px;background:#00774e"></div>
<div class="a" style="left:453px;top:24px;width:3px;height:15px;background:#00774e"></div>
<div class="a" style="left:465px;top:24px;width:3px;height:15px;background:#00774e"></div>
<div class="a" style="left:469px;top:24px;width:3px;height:15px;background:#00774e"></div>
<div class="a" style="left:473px;top:24px;width:3px;height:15px;background:#00774e"></div>
<div class="a" style="left:477px;top:24px;width:3px;height:15px;background:#00774e"></div>
<div class="a" style="left:481px;top:24px;width:3px;height:15px;background:#00774e"></div>
<div class="a" style="left:493px;top:24px;width:3px;height:15px;background:#00774e"></div>
<div class="a" style="left:497px;top:24px;width:3px;height:15px;background:#00774e"></div>
<div class="a" style="left:501px;top:24px;width:3px;height:15px;background:#00774e"></div>
<div class="a" style="left:505px;top:24px;width:3px;height:15px;background:#00774e"></div>
<div class="a" style="left:45px;top:48px;width:3px;height:15px;background:#a8000e"></div>
<div class="a" style="left:49px;top:48px;width:3px;height:15px;background:#a8000e"></div>
<div class="a" style="left:53px;top:48px;width:3px;height:15px;background:#a8000e"></div>
<div class="a" style="left:57px;top:48px;width:3px;height:15px;background:#a8000e"></div>
<div class="a" style="left:61px;top:48px;width:3px;height:15px;background:#a8000e"></div>
<div class="a" style="left:73px;top:48px;width:3px;height:15px;background:#a8000e"></div>
<div class="a" style="left:77px;top:48px;width:3px;height:15px;background:#a8000e"></div>
<div class="a" style="left:81px;top:48px;width:3px;height:15px;background:#a8000e"></div>
<div class="a" style="left:85px;top:48px;width:3px;height:15px;background:#a8000e"></div>
<div class="a" style="left:89px;top:48px;width:3px;height:15px;background:#a8000e"></div>
<div class="a" style="left:101px;top:48px;width:3px;height:15px;background:#a8000e"></div>
<div class="a" style="left:105px;top:48px;width:3px;height:15px;background:#a8000e"></div>
<div class="a" style="left:109px;top:48px;width:3px;height:15px;background:#a8000e"></div>
<div class="a" style="left:113px;top:48px;width:3px;height:15px;background:#a8000e"></div>
<div class="a" style="left:117px;top:48px;width:3px;height:15px;background:#a8000e"></div>
<div class="a" style="left:129px;top:48px;width:3px;height:15px;background:#a8000e"></div>
<div class="a" style="left:133px;top:48px;width:3px;height:15px;background:#a8000e"></div>
<div class="a" style="left:137px;top:48px;width:3px;height:15px;background:#a8000e"></div>
<div class="a" style="left:141px;top:48px;width:3px;height:15px;background:#d4a00c"></div>
<div class="a" style="left:145px;top:48px;width:3px;height:15px;background:#d4a00c"></div>
<div class="a" style="left:157px;top:48px;width:3px;height:15px;background:#d4a00c"></div>
<div class="a" style="left:161px;top:48px;width:3px;height:15px;background:#d4a00c"></div>
<div class="a" style="left:165px;top:48px;width:3px;height:15px;background:#d4a00c"></div>
<div class="a" style="left:169px;top:48px;width:3px;height:15px;background:#d4a00c"></div>
<div class="a" style="left:173px;top:48px;width:3px;height:15px;background:#d4a00c"></div>
<div class="a" style="left:185px;top:48px;width:3px;height:15px;background:#d4a00c"></div>
<div class="a" style="left:189px;top:48px;width:3px;height:15px;background:#d4a00c"></div>
<div class="a" style="left:193px;top:48px;width:3px;height:15px;background:#d4a00c"></div>
<div class="a" style="left:197px;top:48px;width:3px;height:15px;background:#d4a00c"></div>
<div class="a" style="left:201px;top:48px;width:3px;height:15px;background:#d4a00c"></div>
<div class="a" style="left:213px;top:48px;width:3px;height:15px;background:#d4a00c"></div>
<div class="a" style="left:217px;top:48px;width:3px;height:15px;background:#d4a00c"></div>
<div class="a" style="left:221px;top:48px;width:3px;height:15px;background:#d4a00c"></div>
<div class="a" style="left:225px;top:48px;width:3px;height:15px;background:#d4a00c"></div>
<div class="a" style="left:229px;top:48px;width:3px;height:15px;background:#d4a00c"></div>
<div class="a" style="left:241px;top:48px;width:3px;height:15px;background:#d4a00c"></div>
<div class="a" style="left:245px;top:48px;width:3px;height:15px;background:#d4a00c"></div>
<div class="a" style="left:249px;top:48px;width:3px;height:15px;background:#d4a00c"></div>
<div class="a" style="left:253px;top:48px;width:3px;height:15px;background:#d4a00c"></div>
<div class="a" style="left:257px;top:48px;width:3px;height:15px;background:#d4a00c"></div>
<div class="a" style="left:269px;top:48px;width:3px;height:15px;background:#d4a00c"></div>
<div class="a" style="left:273px;top:48px;width:3px;height:15px;background:#d4a00c"></div>
<div class="a" style="left:277px;top:48px;width:3px;height:15px;background:#d4a00c"></div>
<div class="a" style="left:281px;top:48px;width:3px;height:15px;background:#d4a00c"></div>
<div class="a" style="left:285px;top:48px;width:3px;height:15px;background:#d4a00c"></div>
<div class="a" style="left:297px;top:48px;width:3px;height:15px;background:#d4a00c"></div>
<div class="a" style="left:301px;top:48px;width:3px;height:15px;background:#d4a00c"></div>
<div class="a" style="left:305px;top:48px;width:3px;height:15px;background:#d4a00c"></div>
<div class="a" style="left:309px;top:48px;width:3px;height:15px;background:#d4a00c"></div>
<div class="a" style="left:313px;top:48px;width:3px;height:15px;background:#d4a00c"></div>
<div class="a" style="left:325px;top:48px;width:3px;height:15px;background:#d4a00c"></div>
<div class="a" style="left:329px;top:48px;width:3px;height:15px;background:#d4a00c"></div>
<div class="a" style="left:333px;top:48px;width:3px;height:15px;background:#d4a00c"></div>
<div class="a" style="left:337px;top:48px;width:3px;height:15px;background:#d4a00c"></div>
<div class="a" style="left:341px;top:48px;width:3px;height:15px;background:#d4a00c"></div>
<div class="a" style="left:353px;top:48px;width:3px;height:15px;background:#d4a00c"></div>
<div class="a" style="left:357px;top:48px;width:3px;height:15px;background:#d4a00c"></div>
<div class="a" style="left:361px;top:48px;width:3px;height:15px;background:#d4a00c"></div>
<div class="a" style="left:365px;top:48px;width:3px;height:15px;background:#d4a00c"></div>
<div class="a" style="left:369px;top:48px;width:3px;height:15px;background:#d4a00c"></div>
<div class="a" style="left:381px;top:48px;width:3px;height:15px;background:#d4a00c"></div>
<div class="a" style="left:385px;top:48px;width:3px;height:15px;background:#d4a00c"></div>
<div class="a" style="left:389px;top:48px;width:3px;height:15px;background:#d4a00c"></div>
<div class="a" style="left:393px;top:48px;width:3px;height:15px;background:#d4a00c"></div>
<div class="a" style="left:397px;top:48px;width:3px;height:15px;background:#d4a00c"></div>
<div class="a" style="left:409px;top:48px;width:3px;height:15px;background:#d4a00c"></div>
<div class="a" style="left:413px;top:48px;width:3px;height:15px;background:#d4a00c"></div>
<div class="a" style="left:417px;top:48px;width:3px;height:15px;background:#d4a00c"></div>
<div class="a" style="left:421px;top:48px;width:3px;height:15px;background:#d4a00c"></div>
<div class="a" style="left:425px;top:48px;width:3px;height:15px;background:#d4a00c"></div>
<div class="a" style="left:437px;top:48px;width:3px;height:15px;background:#d4a00c"></div>
<div class="a" style="left:441px;top:48px;width:3px;height:15px;background:#d4a00c"></div>
<div class="a" style="left:445px;top:48px;width:3px;height:15px;background:#d4a00c"></div>
<div class="a" style="left:449px;top:48px;width:3px;height:15px;background:#d4a00c"></div>
<div class="a" style="left:453px;top:48px;width:3px;height:15px;background:#d4a00c"></div>
<div class="a" style="left:465px;top:48px;width:3px;height:15px;background:#d4a00c"></div>
<div class="a" style="left:469px;top:48px;width:3px;height:15px;background:#d4a00c"></div>
<div class="a" style="left:473px;top:48px;width:3px;height:15px;background:#d4a00c"></div>
<div class="a" style="left:477px;top:48px;width:3px;height:15px;background:#d4a00c"></div>
<div class="a" style="left:481px;top:48px;width:3px;height:15px;background:#d4a00c"></div>
<div class="a" style="left:493px;top:48px;width:3px;height:15px;background:#d4a00c"></div>
<div class="a" style="left:497px;top:48px;width:3px;height:15px;background:#d4a00c"></div>
<div class="a" style="left:501px;top:48px;width:3px;height:15px;background:#d4a00c"></div>
<div class="a" style="left:505px;top:48px;width:3px;height:15px;background:#d4a00c"></div>
<div class="a" style="left:45px;top:72px;width:3px;height:15px;background:#a8000e"></div>
<div class="a" style="left:49px;top:72px;width:3px;height:15px;background:#a8000e"></div>
<div class="a" style="left:53px;top:72px;width:3px;height:15px;background:#a8000e"></div>
<div class="a" style="left:57px;top:72px;width:3px;height:15px;background:#a8000e"></div>
<div class="a" style="left:61px;top:72px;width:3px;height:15px;background:#a8000e"></div>
<div class="a" style="left:73px;top:72px;width:3px;height:15px;background:#a8000e"></div>
<div class="a" style="left:77px;top:72px;width:3px;height:15px;background:#a8000e"></div>
<div class="a" style="left:81px;top:72px;width:3px;height:15px;background:#a8000e"></div>
<div class="a" style="left:85px;top:72px;width:3px;height:15px;background:#a8000e"></div>
<div class="a" style="left:89px;top:72px;width:3px;height:15px;background:#a8000e"></div>
<div class="a" style="left:101px;top:72px;width:3px;height:15px;background:#a8000e"></div>
<div class="a" style="left:105px;top:72px;width:3px;height:15px;background:#a8000e"></div>
<div class="a" style="left:109px;top:72px;width:3px;height:15px;background:#a8000e"></div>
<div class="a" style="left:113px;top:72px;width:3px;height:15px;background:#a8000e"></div>
<div class="a" style="left:117px;top:72px;width:3px;height:15px;background:#a8000e"></div>
<div class="a" style="left:129px;top:72px;width:3px;height:15px;background:#a8000e"></div>
<div class="a" style="left:133px;top:72px;width:3px;height:15px;background:#a8000e"></div>
<div class="a" style="left:137px;top:72px;width:3px;height:15px;background:#a8000e"></div>
<div class="a" style="left:141px;top:72px;width:3px;height:15px;background:#00774e"></div>
<div class="a" style="left:145px;top:72px;width:3px;height:15px;background:#00774e"></div>
<div class="a" style="left:157px;top:72px;width:3px;height:15px;background:#00774e"></div>
<div class="a" style="left:161px;top:72px;width:3px;height:15px;background:#00774e"></div>
<div class="a" style="left:165px;top:72px;width:3px;height:15px;background:#00774e"></div>
<div class="a" style="left:169px;top:72px;width:3px;height:15px;background:#00774e"></div>
<div class="a" style="left:173px;top:72px;width:3px;height:15px;background:#00774e"></div>
<div class="a" style="left:185px;top:72px;width:3px;height:15px;background:#00774e"></div>
<div class="a" style="left:189px;top:72px;width:3px;height:15px;background:#00774e"></div>
<div class="a" style="left:193px;top:72px;width:3px;height:15px;background:#00774e"></div>
<div class="a" style="left:197px;top:72px;width:3px;height:15px;background:#00774e"></div>
<div class="a" style="left:201px;top:72px;width:3px;height:15px;background:#00774e"></div>
<div class="a" style="left:213px;top:72px;width:3px;height:15px;background:#00774e"></div>
<div class="a" style="left:217px;top:72px;width:3px;height:15px;background:#00774e"></div>
<div class="a" style="left:221px;top:72px;width:3px;height:15px;background:#00774e"></div>
<div class="a" style="left:225px;top:72px;width:3px;height:15px;background:#00774e"></div>
<div class="a" style="left:229px;top:72px;width:3px;height:15px;background:#00774e"></div>
<div class="a" style="left:241px;top:72px;width:3px;height:15px;background:#00774e"></div>
<div class="a" style="left:245px;top:72px;width:3px;height:15px;background:#00774e"></div>
<div class="a" style="left:249px;top:72px;width:3px;height:15px;background:#00774e"></div>
<div class="a" style="left:253px;top:72px;width:3px;height:15px;background:#00774e"></div>
<div class="a" style="left:257px;top:72px;width:3px;height:15px;background:#00774e"></div>
<div class="a" style="left:269px;top:72px;width:3px;height:15px;background:#00774e"></div>
<div class="a" style="left:273px;top:72px;width:3px;height:15px;background:#00774e"></div>
<div class="a" style="left:277px;top:72px;width:3px;height:15px;background:#00774e"></div>
<div class="a" style="left:281px;top:72px;width:3px;height:15px;background:#00774e"></div>
<div class="a" style="left:285px;top:72px;width:3px;height:15px;background:#00774e"></div>
<div class="a" style="left:297px;top:72px;width:3px;height:15px;background:#00774e"></div>
<div class="a" style="left:301px;top:72px;width:3px;height:15px;background:#00774e"></div>
<div class="a" style="left:305px;top:72px;width:3px;height:15px;background:#00774e"></div>
<div class="a" style="left:309px;top:72px;width:3px;height:15px;background:#00774e"></div>
<div class="a" style="left:313px;top:72px;width:3px;height:15px;background:#00774e"></div>
<div class="a" style="left:325px;top:72px;width:3px;height:15px;background:#00774e"></div>
<div class="a" style="left:329px;top:72px;width:3px;height:15px;background:#00774e"></div>
<div class="a" style="left:333px;top:72px;width:3px;height:15px;background:#00774e"></div>
<div class="a" style="left:337px;top:72px;width:3px;height:15px;background:#00774e"></div>
<div class="a" style="left:341px;top:72px;width:3px;height:15px;background:#00774e"></div>
<div class="a" style="left:353px;top:72px;width:3px;height:15px;background:#00774e"></div>
<div class="a" style="left:357px;top:72px;width:3px;height:15px;background:#00774e"></div>
<div class="a" style="left:361px;top:72px;width:3px;height:15px;background:#00774e"></div>
<div class="a" style="left:365px;top:72px;width:3px;height:15px;background:#00774e"></div>
<div class="a" style="left:369px;top:72px;width:3px;height:15px;background:#00774e"></div>
<div class="a" style="left:381px;top:72px;width:3px;height:15px;background:#00774e"></div>
<div class="a" style="left:385px;top:72px;width:3px;height:15px;background:#00774e"></div>
<div class="a" style="left:389px;top:72px;width:3px;height:15px;background:#00774e"></div>
<div class="a" style="left:393px;top:72px;width:3px;height:15px;background:#00774e"></div>
<div class="a" style="left:397px;top:72px;width:3px;height:15px;background:#00774e"></div>
<div class="a" style="left:409px;top:72px;width:3px;height:15px;background:#00774e"></div>
<div class="a" style="left:413px;top:72px;width:3px;height:15px;background:#00774e"></div>
<div class="a" style="left:417px;top:72px;width:3px;height:15px;background:#00774e"></div>
<div class="a" style="left:421px;top:72px;width:3px;height:15px;background:#00774e"></div>
<div class="a" style="left:425px;top:72px;width:3px;height:15px;background:#00774e"></div>
<div class="a" style="left:437px;top:72px;width:3px;height:15px;background:#00774e"></div>
<div class="a" style="left:441px;top:72px;width:3px;height:15px;background:#00774e"></div>
<div class="a" style="left:445px;top:72px;width:3px;height:15px;background:#00774e"></div>
<div class="a" style="left:449px;top:72px;width:3px;height:15px;background:#00774e"></div>
<div class="a" style="left:453px;top:72px;width:3px;height:15px;background:#00774e"></div>
<div class="a" style="left:465px;top:72px;width:3px;height:15px;background:#00774e"></div>
<div class="a" style="left:469px;top:72px;width:3px;height:15px;background:#00774e"></div>
<div class="a" style="left:473px;top:72px;width:3px;height:15px;background:#00774e"></div>
<div class="a" style="left:477px;top:72px;width:3px;height:15px;background:#00774e"></div>
<div class="a" style="left:481px;top:72px;width:3px;height:15px;background:#00774e"></div>
<div class="a" style="left:493px;top:72px;width:3px;height:15px;background:#00774e"></div>
<div class="a" style="left:497px;top:72px;width:3px;height:15px;background:#00774e"></div>
<div class="a" style="left:501px;top:72px;width:3px;height:15px;background:#00774e"></div>
<div class="a" style="left:505px;top:72px;width:3px;height:15px;background:#00774e"></div>
<div class="a" style="left:45px;top:96px;width:3px;height:15px;background:#a8000e"></div>
<div class="a" style="left:49px;top:96px;width:3px;height:15px;background:#a8000e"></div>
<div class="a" style="left:53px;top:96px;width:3px;height:15px;background:#a8000e"></div>
<div class="a" style="left:57px;top:96px;width:3px;height:15px;background:#a8000e"></div>
<div class="a" style="left:61px;top:96px;width:3px;height:15px;background:#a8000e"></div>
<div class="a" style="left:73px;top:96px;width:3px;height:15px;background:#a8000e"></div>
<div class="a" style="left:77px;top:96px;width:3px;height:15px;background:#a8000e"></div>
<div class="a" style="left:81px;top:96px;width:3px;height:15px;background:#a8000e"></div>
<div class="a" style="left:85px;top:96px;width:3px;height:15px;background:#a8000e"></div>
<div class="a" style="left:89px;top:96px;width:3px;height:15px;background:#a8000e"></div>
<div class="a" style="left:101px;top:96px;width:3px;height:15px;background:#a8000e"></div>
<div class="a" style="left:105px;top:96px;width:3px;height:15px;background:#a8000e"></div>
<div class="a" style="left:109px;top:96px;width:3px;height:15px;background:#a8000e"></div>
<div class="a" style="left:113px;top:96px;width:3px;height:15px;background:#a8000e"></div>
<div class="a" style="left:117px;top:96px;width:3px;height:15px;background:#a8000e"></div>
<div class="a" style="left:129px;top:96px;width:3px;height:15px;background:#a8000e"></div>
<div class="a" style="left:133px;top:96px;width:3px;height:15px;background:#a8000e"></div>
<div class="a" style="left:137px;top:96px;width:3px;height:15px;background:#a8000e"></div>
<div class="a" style="left:141px;top:96px;width:3px;height:15px;background:#d4a00c"></div>
<div class="a" style="left:145px;top:96px;width:3px;height:15px;background:#d4a00c"></div>
<div class="a" style="left:157px;top:96px;width:3px;height:15px;background:#d4a00c"></div>
<div class="a" style="left:161px;top:96px;width:3px;height:15px;background:#d4a00c"></div>
<div class="a" style="left:165px;top:96px;width:3px;height:15px;background:#d4a00c"></div>
<div class="a" style="left:169px;top:96px;width:3px;height:15px;background:#d4a00c"></div>
<div class="a" style="left:173px;top:96px;width:3px;height:15px;background:#d4a00c"></div>
<div class="a" style="left:185px;top:96px;width:3px;height:15px;background:#d4a00c"></div>
<div class="a" style="left:189px;top:96px;width:3px;height:15px;background:#d4a00c"></div>
<div class="a" style="left:193px;top:96px;width:3px;height:15px;background:#d4a00c"></div>
<div class="a" style="left:197px;top:96px;width:3px;height:15px;background:#d4a00c"></div>
<div class="a" style="left:201px;top:96px;width:3px;height:15px;background:#d4a00c"></div>
<div class="a" style="left:213px;top:96px;width:3px;height:15px;background:#d4a00c"></div>
<div class="a" style="left:217px;top:96px;width:3px;height:15px;background:#d4a00c"></div>
<div class="a" style="left:221px;top:96px;width:3px;height:15px;background:#d4a00c"></div>
<div class="a" style="left:225px;top:96px;width:3px;height:15px;background:#d4a00c"></div>
<div class="a" style="left:229px;top:96px;width:3px;height:15px;background:#d4a00c"></div>
<div class="a" style="left:241px;top:96px;width:3px;height:15px;background:#d4a00c"></div>
<div class="a" style="left:245px;top:96px;width:3px;height:15px;background:#d4a00c"></div>
<div class="a" style="left:249px;top:96px;width:3px;height:15px;background:#d4a00c"></div>
<div class="a" style="left:253px;top:96px;width:3px;height:15px;background:#d4a00c"></div>
<div class="a" style="left:257px;top:96px;width:3px;height:15px;background:#d4a00c"></div>
<div class="a" style="left:269px;top:96px;width:3px;height:15px;background:#d4a00c"></div>
<div class="a" style="left:273px;top:96px;width:3px;height:15px;background:#d4a00c"></div>
<div class="a" style="left:277px;top:96px;width:3px;height:15px;background:#d4a00c"></div>
<div class="a" style="left:281px;top:96px;width:3px;height:15px;background:#d4a00c"></div>
<div class="a" style="left:285px;top:96px;width:3px;height:15px;background:#d4a00c"></div>
<div class="a" style="left:297px;top:96px;width:3px;height:15px;background:#d4a00c"></div>
<div class="a" style="left:301px;top:96px;width:3px;height:15px;background:#d4a00c"></div>
<div class="a" style="left:305px;top:96px;width:3px;height:15px;background:#d4a00c"></div>
<div class="a" style="left:309px;top:96px;width:3px;height:15px;background:#d4a00c"></div>
<div class="a" style="left:313px;top:96px;width:3px;height:15px;background:#d4a00c"></div>
<div class="a" style="left:325px;top:96px;width:3px;height:15px;background:#d4a00c"></div>
<div class="a" style="left:329px;top:96px;width:3px;height:15px;background:#d4a00c"></div>
<div class="a" style="left:333px;top:96px;width:3px;height:15px;background:#d4a00c"></div>
<div class="a" style="left:337px;top:96px;width:3px;height:15px;background:#d4a00c"></div>
<div class="a" style="left:341px;top:96px;width:3px;height:15px;background:#d4a00c"></div>
<div class="a" style="left:353px;top:96px;width:3px;height:15px;background:#d4a00c"></div>
<div class="a" style="left:357px;top:96px;width:3px;height:15px;background:#d4a00c"></div>
<div class="a" style="left:361px;top:96px;width:3px;height:15px;background:#d4a00c"></div>
<div class="a" style="left:365px;top:96px;width:3px;height:15px;background:#d4a00c"></div>
<div class="a" style="left:369px;top:96px;width:3px;height:15px;background:#d4a00c"></div>
<div class="a" style="left:381px;top:96px;width:3px;height:15px;background:#d4a00c"></div>
<div class="a" style="left:385px;top:96px;width:3px;height:15px;background:#d4a00c"></div>
<div class="a" style="left:389px;top:96px;width:3px;height:15px;background:#d4a00c"></div>
<div class="a" style="left:393px;top:96px;width:3px;height:15px;background:#d4a00c"></div>
<div class="a" style="left:397px;top:96px;width:3px;height:15px;background:#d4a00c"></div>
<div class="a" style="left:409px;top:96px;width:3px;height:15px;background:#d4a00c"></div>
<div class="a" style="left:413px;top:96px;width:3px;height:15px;background:#d4a00c"></div>
<div class="a" style="left:417px;top:96px;width:3px;height:15px;background:#d4a00c"></div>
<div class="a" style="left:421px;top:96px;width:3px;height:15px;background:#d4a00c"></div>
<div class="a" style="left:425px;top:96px;width:3px;height:15px;background:#d4a00c"></div>
<div class="a" style="left:437px;top:96px;width:3px;height:15px;background:#d4a00c"></div>
<div class="a" style="left:441px;top:96px;width:3px;height:15px;background:#d4a00c"></div>
<div class="a" style="left:445px;top:96px;width:3px;height:15px;background:#d4a00c"></div>
<div class="a" style="left:449px;top:96px;width:3px;height:15px;background:#d4a00c"></div>
<div class="a" style="left:453px;top:96px;width:3px;height:15px;background:#d4a00c"></div>
<div class="a" style="left:465px;top:96px;width:3px;height:15px;background:#d4a00c"></div>
<div class="a" style="left:469px;top:96px;width:3px;height:15px;background:#d4a00c"></div>
<div class="a" style="left:473px;top:96px;width:3px;height:15px;background:#d4a00c"></div>
<div class="a" style="left:477px;top:96px;width:3px;height:15px;background:#d4a00c"></div>
<div class="a" style="left:481px;top:96px;width:3px;height:15px;background:#d4a00c"></div>
<div class="a" style="left:493px;top:96px;width:3px;height:15px;background:#d4a00c"></div>
<div class="a" style="left:497px;top:96px;width:3px;height:15px;background:#d4a00c"></div>
<div class="a" style="left:501px;top:96px;width:3px;height:15px;background:#d4a00c"></div>
<div class="a" style="left:505px;top:96px;width:3px;height:15px;background:#d4a00c"></div>
<div class="a" style="left:1px;top:142px;width:695px;height:17px;background:#e6e6f0"></div>
</div>
<div class="a" style="left:1455px;top:672px;width:16px;height:14px;background:#f0f0f0"></div>
<div class="a" style="left:1455px;top:686px;width:16px;height:128px;background:#f0f0f0"></div>
<div class="a" style="left:1455px;top:814px;width:16px;height:17px;background:#e6e6f0"></div>
<svg style="left:1459px;top:693px" width="8" height="5"><path d="M0 5 L4 0 L8 5 Z" fill="#a0a0a0"/></svg>
<svg style="left:1459px;top:803px" width="8" height="5"><path d="M0 0 L4 5 L8 0 Z" fill="#a0a0a0"/></svg>
<div class="a" style="left:0px;top:846px;width:1482px;height:8px;background:linear-gradient(#4a4a4a,#6a6a6a)"></div>
<div class="a" style="left:4px;top:836px;width:1470px;height:10px;background:#5a5a5a"></div>
<div class="a" style="left:4px;top:831px;width:1470px;height:15px;border-radius:0 0 7px 7px;background:linear-gradient(#7e7e7e,#6a6a6a);border-bottom:1px solid #1e1e1e;box-shadow:0 1px 3px rgba(0,0,0,.7)"></div>
<div class="t " style="left:12.5px;top:833.41px;font-size:10.5px;line-height:10.5px;color:#3a3a48;font-weight:normal;letter-spacing:0.483px;">PF: 189</div>
<div class="t " style="left:1214.2px;top:833.41px;font-size:10.5px;line-height:10.5px;color:#979797;font-weight:normal;letter-spacing:0.314px;">© FeRox Management Consulting GmbH & Co. KG</div>
<div class="a" style="left:0px;top:854px;width:1482px;height:19px;background:linear-gradient(#2c2c2c,#0a0a0a 60%,#000)"></div>
<div class="t " style="left:9px;top:854.80px;font-size:13px;line-height:13px;color:#c0c0c0;font-weight:normal;letter-spacing:0.193px;">1: Gerald Moore</div>
<div class="a" style="left:114px;top:854px;width:1px;height:18px;background:#333"></div>
<div class="t " style="left:123.5px;top:854.80px;font-size:13px;line-height:13px;color:#c0c0c0;font-weight:normal;letter-spacing:0.502px;">[Return] or [T] to add new tasks / [P] for new subprojects / [M] for new milestones / [F2] to rename this task</div>
<div class="a" style="left:1085.5px;top:854px;width:1px;height:18px;background:#2e2e2e"></div>
<div class="a" style="left:1117px;top:854px;width:1px;height:18px;background:#2e2e2e"></div>
<div class="a" style="left:1146.8px;top:854px;width:1px;height:18px;background:#2e2e2e"></div>
<div class="a" style="left:1193.8px;top:854px;width:1px;height:18px;background:#2e2e2e"></div>
<div class="a" style="left:1241.7px;top:854px;width:1px;height:18px;background:#2e2e2e"></div>
<div class="a" style="left:1272px;top:854px;width:1px;height:18px;background:#2e2e2e"></div>
<div class="a" style="left:1431.6px;top:854px;width:1px;height:18px;background:#2e2e2e"></div>
<svg style="left:1091px;top:858px" width="20" height="10"><rect width="20" height="10" fill="#1a2a7a"/><path d="M0 0 L20 10 M20 0 L0 10" stroke="#fff" stroke-width="2.4"/><path d="M0 0 L20 10 M20 0 L0 10" stroke="#c8102e" stroke-width="1"/><path d="M10 0 V10 M0 5 H20" stroke="#fff" stroke-width="3.6"/><path d="M10 0 V10 M0 5 H20" stroke="#c8102e" stroke-width="2"/></svg>
<svg style="left:1124px;top:855px" width="16" height="16"><circle cx="8" cy="8" r="6" fill="none" stroke="url(#cw)" stroke-width="3.5"/><defs><linearGradient id="cw" x1="0" y1="0" x2="1" y2="1"><stop offset="0" stop-color="#ff3030"/><stop offset="0.3" stop-color="#ffe000"/><stop offset="0.6" stop-color="#20c040"/><stop offset="1" stop-color="#4040ff"/></linearGradient></defs></svg>
<div class="t " style="left:1159px;top:856.00px;font-size:13px;line-height:13px;color:#b4b4b4;font-weight:normal;letter-spacing:0.4px">Hrs.</div>
<div class="t " style="left:1204.5px;top:856.00px;font-size:13px;line-height:13px;color:#555;font-weight:normal;letter-spacing:0.5px">0:00</div>
<svg style="left:1249px;top:856px" width="15" height="14"><defs><radialGradient id="rb" cx="0.4" cy="0.3" r="0.7"><stop offset="0" stop-color="#e8a8a8"/><stop offset="0.45" stop-color="#a83838"/><stop offset="1" stop-color="#5a1818"/></radialGradient></defs><ellipse cx="7.5" cy="7" rx="7" ry="6.5" fill="url(#rb)"/></svg>
<div class="t " style="left:1281.5px;top:856.00px;font-size:13px;line-height:13px;color:#c4c4c4;font-weight:normal;letter-spacing:0.4px">Mo, 06/07/2021</div>
<div class="t " style="left:1388px;top:856.00px;font-size:13px;line-height:13px;color:#c4c4c4;font-weight:normal;letter-spacing:0.4px">12:28</div>
<div class="t " style="left:1440.7px;top:856.00px;font-size:13px;line-height:13px;color:#c4c4c4;font-weight:normal;letter-spacing:0.4px">0.44s</div>
<div class="a" style="left:-4px;top:454px;width:20px;height:33px;border-radius:0 9px 9px 0;background:linear-gradient(90deg,#e4e4e4,#f2f2f2 50%,#e6e6e6);border:1px solid #b8b8b8;box-shadow:2px 1px 3px rgba(0,0,0,.3)"></div>
<svg style="left:4px;top:465px" width="7" height="12"><path d="M0 0 L7 6 L0 12 Z" fill="#505050"/></svg>
<div class="a" style="left:-4px;top:516px;width:20px;height:33px;border-radius:0 9px 9px 0;background:linear-gradient(90deg,#e4e4e4,#f2f2f2 50%,#e6e6e6);border:1px solid #b8b8b8;box-shadow:2px 1px 3px rgba(0,0,0,.3)"></div>
<svg style="left:4px;top:527px" width="7" height="12"><path d="M0 0 L7 6 L0 12 Z" fill="#505050"/></svg>
</body></html>
